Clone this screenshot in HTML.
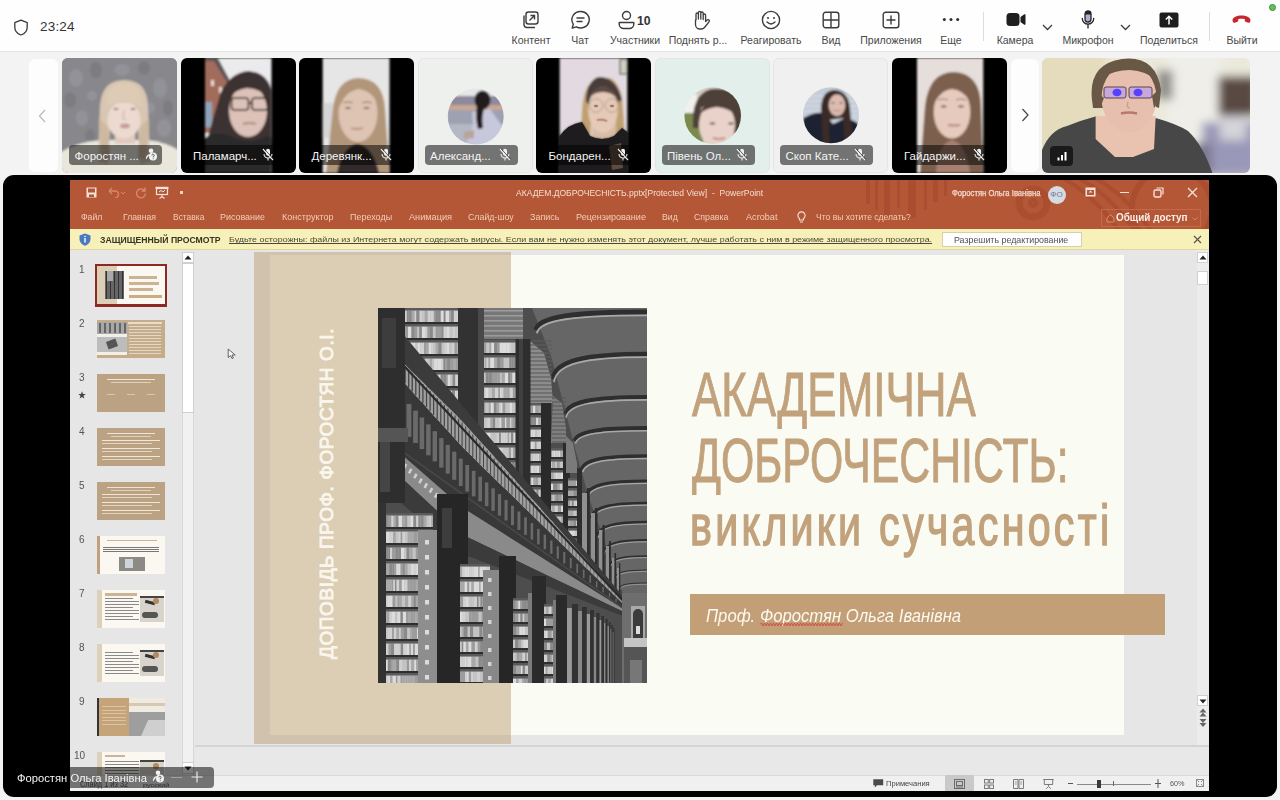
<!DOCTYPE html>
<html><head><meta charset="utf-8">
<style>
*{margin:0;padding:0;box-sizing:border-box}
html,body{width:1280px;height:800px;overflow:hidden;background:#f3f3f3;font-family:"Liberation Sans",sans-serif;position:relative}
.a{position:absolute}
#top{left:0;top:0;width:1280px;height:52px;background:#fefefe;border-bottom:1px solid #e4e4e4}
.lbl{position:absolute;top:34px;font-size:10.5px;color:#484848;white-space:nowrap;transform:translateX(-50%)}
.sep{position:absolute;top:12px;width:1px;height:29px;background:#dcdcdc}
.tile{position:absolute;top:58px;width:115px;height:115px;border-radius:6px;overflow:hidden;background:#000}
.tile>svg{position:absolute;left:0;top:0}
.nm{position:absolute;left:7px;top:87px;width:93px;height:20px;border-radius:4px;background:rgba(0,0,0,.52);color:#f4f4f4;font-size:11.5px;line-height:22.5px;padding-left:5.5px;white-space:nowrap}
.tile .mic{position:absolute;left:74px;top:3px}
#share{left:3px;top:175px;width:1274px;height:622px;background:#000;border-radius:11px}
#ppt{left:70px;top:180px;width:1139px;height:611px;background:#e6e6e6;overflow:hidden}
</style></head><body>
<div id="top" class="a">
<svg class="a" style="left:13px;top:19px" width="16" height="17" viewBox="0 0 16 17"><path d="M8 1.2 L14.2 3.6 V8.2 C14.2 12 11.6 14.6 8 16 C4.4 14.6 1.8 12 1.8 8.2 V3.6 Z" fill="none" stroke="#3a3a3a" stroke-width="1.3" stroke-linejoin="round"/></svg>
<div class="a" style="left:40px;top:19px;font-size:13.5px;color:#333;letter-spacing:0.2px">23:24</div>
<!-- content icon -->
<svg class="a" style="left:521px;top:10px" width="19" height="20" viewBox="0 0 19 20"><rect x="5" y="2" width="12" height="12" rx="2.5" fill="none" stroke="#3c3c3c" stroke-width="1.4"/><path d="M3 5.5 V14.5 A3 3 0 0 0 6 17.5 H14" fill="none" stroke="#3c3c3c" stroke-width="1.4"/><path d="M8.5 10.5 L13.5 5.5 M9.5 5.5 H13.5 V9.5" fill="none" stroke="#3c3c3c" stroke-width="1.4"/></svg>
<div class="lbl" style="left:531px">Контент</div>
<!-- chat -->
<svg class="a" style="left:570px;top:10px" width="21" height="20" viewBox="0 0 21 20"><path d="M10.5 1.5 A8.5 8.2 0 1 1 6.5 16.8 L2.2 18 L3.3 14.2 A8.5 8.2 0 0 1 10.5 1.5 Z" fill="none" stroke="#3c3c3c" stroke-width="1.4" stroke-linejoin="round"/><path d="M7 8 H14 M7 11.5 H12" stroke="#3c3c3c" stroke-width="1.4" stroke-linecap="round"/></svg>
<div class="lbl" style="left:580px">Чат</div>
<!-- participants -->
<svg class="a" style="left:617px;top:10px" width="19" height="20" viewBox="0 0 19 20"><circle cx="9.5" cy="5.5" r="4" fill="none" stroke="#3c3c3c" stroke-width="1.4"/><path d="M2.2 12.5 H16.8 V14 A4.5 4.5 0 0 1 12.3 18.5 H6.7 A4.5 4.5 0 0 1 2.2 14 Z" fill="none" stroke="#3c3c3c" stroke-width="1.4" stroke-linejoin="round"/></svg>
<div class="a" style="left:637px;top:13.5px;font-size:12.2px;font-weight:bold;color:#333">10</div>
<div class="lbl" style="left:635px">Участники</div>
<!-- hand -->
<svg class="a" style="left:691px;top:10px" width="19" height="20" viewBox="0 0 19 20"><path d="M5 10 V4.2 A1.2 1.2 0 0 1 7.4 4.2 V9 V2.6 A1.2 1.2 0 0 1 9.8 2.6 V9 V3.2 A1.2 1.2 0 0 1 12.2 3.2 V9.5 V5.2 A1.2 1.2 0 0 1 14.6 5.2 V11.5 L16.5 9.8 A1.3 1.3 0 0 1 18 11.8 L13.5 17.5 A4 4 0 0 1 10.4 19 H9 A4.5 4.5 0 0 1 4.5 14.5 V10 Z" fill="none" stroke="#3c3c3c" stroke-width="1.3" stroke-linejoin="round"/></svg>
<div class="lbl" style="left:698px">Поднять р...</div>
<!-- smile -->
<svg class="a" style="left:761px;top:10px" width="20" height="20" viewBox="0 0 20 20"><circle cx="10" cy="10" r="8.6" fill="none" stroke="#3c3c3c" stroke-width="1.4"/><circle cx="7" cy="8" r="1" fill="#3c3c3c"/><circle cx="13" cy="8" r="1" fill="#3c3c3c"/><path d="M6 12 Q10 15.8 14 12" fill="none" stroke="#3c3c3c" stroke-width="1.4" stroke-linecap="round"/></svg>
<div class="lbl" style="left:771px">Реагировать</div>
<!-- grid -->
<svg class="a" style="left:822px;top:11px" width="18" height="18" viewBox="0 0 18 18"><rect x="1.2" y="1.2" width="15.6" height="15.6" rx="2.5" fill="none" stroke="#3c3c3c" stroke-width="1.4"/><path d="M9 1.2 V16.8 M1.2 9 H16.8" stroke="#3c3c3c" stroke-width="1.4"/></svg>
<div class="lbl" style="left:831px">Вид</div>
<!-- apps -->
<svg class="a" style="left:882px;top:11px" width="18" height="18" viewBox="0 0 18 18"><rect x="1.2" y="1.2" width="15.6" height="15.6" rx="2.5" fill="none" stroke="#3c3c3c" stroke-width="1.4"/><path d="M9 4.5 V13.5 M4.5 9 H13.5" stroke="#3c3c3c" stroke-width="1.4"/></svg>
<div class="lbl" style="left:891px">Приложения</div>
<!-- more -->
<svg class="a" style="left:942px;top:17px" width="18" height="5" viewBox="0 0 18 5"><circle cx="2.3" cy="2.5" r="1.5" fill="#2e2e2e"/><circle cx="9" cy="2.5" r="1.5" fill="#2e2e2e"/><circle cx="15.7" cy="2.5" r="1.5" fill="#2e2e2e"/></svg>
<div class="lbl" style="left:951px">Еще</div>
<div class="sep" style="left:983px"></div>
<!-- camera -->
<svg class="a" style="left:1006px;top:12px" width="20" height="15" viewBox="0 0 20 15"><rect x="0.5" y="1" width="13" height="13" rx="3.5" fill="#1e1e1e"/><path d="M14.5 5 L18.3 2.3 A0.8 0.8 0 0 1 19.5 3 V12 A0.8 0.8 0 0 1 18.3 12.7 L14.5 10 Z" fill="#1e1e1e"/></svg>
<svg class="a" style="left:1042px;top:24px" width="11" height="7" viewBox="0 0 11 7"><path d="M1 1 L5.5 5.5 L10 1" fill="none" stroke="#3c3c3c" stroke-width="1.3"/></svg>
<div class="lbl" style="left:1015px">Камера</div>
<!-- mic -->
<svg class="a" style="left:1080px;top:10px" width="16" height="19" viewBox="0 0 16 19"><rect x="5" y="1" width="6" height="11" rx="3" fill="#aab0d8" stroke="#222" stroke-width="1.3"/><path d="M5 1.5 h6 v3 h-6z" fill="#222"/><path d="M2.3 8.5 A5.7 5.7 0 0 0 13.7 8.5 M8 14.2 V18" fill="none" stroke="#222" stroke-width="1.3" stroke-linecap="round"/></svg>
<svg class="a" style="left:1120px;top:24px" width="11" height="7" viewBox="0 0 11 7"><path d="M1 1 L5.5 5.5 L10 1" fill="none" stroke="#3c3c3c" stroke-width="1.3"/></svg>
<div class="lbl" style="left:1088px">Микрофон</div>
<!-- share -->
<svg class="a" style="left:1159px;top:12px" width="20" height="16" viewBox="0 0 20 16"><rect x="0.5" y="0.5" width="19" height="15" rx="2" fill="#1e1e1e"/><path d="M10 12.5 V4.5 M6.8 7.5 L10 4.3 L13.2 7.5" fill="none" stroke="#fff" stroke-width="1.5"/></svg>
<div class="lbl" style="left:1169px">Поделиться</div>
<div class="sep" style="left:1209px"></div>
<!-- leave -->
<svg class="a" style="left:1231px;top:14px" width="21" height="10" viewBox="0 0 21 10"><path d="M1.5 6.5 C1.5 3 6 1.5 10.5 1.5 C15 1.5 19.5 3 19.5 6.5 L19 8 C18.7 8.8 18 9 17.2 8.7 L14.6 7.8 C14 7.6 13.7 7 13.8 6.3 L13.9 5.3 C12 4.7 9 4.7 7.1 5.3 L7.2 6.3 C7.3 7 7 7.6 6.4 7.8 L3.8 8.7 C3 9 2.3 8.8 2 8 Z" fill="#c8262e"/></svg>
<div class="lbl" style="left:1242px">Выйти</div>
<div class="a" style="left:1269px;top:4px;width:7px;height:7px;border-radius:50%;background:#5dc25a;border:1px solid #3d8f3a"></div>
</div>
<div id="strip" class="a" style="left:0;top:53px;width:1280px;height:122px;background:#f3f3f3"></div>
<svg width="0" height="0" style="position:absolute"><defs>
<filter id="b05" x="-5%" y="-5%" width="110%" height="110%"><feGaussianBlur stdDeviation="0.6"/></filter>
<filter id="b1" x="-20%" y="-20%" width="140%" height="140%"><feGaussianBlur stdDeviation="1.1"/></filter>
<filter id="b2" x="-20%" y="-20%" width="140%" height="140%"><feGaussianBlur stdDeviation="2.2"/></filter>
<filter id="b3" x="-20%" y="-20%" width="140%" height="140%"><feGaussianBlur stdDeviation="5"/></filter>
<symbol id="mmic" viewBox="0 0 12 13"><rect x="4" y="0.8" width="4" height="7" rx="2" fill="#f0f0f0"/><path d="M2 6 A4 4 0 0 0 10 6 M6 10 V12.5" fill="none" stroke="#f0f0f0" stroke-width="1.1"/><path d="M1 1 L11 12" stroke="#f0f0f0" stroke-width="1.2"/><path d="M2 0.6 L12 11.6" stroke="rgba(40,40,40,.8)" stroke-width="0.9"/></symbol>
<symbol id="cohost" viewBox="0 0 13 13"><circle cx="6" cy="2.8" r="2.3" fill="#f2f2f2"/><path d="M1 11.5 A4 4.5 0 0 1 5 6" fill="#f2f2f2"/><circle cx="8" cy="8.5" r="4" fill="#f2f2f2"/><path d="M6.8 7.4 A1.2 1.2 0 1 1 8.2 8.6 V9.4" fill="none" stroke="#555" stroke-width="0.9"/><circle cx="8.2" cy="10.8" r="0.5" fill="#555"/></symbol>
</defs></svg>
<div class="a" style="left:29px;top:59px;width:29px;height:113px;background:#fdfdfd;border-radius:6px"></div>
<svg class="a" style="left:38px;top:109px" width="9" height="14" viewBox="0 0 9 14"><path d="M7 1 L1.5 7 L7 13" fill="none" stroke="#b8b8b8" stroke-width="1.2"/></svg>
<div class="a" style="left:1011px;top:59px;width:28px;height:113px;background:#fdfdfd;border-radius:6px"></div>
<svg class="a" style="left:1021px;top:108px" width="9" height="14" viewBox="0 0 9 14"><path d="M1.5 1 L7 7 L1.5 13" fill="none" stroke="#444" stroke-width="1.2"/></svg>
<div class="tile" style="left:62px;width:115px;background:#87878c"><svg width="115" height="115" viewBox="0 0 115 115"><g filter="url(#b1)">
<rect x="-10" y="-10" width="135" height="135" fill="#87878c"/>
<g fill="#a0a0a8" opacity=".45"><ellipse cx="14" cy="20" rx="7" ry="9"/><ellipse cx="60" cy="12" rx="8" ry="6"/><ellipse cx="98" cy="30" rx="7" ry="10"/><ellipse cx="20" cy="60" rx="6" ry="8"/><ellipse cx="102" cy="70" rx="7" ry="9"/><ellipse cx="12" cy="95" rx="8" ry="7"/><ellipse cx="30" cy="38" rx="5" ry="5"/><ellipse cx="88" cy="50" rx="5" ry="6"/></g>
<g fill="#6c6c72" opacity=".4"><ellipse cx="34" cy="12" rx="6" ry="8"/><ellipse cx="82" cy="10" rx="6" ry="7"/><ellipse cx="8" cy="42" rx="6" ry="8"/><ellipse cx="106" cy="50" rx="5" ry="8"/><ellipse cx="28" cy="78" rx="5" ry="7"/><ellipse cx="96" cy="92" rx="6" ry="6"/></g>
<path d="M-10 125 V100 Q10 84 40 82 H84 Q108 84 125 98 V125Z" fill="#e9e6dc"/>
<path d="M36 104 L38 48 Q40 22 62 22 Q85 22 86 48 L88 104 L78 106 L76 70 H48 L46 106Z" fill="#d8c6b2"/>
<rect x="53" y="74" width="20" height="12" fill="#e2cabd"/>
<ellipse cx="62" cy="62" rx="16.5" ry="18.5" fill="#ecdad0"/>
<path d="M44 48 Q44 25 62 25 Q81 25 80 48 Q72 45 62 45 Q52 45 44 48Z" fill="#ddcbb6"/>
<path d="M37 60 Q36 78 42 100 L48 100 L46 70Z M87 60 Q88 78 82 100 L76 100 L78 70Z" fill="#cdb8a0"/>
<ellipse cx="54.0" cy="51.0" rx="2.5" ry="0.9" fill="#8a7068"/><ellipse cx="71.0" cy="51.0" rx="2.5" ry="0.9" fill="#8a7068"/>
<path d="M62 52 L61 60 Q62 62 64 61" fill="none" stroke="#d8b8ac" stroke-width="1.5"/>
<ellipse cx="63" cy="68" rx="5" ry="2.5" fill="#c89c98"/>
</g></svg><div class="nm" style="left:7px;top:87px">Форостян ...<svg style="position:absolute;left:76px;top:3px" width="13" height="13"><use href="#cohost"/></svg></div></div>
<div class="tile" style="left:180.5px;width:115px;background:#000"><svg width="115" height="115" viewBox="0 0 115 115"><g filter="url(#b1)">
<rect x="24" y="0" width="66.5" height="115" fill="#ebebed"/>
<path d="M24 -5 H34 L48 21 V75 H24Z" fill="#a26c5c"/>
<path d="M24 -5 H34 L48 21 L47 26 L33 3 H24Z" fill="#5a5458"/>
<rect x="30" y="22" width="3" height="6" fill="#e8d8d0"/><rect x="38" y="29" width="3" height="6" fill="#e8d8d0"/>
<rect x="24" y="44" width="7" height="25" fill="#8fa4b8"/>
<path d="M24 90 Q32 60 40 34 Q50 14 68 13 Q86 15 90.5 32 V100 H24Z" fill="#3e3230"/>
<ellipse cx="67" cy="53" rx="19" ry="26" fill="#dcc2b8"/>
<path d="M47 42 Q49 24 64 22 Q82 22 87 40 Q80 31 66 30 Q54 31 47 42Z" fill="#3e3230"/>
<rect x="50.5" y="40" width="17" height="12" rx="3" fill="none" stroke="#3a2a26" stroke-width="1.6"/>
<rect x="71" y="40" width="16" height="12" rx="3" fill="none" stroke="#3a2a26" stroke-width="1.6"/>
<path d="M67.5 45 H71" stroke="#3a2a26" stroke-width="1.6"/>
<path d="M62 66 Q69 64 75 66" stroke="#b08880" stroke-width="2" fill="none"/>
<path d="M24 115 V80 Q34 72 50 78 Q68 88 86 78 L90.5 80 V115Z" fill="#2a2a2c"/>
</g></svg><div class="nm" style="left:7px;top:87px">Паламарч...<svg class="mic" width="12" height="13"><use href="#mmic"/></svg></div></div>
<div class="tile" style="left:299px;width:115px;background:#000"><svg width="115" height="115" viewBox="0 0 115 115"><g filter="url(#b1)">
<rect x="23.7" y="0" width="66.8" height="115" fill="#e6e6e6"/>
<rect x="23.7" y="45" width="12" height="35" fill="#d5d5d5"/>
<path d="M27 115 L34 50 Q38 20 60 20 Q84 21 86 50 L90.5 115Z" fill="#b2967a"/>
<ellipse cx="59" cy="55" rx="19.5" ry="29" fill="#dec4b2"/>
<path d="M40 50 Q41 24 60 23 Q79 24 80 50 Q76 34 60 31 Q46 33 40 50Z" fill="#b2967a"/>
<ellipse cx="49.0" cy="50.0" rx="3.0" ry="1.1" fill="#7a6254"/><ellipse cx="67.5" cy="50.0" rx="3.0" ry="1.1" fill="#7a6254"/>
<path d="M44 45 Q49 43 54 45 M63 45 Q68 43 73 45" stroke="#a88a78" stroke-width="1.3" fill="none"/>
<path d="M52 70 Q58 72 64 70" stroke="#b88c80" stroke-width="1.8" fill="none"/>
<path d="M38 115 Q44 88 58 86 Q74 88 80 115Z" fill="#302a2a"/>
</g></svg><div class="nm" style="left:7px;top:87px">Деревянк...<svg class="mic" width="12" height="13"><use href="#mmic"/></svg></div></div>
<div class="tile" style="left:417.5px;width:115px;background:#eef0ee;border:1px solid #e4e6e5"><svg width="115" height="115" viewBox="0 0 115 115" style="left:-1px;top:-1px"><defs><clipPath id="c4"><circle cx="57.7" cy="58.6" r="28"/></clipPath></defs>
<g clip-path="url(#c4)"><g filter="url(#b1)">
<rect x="29" y="30" width="58" height="58" fill="#e4e6ea"/>
<rect x="29" y="38" width="58" height="9" fill="#8c8a9c"/>
<rect x="29" y="47" width="58" height="5" fill="#c9a692"/>
<rect x="29" y="52" width="58" height="14" fill="#9ca2b2"/>
<rect x="29" y="66" width="58" height="22" fill="#b4b8c4"/>
<path d="M54 54 L72 51 L84 68 L82 88 L48 88 L55 66Z" fill="#c8c8dc"/>
<path d="M46 74 L56 72 L56 80 L46 81Z" fill="#b8a498"/>
<ellipse cx="64.5" cy="42" rx="8" ry="9.5" fill="#221c1e"/>
<path d="M59 47 Q57 60 60 71 L65 70 Q63 58 67 48Z" fill="#221c1e"/>
</g></g></svg><div class="nm" style="left:6px;top:86px">Александ...<svg class="mic" width="12" height="13"><use href="#mmic"/></svg></div></div>
<div class="tile" style="left:536px;width:115px;background:#000"><svg width="115" height="115" viewBox="0 0 115 115"><g filter="url(#b1)">
<rect x="23.7" y="0" width="67.6" height="115" fill="#e2dae0"/>
<rect x="84" y="1.5" width="7.3" height="14.5" fill="#cfd0c4" stroke="#5a5a50" stroke-width="1.2"/>
<path d="M46 80 Q44 40 52 28 Q62 18 74 20 Q86 26 87 50 L90 92 L80 92 L78 50 L56 50 L54 84Z" fill="#bfa070"/>
<path d="M50 44 Q50 24 62 19 Q80 18 86 42 L82 44 Q76 30 66 30 Q56 31 53 46Z" fill="#4a3e3a"/>
<rect x="56" y="60" width="24" height="26" fill="#d9bca8"/>
<ellipse cx="67" cy="52" rx="14.8" ry="23" fill="#e5cab8"/>
<path d="M53 40 Q56 29 67 29 Q78 29 81 40 Q75 34 67 34 Q58 34 53 40Z" fill="#5a4a42"/>
<circle cx="60" cy="47.5" r="6.8" fill="none" stroke="#b09888" stroke-width="1"/>
<circle cx="76" cy="47.5" r="6.8" fill="none" stroke="#b09888" stroke-width="1"/>
<ellipse cx="60.0" cy="48.0" rx="2.2" ry="0.8" fill="#7a6258"/><ellipse cx="76.0" cy="48.0" rx="2.2" ry="0.8" fill="#7a6258"/>
<path d="M61 62 Q66 61 71 63" stroke="#b8907e" stroke-width="1.6" fill="none"/>
<path d="M23.7 115 V78 Q32 66 46 64 L54 78 Q66 84 78 78 L86 70 L91.3 74 V115Z" fill="#1e1c1e"/>
<path d="M73 88 L85 85 L87 110 L76 112Z" fill="#5e4c40"/>
</g><ellipse cx="60.0" cy="48.0" rx="2.2" ry="0.8" fill="#7a6258"/><ellipse cx="76.0" cy="48.0" rx="2.2" ry="0.8" fill="#7a6258"/>
<path d="M61 62 Q66 61 71 63" stroke="#b8907e" stroke-width="1.6" fill="none"/>
<path d="M23.7 115 V78 Q32 66 46 64 L54 78 Q66 84 78 78 L86 70 L91.3 74 V115Z" fill="#1e1c1e"/>
<path d="M73 88 L85 85 L87 110 L76 112Z" fill="#5e4c40"/>
</g></svg><div class="nm" style="left:7px;top:87px">Бондарен...<svg class="mic" width="12" height="13"><use href="#mmic"/></svg></div></div>
<div class="tile" style="left:654.5px;width:115px;background:#e3efea;border:1px solid #dde8e4"><svg width="115" height="115" viewBox="0 0 115 115" style="left:-1px;top:-1px"><defs><clipPath id="c6"><circle cx="57.7" cy="57.6" r="28.3"/></clipPath></defs>
<g clip-path="url(#c6)"><g filter="url(#b1)">
<rect x="28" y="28" width="60" height="60" fill="#d6ccc6"/>
<rect x="28" y="36" width="14" height="20" fill="#f0f0ee"/>
<rect x="28" y="55" width="20" height="33" fill="#7a8a4e"/>
<path d="M38 70 Q36 36 56 31 Q82 28 88 50 L90 80 L80 80 L76 50 Q62 40 46 50 L44 70Z" fill="#4e4038"/>
<ellipse cx="62" cy="67" rx="18" ry="23" fill="#e9d2ca"/>
<path d="M44 56 Q50 42 64 43 Q78 45 82 58 Q74 50 62 49 Q52 50 44 56Z" fill="#4e4038"/>
<ellipse cx="57.5" cy="65.5" rx="3.0" ry="1.1" fill="#5a4440"/><ellipse cx="76.0" cy="65.5" rx="3.0" ry="1.1" fill="#5a4440"/>
<path d="M58 80 Q64 82 70 80" stroke="#c08a88" stroke-width="2" fill="none"/>
</g></g></svg><div class="nm" style="left:6px;top:86px">Півень Ол...<svg class="mic" width="12" height="13"><use href="#mmic"/></svg></div></div>
<div class="tile" style="left:773px;width:115px;background:#eff0ef;border:1px solid #e4e5e4"><svg width="115" height="115" viewBox="0 0 115 115" style="left:-1px;top:-1px"><defs><clipPath id="c7"><circle cx="58" cy="57.3" r="28"/></clipPath></defs>
<g clip-path="url(#c7)"><g filter="url(#b1)">
<rect x="28" y="28" width="60" height="60" fill="#c4ccd8"/>
<g stroke="#dfe4ea" stroke-width="1.2">
<path d="M30 38 H88 M30 43 H88 M30 48 H88 M30 53 H88 M30 58 H88 M30 63 H88"/></g>
<path d="M30 60 Q45 52 52 56 L60 66 L72 60 Q84 62 88 70 V90 H30Z" fill="#1c2230"/>
<path d="M50 90 L48 50 Q49 32 62 32 Q75 33 77 50 L80 90 L72 90 L70 60 L56 62 L57 90Z" fill="#3a2a28"/>
<ellipse cx="64" cy="47.3" rx="8.3" ry="11" fill="#dcbcb0"/>
<ellipse cx="60.0" cy="45.0" rx="1.5" ry="0.7" fill="#5a4038"/><ellipse cx="68.0" cy="45.0" rx="1.5" ry="0.7" fill="#5a4038"/>
<path d="M60 52 Q64 54 68 52" stroke="#b8887e" stroke-width="1.3" fill="none"/>
</g></g></svg><div class="nm" style="left:6px;top:86px">Скоп Кате...<svg class="mic" width="12" height="13"><use href="#mmic"/></svg></div></div>
<div class="tile" style="left:891.5px;width:115px;background:#000"><svg width="115" height="115" viewBox="0 0 115 115"><g filter="url(#b1)">
<rect x="25" y="0" width="66.3" height="115" fill="#e6dedb"/>
<path d="M28 115 L33 48 Q37 14 62 14 Q88 15 89 48 L91.3 115Z" fill="#7c604e"/>
<ellipse cx="60" cy="54" rx="18.3" ry="26.6" fill="#e6cabd"/>
<path d="M41 48 Q43 24 61 23 Q79 24 80 46 Q72 32 60 31 Q48 32 41 48Z" fill="#7c604e"/>
<ellipse cx="51.7" cy="48.5" rx="3.0" ry="0.9" fill="#6a5048"/><ellipse cx="69.0" cy="48.5" rx="3.0" ry="0.9" fill="#6a5048"/>
<path d="M46 42 Q51 40 56 42 M64 42 Q69 40 74 42" stroke="#9a7868" stroke-width="1.2" fill="none"/>
<path d="M56 67 Q62 68 68 67" stroke="#b88a80" stroke-width="1.8" fill="none"/>
<path d="M44 115 Q46 85 60 82 Q74 85 78 115Z" fill="#a88070"/>
</g></svg><div class="nm" style="left:7px;top:87px">Гайдаржи...<svg class="mic" width="12" height="13"><use href="#mmic"/></svg></div></div>
<div class="tile" style="left:1042px;width:208px;background:#ebe8d8"><svg width="208" height="115" viewBox="0 0 208 115"><g filter="url(#b3)">
<rect x="-10" y="-10" width="228" height="135" fill="#ebe9dc"/>
<rect x="-10" y="-10" width="75" height="135" fill="#e4dcbc"/>
<rect x="125" y="-10" width="55" height="135" fill="#efeee8"/>
<rect x="115" y="12" width="16" height="30" fill="#8e8c88"/>
<rect x="176" y="18" width="40" height="40" fill="#5a4a42"/>
<rect x="160" y="64" width="56" height="55" fill="#9a98b8"/>
<rect x="178" y="58" width="26" height="24" fill="#d4d4da"/>
<rect x="150" y="85" width="20" height="30" fill="#7a7890"/>
</g>
<g filter="url(#b05)">
<path d="M50 42 Q46 6 80 1 Q114 -3 119 32 L117 50 L106 46 L102 20 Q86 12 68 18 L62 50 L51 50Z" fill="#6a5846"/>
<path d="M0 120 V92 Q8 72 25 68 Q40 62 55 58 L68 91 L91 99 L113.7 60 Q135 66 146 73 Q162 88 172 120Z" fill="#474747"/>
<path d="M53.6 58 L113.7 58 L112 91 L91 99 L73 99 L53.6 81Z" fill="#e9c2b0"/>
<ellipse cx="87" cy="40" rx="27.5" ry="34" fill="#e7bfae"/>
<path d="M60 20 Q68 3 88 3 Q108 4 114 22 Q104 13 88 12 Q72 12 60 20Z" fill="#6a5846"/>
<path d="M50 30 Q54 48 58 50 L62 40 Z M118 30 Q116 46 112 50 L110 38Z" fill="#6a5846"/>
<rect x="62" y="29" width="22" height="11" rx="2" fill="#c8a8d8" stroke="#4a3a48" stroke-width="0.9"/>
<rect x="87" y="29" width="23" height="11" rx="2" fill="#c8a8d8" stroke="#4a3a48" stroke-width="0.9"/>
<ellipse cx="75" cy="34.5" rx="4.5" ry="3.8" fill="#5840ff"/><ellipse cx="96" cy="34.5" rx="4.5" ry="3.8" fill="#5840ff"/>
<path d="M86 44 Q84 50 88 50" stroke="#c8a090" stroke-width="1.5" fill="none"/>
<path d="M79 55.5 Q87 53.5 95 55.5" stroke="#b8786c" stroke-width="2.4" fill="none"/>
</g></svg><div class="a" style="left:8px;top:88px;width:23px;height:20px;border-radius:4px;background:rgba(20,20,20,.88)"></div><svg class="a" style="left:15px;top:93px" width="10" height="10" viewBox="0 0 10 10"><rect x="0.5" y="6.5" width="2" height="3" fill="#fff"/><rect x="4" y="4" width="2" height="5.5" fill="#fff"/><rect x="7.5" y="1" width="2" height="8.5" fill="#fff"/></svg></div>
<div id="share" class="a"></div>
<div id="ppt" class="a">
<!-- title bar -->
<div class="a" style="left:0;top:0;width:1139px;height:49px;background:#b35736"></div>
<svg class="a" style="left:750px;top:0" width="389" height="49" viewBox="0 0 389 49">
<g fill="#a4462c" opacity=".55">
<rect x="46" y="0" width="4" height="24"/><rect x="55" y="0" width="3" height="30"/><rect x="64" y="0" width="6" height="36"/><rect x="77" y="0" width="3" height="28"/><rect x="88" y="0" width="8" height="38"/><rect x="104" y="0" width="3" height="30"/><rect x="113" y="0" width="5" height="22"/><rect x="124" y="0" width="3" height="16"/>
</g>
<g fill="none" stroke="#a4462c" opacity=".5">
<circle cx="213" cy="23" r="14" stroke-width="7"/><circle cx="213" cy="23" r="3" stroke-width="4"/>
<path d="M238 -4 Q270 10 300 52 M254 -4 Q286 10 316 52 M270 -4 Q302 10 332 52" stroke-width="4"/>
<circle cx="352" cy="28" r="40" stroke-width="6"/>
</g></svg>
<!-- quick access -->
<svg class="a" style="left:16px;top:7px" width="11" height="11" viewBox="0 0 11 11"><path d="M0.5 0.5 H10.5 V10.5 H0.5Z" fill="#f5e3da"/><rect x="2" y="1.5" width="7" height="4" fill="#b35736"/><rect x="3" y="7.5" width="5" height="2.5" fill="#b35736"/></svg>
<svg class="a" style="left:37px;top:7px" width="20" height="11" viewBox="0 0 20 11"><path d="M2 4 H8 A3.5 3.5 0 0 1 8 11 M2 4 L5 1 M2 4 L5 7" fill="none" stroke="#d98a6e" stroke-width="1.3"/><path d="M14 5 L16 7 L18 5" fill="none" stroke="#d98a6e" stroke-width="1"/></svg>
<svg class="a" style="left:65px;top:7px" width="12" height="12" viewBox="0 0 12 12"><path d="M9.5 3.5 A4.5 4.5 0 1 0 10.5 6.5 M10 0.5 V4 H6.5" fill="none" stroke="#d98a6e" stroke-width="1.3"/></svg>
<svg class="a" style="left:85px;top:6px" width="14" height="13" viewBox="0 0 14 13"><rect x="0.5" y="0.8" width="13" height="2" fill="#f5e3da"/><rect x="1.5" y="2.5" width="11" height="6" fill="none" stroke="#f5e3da" stroke-width="1.2"/><path d="M4 6 L6 4.5 L8 6 L10 4" fill="none" stroke="#f5e3da" stroke-width="1"/><path d="M7 8.5 V11 M4.5 12.5 L7 10.5 L9.5 12.5" fill="none" stroke="#f5e3da" stroke-width="1.1"/></svg>
<div class="a" style="left:110px;top:11px;width:3px;height:3px;background:#f0d5c8"></div>
<div class="a" style="left:977.5px;top:5.5px;width:18px;height:18px;border-radius:50%;background:#d6dae2;color:#6a7a98;font-size:8px;line-height:18px;text-align:center">ФО</div>
<svg class="a" style="left:1015px;top:7px" width="11" height="10" viewBox="0 0 11 10"><rect x="0.5" y="0.5" width="10" height="9" fill="#f5e3da"/><rect x="2" y="3" width="7" height="5" fill="#b35736"/><path d="M5.5 3.5 L3.5 5.5 H7.5Z" fill="#f5e3da"/></svg>
<div class="a" style="left:1050px;top:12px;width:9px;height:1.3px;background:#f5e3da"></div>
<svg class="a" style="left:1083px;top:7px" width="11" height="11" viewBox="0 0 11 11"><rect x="1" y="3" width="7" height="7" rx="1.5" fill="none" stroke="#f5e3da" stroke-width="1.4"/><path d="M3.5 1 H10 V7.5" fill="none" stroke="#f5e3da" stroke-width="1.2"/></svg>
<svg class="a" style="left:1117px;top:7px" width="11" height="11" viewBox="0 0 11 11"><path d="M1 1 L10 10 M10 1 L1 10" stroke="#f5e3da" stroke-width="1.3"/></svg>
<!-- menu -->
<svg class="a" style="left:727px;top:30px" width="9" height="13" viewBox="0 0 9 13"><path d="M2.5 8.5 A3.6 3.6 0 1 1 6.5 8.5 V10 H2.5Z M3 12 H6" fill="none" stroke="#f5e3da" stroke-width="1.1"/></svg>
<div class="a" style="left:1031px;top:28.5px;width:100px;height:18px;border:1px solid #c4694c"></div>
<svg class="a" style="left:1036px;top:33px" width="9" height="10" viewBox="0 0 9 10"><path d="M1 9 V5 L4.5 1.5 L8 5 V9Z" fill="none" stroke="#d98a6e" stroke-width="1"/></svg>
<svg class="a" style="left:1122px;top:37px" width="6" height="4" viewBox="0 0 6 4"><path d="M0.5 0.5 L3 3 L5.5 0.5" fill="none" stroke="#d98a6e" stroke-width="0.9"/></svg>

<!-- yellow bar -->
<div class="a" style="left:0;top:49px;width:1139px;height:21px;background:#f8f0b9;border-bottom:1px solid #e0d6a0"></div>
<svg class="a" style="left:9px;top:53px" width="12" height="13" viewBox="0 0 12 13"><path d="M6 0.5 L11.5 2.5 V6 C11.5 9.5 9 11.5 6 12.7 C3 11.5 0.5 9.5 0.5 6 V2.5Z" fill="#4a7ac0"/><rect x="5.3" y="5" width="1.4" height="4.5" fill="#fff"/><circle cx="6" cy="3.5" r="0.8" fill="#fff"/></svg>
<div class="a" style="left:872px;top:52px;width:140px;height:15px;background:#fff;border:1px solid #d6d0b0;"></div>
<svg class="a" style="left:1123px;top:55px" width="9" height="9" viewBox="0 0 9 9"><path d="M1 1 L8 8 M8 1 L1 8" stroke="#555" stroke-width="1.2"/></svg>

<!-- body -->
<div class="a" style="left:0;top:70px;width:112px;height:525px;background:#e6e6e6"></div>
<div class="a" style="left:112px;top:72px;width:12px;height:523px;background:#f1f1f1;border-left:1px solid #d8d8d8;border-right:1px solid #d8d8d8"></div>
<div class="a" style="left:112px;top:72px;width:12px;height:11px;background:#fff;border:1px solid #d0d0d0"></div>
<svg class="a" style="left:114px;top:75px" width="8" height="5" viewBox="0 0 8 5"><path d="M0.5 4.5 L4 0.5 L7.5 4.5Z" fill="#222"/></svg>
<div class="a" style="left:112px;top:83px;width:12px;height:150px;background:#fff;border:1px solid #d0d0d0"></div>
<div class="a" style="left:112px;top:582px;width:12px;height:12px;background:#fff;border:1px solid #d0d0d0"></div>
<svg class="a" style="left:114px;top:586px" width="8" height="5" viewBox="0 0 8 5"><path d="M0.5 0.5 L4 4.5 L7.5 0.5Z" fill="#222"/></svg>
<div class="a" style="left:125px;top:70px;width:1002px;height:525px;background:#e6e6e6"></div>
<!-- notes divider -->
<div class="a" style="left:125px;top:565px;width:1014px;height:2px;background:#d4d4d4"></div>
<div class="a" style="left:125px;top:567px;width:1014px;height:28px;background:#e8e8e8"></div>
<!-- right scrollbar -->
<div class="a" style="left:1127px;top:70px;width:12px;height:495px;background:#ececec"></div>
<div class="a" style="left:1127px;top:72px;width:11px;height:11px;background:#fff;border:1px solid #d0d0d0"></div>
<svg class="a" style="left:1129px;top:75px" width="8" height="5" viewBox="0 0 8 5"><path d="M0.5 4.5 L4 0.5 L7.5 4.5Z" fill="#222"/></svg>
<div class="a" style="left:1127px;top:91px;width:11px;height:14px;background:#fff;border:1px solid #d0d0d0"></div>
<div class="a" style="left:1127px;top:515px;width:11px;height:11px;background:#fff;border:1px solid #d0d0d0"></div>
<svg class="a" style="left:1129px;top:519px" width="8" height="5" viewBox="0 0 8 5"><path d="M0.5 0.5 L4 4.5 L7.5 0.5Z" fill="#222"/></svg>
<svg class="a" style="left:1129px;top:528px" width="8" height="20" viewBox="0 0 8 20"><path d="M0.5 4.5 L4 0.5 L7.5 4.5Z M0.5 8.5 L4 4.5 L7.5 8.5Z M0.5 11 L4 15 L7.5 11Z M0.5 15 L4 19 L7.5 15Z" fill="#666"/></svg>
<!-- status bar -->
<div class="a" style="left:0;top:595px;width:1139px;height:16px;background:#f0f0f0;border-top:1px solid #dadada"></div>
<svg class="a" style="left:803px;top:599px" width="11" height="9" viewBox="0 0 11 9"><path d="M0.3 0.3 H10.2 V6.3 H4 L1.8 8.6 V6.3 H0.3Z" fill="#4a4a4a"/></svg>
<div class="a" style="left:875px;top:595px;width:29px;height:16px;background:#c9c9c9"></div>
<svg class="a" style="left:883.5px;top:599px" width="11" height="10" viewBox="0 0 11 10"><rect x="0.5" y="0.5" width="10" height="9" fill="none" stroke="#6a6a6a"/><rect x="2.5" y="2.5" width="6" height="4" fill="none" stroke="#6a6a6a"/><path d="M2 8 H9" stroke="#6a6a6a"/></svg>
<svg class="a" style="left:914px;top:599px" width="10" height="10" viewBox="0 0 10 10"><rect x="0.5" y="0.5" width="3.8" height="3.5" fill="none" stroke="#7a7a7a"/><rect x="5.7" y="0.5" width="3.8" height="3.5" fill="none" stroke="#7a7a7a"/><rect x="0.5" y="6" width="3.8" height="3.5" fill="none" stroke="#7a7a7a"/><rect x="5.7" y="6" width="3.8" height="3.5" fill="none" stroke="#7a7a7a"/></svg>
<svg class="a" style="left:943px;top:599px" width="11" height="10" viewBox="0 0 11 10"><path d="M0.5 0.5 H5 V9.5 H0.5Z M6 0.5 H10.5 V9.5 H6Z" fill="none" stroke="#7a7a7a"/><path d="M1.8 3 H3.8 M1.8 5 H3.8 M7.2 3 H9.2 M7.2 5 H9.2" stroke="#9a9a9a"/></svg>
<svg class="a" style="left:973px;top:599px" width="11" height="10" viewBox="0 0 11 10"><path d="M0.3 0.5 H10.7 M1.3 0.5 V5.5 H9.7 V0.5 M5.5 5.5 V7.5 M3.2 9.7 L5.5 7.5 L7.8 9.7" fill="none" stroke="#7a7a7a"/></svg>
<div class="a" style="left:998px;top:603px;width:5px;height:1px;background:#555"></div>
<div class="a" style="left:1007px;top:603.5px;width:74px;height:1.2px;background:#8a8a8a"></div>
<div class="a" style="left:1027px;top:600px;width:4px;height:8px;background:#3a3a3a"></div>
<div class="a" style="left:1043px;top:601px;width:1.2px;height:5px;background:#666"></div>
<svg class="a" style="left:1085px;top:599px" width="6" height="9" viewBox="0 0 6 9"><path d="M3 0 V9 M0 4.5 H6" stroke="#555"/></svg>
<svg class="a" style="left:1126px;top:599px" width="8" height="8" viewBox="0 0 8 8"><rect x="0.5" y="0.5" width="7" height="7" fill="none" stroke="#8a8a8a"/><path d="M1.5 1.5 L3 3 M6.5 1.5 L5 3 M1.5 6.5 L3 5 M6.5 6.5 L5 5" stroke="#8a8a8a"/></svg>
</div>
<div id="slide" class="a" style="left:70px;top:180px;width:1139px;height:611px;overflow:hidden;pointer-events:none">
<div class="a" style="left:184px;top:72px;width:257px;height:492px;background:#d0c2ac"></div>
<div class="a" style="left:200px;top:75px;width:854px;height:480px;background:#fafbf2"></div>
<div class="a" style="left:200px;top:75px;width:241px;height:480px;background:#dbceb4"></div>
<div class="a t" id="vt" style="left:248px;top:479px;transform-origin:0 0;transform:rotate(-90deg);font-size:19px;font-weight:normal;-webkit-text-stroke:0.9px #faf6ee;color:#faf6ee;white-space:nowrap;letter-spacing:0.6px;line-height:18px">ДОПОВІДЬ ПРОФ. ФОРОСТЯН О.І.</div>
<svg class="a" id="lib" style="left:308px;top:128px" width="269" height="375" viewBox="0 0 269 375"><g filter="url(#b05)"><rect x="0.0" y="0.0" width="269.0" height="375.0" fill="#4d4d4d" /><rect x="27.0" y="0.0" width="63.0" height="110.0" fill="#b8b8b8" /><rect x="27.0" y="2.5" width="1.8" height="11.5" fill="#d0d0d0" /><rect x="28.8" y="2.5" width="2.0" height="11.5" fill="#8a8a8a" /><rect x="30.8" y="2.5" width="3.0" height="11.5" fill="#8a8a8a" /><rect x="33.8" y="2.5" width="2.8" height="11.5" fill="#a8a8a8" /><rect x="36.6" y="2.5" width="1.7" height="11.5" fill="#d0d0d0" /><rect x="38.3" y="2.5" width="3.3" height="11.5" fill="#8a8a8a" /><rect x="41.6" y="2.5" width="2.4" height="11.5" fill="#d0d0d0" /><rect x="43.9" y="2.5" width="2.9" height="11.5" fill="#c4c4c4" /><rect x="46.8" y="2.5" width="2.9" height="11.5" fill="#a8a8a8" /><rect x="49.8" y="2.5" width="2.7" height="11.5" fill="#d0d0d0" /><rect x="52.5" y="2.5" width="3.3" height="11.5" fill="#d0d0d0" /><rect x="55.8" y="2.5" width="1.5" height="11.5" fill="#9c9c9c" /><rect x="57.3" y="2.5" width="2.6" height="11.5" fill="#8a8a8a" /><rect x="59.9" y="2.5" width="2.9" height="11.5" fill="#8a8a8a" /><rect x="62.8" y="2.5" width="3.0" height="11.5" fill="#dcdcdc" /><rect x="65.7" y="2.5" width="1.9" height="11.5" fill="#8a8a8a" /><rect x="67.7" y="2.5" width="3.4" height="11.5" fill="#dcdcdc" /><rect x="71.0" y="2.5" width="2.0" height="11.5" fill="#a8a8a8" /><rect x="73.0" y="2.5" width="2.9" height="11.5" fill="#8a8a8a" /><rect x="75.9" y="2.5" width="3.4" height="11.5" fill="#d0d0d0" /><rect x="79.3" y="2.5" width="2.3" height="11.5" fill="#dcdcdc" /><rect x="81.6" y="2.5" width="3.3" height="11.5" fill="#d0d0d0" /><rect x="84.9" y="2.5" width="1.9" height="11.5" fill="#9c9c9c" /><rect x="86.8" y="2.5" width="3.2" height="11.5" fill="#d0d0d0" /><rect x="27.0" y="14.0" width="63.0" height="2.2" fill="#2e2e2e" /><rect x="27.0" y="0.0" width="63.0" height="2.5" fill="#5a5a5a" /><rect x="27.0" y="18.5" width="3.0" height="11.5" fill="#9c9c9c" /><rect x="30.0" y="18.5" width="3.4" height="11.5" fill="#dcdcdc" /><rect x="33.4" y="18.5" width="3.4" height="11.5" fill="#8a8a8a" /><rect x="36.8" y="18.5" width="2.5" height="11.5" fill="#9c9c9c" /><rect x="39.3" y="18.5" width="1.9" height="11.5" fill="#c4c4c4" /><rect x="41.2" y="18.5" width="2.7" height="11.5" fill="#8a8a8a" /><rect x="43.9" y="18.5" width="3.2" height="11.5" fill="#dcdcdc" /><rect x="47.1" y="18.5" width="2.3" height="11.5" fill="#d0d0d0" /><rect x="49.4" y="18.5" width="2.5" height="11.5" fill="#9c9c9c" /><rect x="51.8" y="18.5" width="3.1" height="11.5" fill="#8a8a8a" /><rect x="54.9" y="18.5" width="2.8" height="11.5" fill="#c4c4c4" /><rect x="57.7" y="18.5" width="2.6" height="11.5" fill="#9c9c9c" /><rect x="60.3" y="18.5" width="3.1" height="11.5" fill="#9c9c9c" /><rect x="63.4" y="18.5" width="2.2" height="11.5" fill="#8a8a8a" /><rect x="65.6" y="18.5" width="2.8" height="11.5" fill="#d0d0d0" /><rect x="68.5" y="18.5" width="3.1" height="11.5" fill="#dcdcdc" /><rect x="71.5" y="18.5" width="3.2" height="11.5" fill="#c4c4c4" /><rect x="74.7" y="18.5" width="2.5" height="11.5" fill="#d0d0d0" /><rect x="77.2" y="18.5" width="2.4" height="11.5" fill="#c4c4c4" /><rect x="79.6" y="18.5" width="2.9" height="11.5" fill="#dcdcdc" /><rect x="82.5" y="18.5" width="2.7" height="11.5" fill="#8a8a8a" /><rect x="85.2" y="18.5" width="2.8" height="11.5" fill="#a8a8a8" /><rect x="88.0" y="18.5" width="2.0" height="11.5" fill="#d0d0d0" /><rect x="27.0" y="30.0" width="63.0" height="2.2" fill="#2e2e2e" /><rect x="27.0" y="16.0" width="63.0" height="2.5" fill="#5a5a5a" /><rect x="27.0" y="34.5" width="3.0" height="11.5" fill="#dcdcdc" /><rect x="30.0" y="34.5" width="3.3" height="11.5" fill="#dcdcdc" /><rect x="33.4" y="34.5" width="2.0" height="11.5" fill="#dcdcdc" /><rect x="35.3" y="34.5" width="2.2" height="11.5" fill="#dcdcdc" /><rect x="37.5" y="34.5" width="2.2" height="11.5" fill="#c4c4c4" /><rect x="39.7" y="34.5" width="2.8" height="11.5" fill="#dcdcdc" /><rect x="42.6" y="34.5" width="3.4" height="11.5" fill="#d0d0d0" /><rect x="46.0" y="34.5" width="2.3" height="11.5" fill="#9c9c9c" /><rect x="48.2" y="34.5" width="2.5" height="11.5" fill="#a8a8a8" /><rect x="50.8" y="34.5" width="2.5" height="11.5" fill="#dcdcdc" /><rect x="53.3" y="34.5" width="1.9" height="11.5" fill="#d0d0d0" /><rect x="55.2" y="34.5" width="2.5" height="11.5" fill="#c4c4c4" /><rect x="57.7" y="34.5" width="2.6" height="11.5" fill="#a8a8a8" /><rect x="60.3" y="34.5" width="3.4" height="11.5" fill="#8a8a8a" /><rect x="63.7" y="34.5" width="2.5" height="11.5" fill="#c4c4c4" /><rect x="66.2" y="34.5" width="2.3" height="11.5" fill="#d0d0d0" /><rect x="68.5" y="34.5" width="2.6" height="11.5" fill="#dcdcdc" /><rect x="71.1" y="34.5" width="3.1" height="11.5" fill="#c4c4c4" /><rect x="74.1" y="34.5" width="2.4" height="11.5" fill="#d0d0d0" /><rect x="76.6" y="34.5" width="3.1" height="11.5" fill="#9c9c9c" /><rect x="79.7" y="34.5" width="1.9" height="11.5" fill="#dcdcdc" /><rect x="81.5" y="34.5" width="1.9" height="11.5" fill="#d0d0d0" /><rect x="83.4" y="34.5" width="3.1" height="11.5" fill="#c4c4c4" /><rect x="86.5" y="34.5" width="1.6" height="11.5" fill="#9c9c9c" /><rect x="88.0" y="34.5" width="1.6" height="11.5" fill="#d0d0d0" /><rect x="89.7" y="34.5" width="0.3" height="11.5" fill="#c4c4c4" /><rect x="27.0" y="46.0" width="63.0" height="2.2" fill="#2e2e2e" /><rect x="27.0" y="32.0" width="63.0" height="2.5" fill="#5a5a5a" /><rect x="27.0" y="50.5" width="2.0" height="11.5" fill="#d0d0d0" /><rect x="29.0" y="50.5" width="3.1" height="11.5" fill="#a8a8a8" /><rect x="32.1" y="50.5" width="2.2" height="11.5" fill="#d0d0d0" /><rect x="34.3" y="50.5" width="1.8" height="11.5" fill="#c4c4c4" /><rect x="36.1" y="50.5" width="2.6" height="11.5" fill="#a8a8a8" /><rect x="38.7" y="50.5" width="2.8" height="11.5" fill="#9c9c9c" /><rect x="41.5" y="50.5" width="2.9" height="11.5" fill="#8a8a8a" /><rect x="44.4" y="50.5" width="2.9" height="11.5" fill="#8a8a8a" /><rect x="47.3" y="50.5" width="2.4" height="11.5" fill="#d0d0d0" /><rect x="49.8" y="50.5" width="2.1" height="11.5" fill="#c4c4c4" /><rect x="51.9" y="50.5" width="2.3" height="11.5" fill="#a8a8a8" /><rect x="54.2" y="50.5" width="2.0" height="11.5" fill="#c4c4c4" /><rect x="56.2" y="50.5" width="3.3" height="11.5" fill="#dcdcdc" /><rect x="59.5" y="50.5" width="3.5" height="11.5" fill="#dcdcdc" /><rect x="63.0" y="50.5" width="2.4" height="11.5" fill="#d0d0d0" /><rect x="65.4" y="50.5" width="2.0" height="11.5" fill="#8a8a8a" /><rect x="67.3" y="50.5" width="1.8" height="11.5" fill="#9c9c9c" /><rect x="69.1" y="50.5" width="3.4" height="11.5" fill="#8a8a8a" /><rect x="72.5" y="50.5" width="2.9" height="11.5" fill="#9c9c9c" /><rect x="75.4" y="50.5" width="2.4" height="11.5" fill="#a8a8a8" /><rect x="77.8" y="50.5" width="3.5" height="11.5" fill="#9c9c9c" /><rect x="81.2" y="50.5" width="3.1" height="11.5" fill="#dcdcdc" /><rect x="84.3" y="50.5" width="2.4" height="11.5" fill="#dcdcdc" /><rect x="86.7" y="50.5" width="2.8" height="11.5" fill="#8a8a8a" /><rect x="89.5" y="50.5" width="0.5" height="11.5" fill="#c4c4c4" /><rect x="27.0" y="62.0" width="63.0" height="2.2" fill="#2e2e2e" /><rect x="27.0" y="48.0" width="63.0" height="2.5" fill="#5a5a5a" /><rect x="27.0" y="66.5" width="2.8" height="11.5" fill="#8a8a8a" /><rect x="29.8" y="66.5" width="1.6" height="11.5" fill="#c4c4c4" /><rect x="31.4" y="66.5" width="1.8" height="11.5" fill="#a8a8a8" /><rect x="33.2" y="66.5" width="3.3" height="11.5" fill="#c4c4c4" /><rect x="36.4" y="66.5" width="1.6" height="11.5" fill="#d0d0d0" /><rect x="38.1" y="66.5" width="2.1" height="11.5" fill="#c4c4c4" /><rect x="40.2" y="66.5" width="3.0" height="11.5" fill="#8a8a8a" /><rect x="43.2" y="66.5" width="2.6" height="11.5" fill="#a8a8a8" /><rect x="45.8" y="66.5" width="1.5" height="11.5" fill="#d0d0d0" /><rect x="47.3" y="66.5" width="2.7" height="11.5" fill="#a8a8a8" /><rect x="50.0" y="66.5" width="3.4" height="11.5" fill="#dcdcdc" /><rect x="53.4" y="66.5" width="2.4" height="11.5" fill="#9c9c9c" /><rect x="55.9" y="66.5" width="2.7" height="11.5" fill="#d0d0d0" /><rect x="58.6" y="66.5" width="2.3" height="11.5" fill="#c4c4c4" /><rect x="60.9" y="66.5" width="1.7" height="11.5" fill="#dcdcdc" /><rect x="62.6" y="66.5" width="2.8" height="11.5" fill="#8a8a8a" /><rect x="65.4" y="66.5" width="2.7" height="11.5" fill="#8a8a8a" /><rect x="68.1" y="66.5" width="1.7" height="11.5" fill="#9c9c9c" /><rect x="69.8" y="66.5" width="2.3" height="11.5" fill="#dcdcdc" /><rect x="72.1" y="66.5" width="2.5" height="11.5" fill="#c4c4c4" /><rect x="74.6" y="66.5" width="2.7" height="11.5" fill="#8a8a8a" /><rect x="77.3" y="66.5" width="3.3" height="11.5" fill="#d0d0d0" /><rect x="80.6" y="66.5" width="1.8" height="11.5" fill="#c4c4c4" /><rect x="82.4" y="66.5" width="3.1" height="11.5" fill="#dcdcdc" /><rect x="85.5" y="66.5" width="3.1" height="11.5" fill="#c4c4c4" /><rect x="88.6" y="66.5" width="1.4" height="11.5" fill="#c4c4c4" /><rect x="27.0" y="78.0" width="63.0" height="2.2" fill="#2e2e2e" /><rect x="27.0" y="64.0" width="63.0" height="2.5" fill="#5a5a5a" /><rect x="27.0" y="82.5" width="2.8" height="11.5" fill="#8a8a8a" /><rect x="29.8" y="82.5" width="3.4" height="11.5" fill="#c4c4c4" /><rect x="33.2" y="82.5" width="3.3" height="11.5" fill="#9c9c9c" /><rect x="36.5" y="82.5" width="2.6" height="11.5" fill="#dcdcdc" /><rect x="39.1" y="82.5" width="2.0" height="11.5" fill="#9c9c9c" /><rect x="41.1" y="82.5" width="1.6" height="11.5" fill="#a8a8a8" /><rect x="42.7" y="82.5" width="1.8" height="11.5" fill="#dcdcdc" /><rect x="44.5" y="82.5" width="1.9" height="11.5" fill="#c4c4c4" /><rect x="46.4" y="82.5" width="2.7" height="11.5" fill="#c4c4c4" /><rect x="49.1" y="82.5" width="2.2" height="11.5" fill="#c4c4c4" /><rect x="51.4" y="82.5" width="1.7" height="11.5" fill="#a8a8a8" /><rect x="53.1" y="82.5" width="3.2" height="11.5" fill="#dcdcdc" /><rect x="56.3" y="82.5" width="3.1" height="11.5" fill="#9c9c9c" /><rect x="59.4" y="82.5" width="3.3" height="11.5" fill="#a8a8a8" /><rect x="62.7" y="82.5" width="2.7" height="11.5" fill="#d0d0d0" /><rect x="65.3" y="82.5" width="2.1" height="11.5" fill="#8a8a8a" /><rect x="67.5" y="82.5" width="1.6" height="11.5" fill="#a8a8a8" /><rect x="69.1" y="82.5" width="3.2" height="11.5" fill="#c4c4c4" /><rect x="72.3" y="82.5" width="1.7" height="11.5" fill="#dcdcdc" /><rect x="74.0" y="82.5" width="3.1" height="11.5" fill="#8a8a8a" /><rect x="77.1" y="82.5" width="1.7" height="11.5" fill="#dcdcdc" /><rect x="78.7" y="82.5" width="1.9" height="11.5" fill="#d0d0d0" /><rect x="80.7" y="82.5" width="3.4" height="11.5" fill="#c4c4c4" /><rect x="84.1" y="82.5" width="3.3" height="11.5" fill="#dcdcdc" /><rect x="87.3" y="82.5" width="2.6" height="11.5" fill="#d0d0d0" /><rect x="89.9" y="82.5" width="0.1" height="11.5" fill="#c4c4c4" /><rect x="27.0" y="94.0" width="63.0" height="2.2" fill="#2e2e2e" /><rect x="27.0" y="80.0" width="63.0" height="2.5" fill="#5a5a5a" /><rect x="27.0" y="98.5" width="1.7" height="11.5" fill="#d0d0d0" /><rect x="28.7" y="98.5" width="3.2" height="11.5" fill="#d0d0d0" /><rect x="31.9" y="98.5" width="2.7" height="11.5" fill="#d0d0d0" /><rect x="34.6" y="98.5" width="1.7" height="11.5" fill="#d0d0d0" /><rect x="36.3" y="98.5" width="3.2" height="11.5" fill="#d0d0d0" /><rect x="39.4" y="98.5" width="1.9" height="11.5" fill="#dcdcdc" /><rect x="41.3" y="98.5" width="2.3" height="11.5" fill="#d0d0d0" /><rect x="43.7" y="98.5" width="2.4" height="11.5" fill="#9c9c9c" /><rect x="46.1" y="98.5" width="2.0" height="11.5" fill="#9c9c9c" /><rect x="48.0" y="98.5" width="3.2" height="11.5" fill="#8a8a8a" /><rect x="51.2" y="98.5" width="3.3" height="11.5" fill="#8a8a8a" /><rect x="54.5" y="98.5" width="3.1" height="11.5" fill="#dcdcdc" /><rect x="57.7" y="98.5" width="3.3" height="11.5" fill="#c4c4c4" /><rect x="61.0" y="98.5" width="2.6" height="11.5" fill="#9c9c9c" /><rect x="63.6" y="98.5" width="2.5" height="11.5" fill="#d0d0d0" /><rect x="66.0" y="98.5" width="1.9" height="11.5" fill="#c4c4c4" /><rect x="67.9" y="98.5" width="1.6" height="11.5" fill="#d0d0d0" /><rect x="69.5" y="98.5" width="3.1" height="11.5" fill="#c4c4c4" /><rect x="72.6" y="98.5" width="3.0" height="11.5" fill="#c4c4c4" /><rect x="75.6" y="98.5" width="2.4" height="11.5" fill="#c4c4c4" /><rect x="78.0" y="98.5" width="2.3" height="11.5" fill="#d0d0d0" /><rect x="80.3" y="98.5" width="3.3" height="11.5" fill="#dcdcdc" /><rect x="83.6" y="98.5" width="3.4" height="11.5" fill="#d0d0d0" /><rect x="87.0" y="98.5" width="2.0" height="11.5" fill="#dcdcdc" /><rect x="89.0" y="98.5" width="1.0" height="11.5" fill="#dcdcdc" /><rect x="27.0" y="110.0" width="63.0" height="2.2" fill="#2e2e2e" /><rect x="27.0" y="96.0" width="63.0" height="2.5" fill="#5a5a5a" /><rect x="100.0" y="32.0" width="38.0" height="143.0" fill="#b8b8b8" /><rect x="100.0" y="34.5" width="3.4" height="10.5" fill="#d0d0d0" /><rect x="103.4" y="34.5" width="1.7" height="10.5" fill="#c4c4c4" /><rect x="105.1" y="34.5" width="3.2" height="10.5" fill="#9c9c9c" /><rect x="108.3" y="34.5" width="3.1" height="10.5" fill="#c4c4c4" /><rect x="111.4" y="34.5" width="2.0" height="10.5" fill="#a8a8a8" /><rect x="113.4" y="34.5" width="2.7" height="10.5" fill="#dcdcdc" /><rect x="116.1" y="34.5" width="2.9" height="10.5" fill="#8a8a8a" /><rect x="119.0" y="34.5" width="2.8" height="10.5" fill="#9c9c9c" /><rect x="121.7" y="34.5" width="3.2" height="10.5" fill="#dcdcdc" /><rect x="125.0" y="34.5" width="3.4" height="10.5" fill="#dcdcdc" /><rect x="128.4" y="34.5" width="3.4" height="10.5" fill="#dcdcdc" /><rect x="131.7" y="34.5" width="2.0" height="10.5" fill="#d0d0d0" /><rect x="133.8" y="34.5" width="3.2" height="10.5" fill="#c4c4c4" /><rect x="137.0" y="34.5" width="1.0" height="10.5" fill="#c4c4c4" /><rect x="100.0" y="45.0" width="38.0" height="2.2" fill="#2e2e2e" /><rect x="100.0" y="32.0" width="38.0" height="2.5" fill="#5a5a5a" /><rect x="100.0" y="49.5" width="3.3" height="10.5" fill="#8a8a8a" /><rect x="103.3" y="49.5" width="3.3" height="10.5" fill="#dcdcdc" /><rect x="106.6" y="49.5" width="1.8" height="10.5" fill="#a8a8a8" /><rect x="108.4" y="49.5" width="2.0" height="10.5" fill="#d0d0d0" /><rect x="110.4" y="49.5" width="1.9" height="10.5" fill="#a8a8a8" /><rect x="112.3" y="49.5" width="1.8" height="10.5" fill="#dcdcdc" /><rect x="114.0" y="49.5" width="2.2" height="10.5" fill="#dcdcdc" /><rect x="116.2" y="49.5" width="2.8" height="10.5" fill="#a8a8a8" /><rect x="119.1" y="49.5" width="3.5" height="10.5" fill="#8a8a8a" /><rect x="122.6" y="49.5" width="3.1" height="10.5" fill="#9c9c9c" /><rect x="125.7" y="49.5" width="2.6" height="10.5" fill="#c4c4c4" /><rect x="128.2" y="49.5" width="3.1" height="10.5" fill="#c4c4c4" /><rect x="131.3" y="49.5" width="2.2" height="10.5" fill="#8a8a8a" /><rect x="133.5" y="49.5" width="1.8" height="10.5" fill="#8a8a8a" /><rect x="135.4" y="49.5" width="2.6" height="10.5" fill="#8a8a8a" /><rect x="100.0" y="60.0" width="38.0" height="2.2" fill="#2e2e2e" /><rect x="100.0" y="47.0" width="38.0" height="2.5" fill="#5a5a5a" /><rect x="100.0" y="64.5" width="2.8" height="10.5" fill="#a8a8a8" /><rect x="102.8" y="64.5" width="2.5" height="10.5" fill="#8a8a8a" /><rect x="105.3" y="64.5" width="2.5" height="10.5" fill="#c4c4c4" /><rect x="107.8" y="64.5" width="2.8" height="10.5" fill="#8a8a8a" /><rect x="110.6" y="64.5" width="3.3" height="10.5" fill="#8a8a8a" /><rect x="113.9" y="64.5" width="2.2" height="10.5" fill="#9c9c9c" /><rect x="116.1" y="64.5" width="3.3" height="10.5" fill="#9c9c9c" /><rect x="119.5" y="64.5" width="2.4" height="10.5" fill="#9c9c9c" /><rect x="121.9" y="64.5" width="1.9" height="10.5" fill="#c4c4c4" /><rect x="123.8" y="64.5" width="3.1" height="10.5" fill="#a8a8a8" /><rect x="126.9" y="64.5" width="3.3" height="10.5" fill="#dcdcdc" /><rect x="130.2" y="64.5" width="2.0" height="10.5" fill="#8a8a8a" /><rect x="132.2" y="64.5" width="2.1" height="10.5" fill="#9c9c9c" /><rect x="134.4" y="64.5" width="3.2" height="10.5" fill="#dcdcdc" /><rect x="137.5" y="64.5" width="0.5" height="10.5" fill="#9c9c9c" /><rect x="100.0" y="75.0" width="38.0" height="2.2" fill="#2e2e2e" /><rect x="100.0" y="62.0" width="38.0" height="2.5" fill="#5a5a5a" /><rect x="100.0" y="79.5" width="2.7" height="10.5" fill="#8a8a8a" /><rect x="102.7" y="79.5" width="2.1" height="10.5" fill="#a8a8a8" /><rect x="104.9" y="79.5" width="2.5" height="10.5" fill="#c4c4c4" /><rect x="107.3" y="79.5" width="3.4" height="10.5" fill="#dcdcdc" /><rect x="110.7" y="79.5" width="3.3" height="10.5" fill="#c4c4c4" /><rect x="114.0" y="79.5" width="3.0" height="10.5" fill="#a8a8a8" /><rect x="116.9" y="79.5" width="3.5" height="10.5" fill="#d0d0d0" /><rect x="120.4" y="79.5" width="1.6" height="10.5" fill="#9c9c9c" /><rect x="122.0" y="79.5" width="1.6" height="10.5" fill="#dcdcdc" /><rect x="123.6" y="79.5" width="2.0" height="10.5" fill="#d0d0d0" /><rect x="125.6" y="79.5" width="3.0" height="10.5" fill="#a8a8a8" /><rect x="128.6" y="79.5" width="3.2" height="10.5" fill="#a8a8a8" /><rect x="131.8" y="79.5" width="3.1" height="10.5" fill="#d0d0d0" /><rect x="134.9" y="79.5" width="2.3" height="10.5" fill="#9c9c9c" /><rect x="137.3" y="79.5" width="0.7" height="10.5" fill="#d0d0d0" /><rect x="100.0" y="90.0" width="38.0" height="2.2" fill="#2e2e2e" /><rect x="100.0" y="77.0" width="38.0" height="2.5" fill="#5a5a5a" /><rect x="100.0" y="94.5" width="2.2" height="10.5" fill="#a8a8a8" /><rect x="102.2" y="94.5" width="2.0" height="10.5" fill="#d0d0d0" /><rect x="104.2" y="94.5" width="1.7" height="10.5" fill="#d0d0d0" /><rect x="105.9" y="94.5" width="1.6" height="10.5" fill="#9c9c9c" /><rect x="107.4" y="94.5" width="3.3" height="10.5" fill="#c4c4c4" /><rect x="110.8" y="94.5" width="2.0" height="10.5" fill="#a8a8a8" /><rect x="112.8" y="94.5" width="3.0" height="10.5" fill="#dcdcdc" /><rect x="115.8" y="94.5" width="2.9" height="10.5" fill="#8a8a8a" /><rect x="118.6" y="94.5" width="2.7" height="10.5" fill="#a8a8a8" /><rect x="121.3" y="94.5" width="1.8" height="10.5" fill="#d0d0d0" /><rect x="123.1" y="94.5" width="1.5" height="10.5" fill="#dcdcdc" /><rect x="124.6" y="94.5" width="2.8" height="10.5" fill="#9c9c9c" /><rect x="127.4" y="94.5" width="1.7" height="10.5" fill="#c4c4c4" /><rect x="129.1" y="94.5" width="2.5" height="10.5" fill="#c4c4c4" /><rect x="131.6" y="94.5" width="2.4" height="10.5" fill="#dcdcdc" /><rect x="134.0" y="94.5" width="3.0" height="10.5" fill="#c4c4c4" /><rect x="137.0" y="94.5" width="1.0" height="10.5" fill="#dcdcdc" /><rect x="100.0" y="105.0" width="38.0" height="2.2" fill="#2e2e2e" /><rect x="100.0" y="92.0" width="38.0" height="2.5" fill="#5a5a5a" /><rect x="100.0" y="109.5" width="2.9" height="10.5" fill="#8a8a8a" /><rect x="102.9" y="109.5" width="3.4" height="10.5" fill="#d0d0d0" /><rect x="106.3" y="109.5" width="2.8" height="10.5" fill="#c4c4c4" /><rect x="109.1" y="109.5" width="3.2" height="10.5" fill="#d0d0d0" /><rect x="112.3" y="109.5" width="2.4" height="10.5" fill="#a8a8a8" /><rect x="114.7" y="109.5" width="2.5" height="10.5" fill="#8a8a8a" /><rect x="117.3" y="109.5" width="2.5" height="10.5" fill="#c4c4c4" /><rect x="119.7" y="109.5" width="1.8" height="10.5" fill="#c4c4c4" /><rect x="121.5" y="109.5" width="2.0" height="10.5" fill="#dcdcdc" /><rect x="123.5" y="109.5" width="3.4" height="10.5" fill="#9c9c9c" /><rect x="127.0" y="109.5" width="1.5" height="10.5" fill="#dcdcdc" /><rect x="128.5" y="109.5" width="3.4" height="10.5" fill="#9c9c9c" /><rect x="131.9" y="109.5" width="1.6" height="10.5" fill="#d0d0d0" /><rect x="133.5" y="109.5" width="1.8" height="10.5" fill="#a8a8a8" /><rect x="135.3" y="109.5" width="1.7" height="10.5" fill="#9c9c9c" /><rect x="137.0" y="109.5" width="1.0" height="10.5" fill="#9c9c9c" /><rect x="100.0" y="120.0" width="38.0" height="2.2" fill="#2e2e2e" /><rect x="100.0" y="107.0" width="38.0" height="2.5" fill="#5a5a5a" /><rect x="100.0" y="124.5" width="3.4" height="10.5" fill="#a8a8a8" /><rect x="103.4" y="124.5" width="2.0" height="10.5" fill="#8a8a8a" /><rect x="105.3" y="124.5" width="1.6" height="10.5" fill="#d0d0d0" /><rect x="107.0" y="124.5" width="2.7" height="10.5" fill="#dcdcdc" /><rect x="109.7" y="124.5" width="3.1" height="10.5" fill="#dcdcdc" /><rect x="112.7" y="124.5" width="2.9" height="10.5" fill="#c4c4c4" /><rect x="115.7" y="124.5" width="2.9" height="10.5" fill="#c4c4c4" /><rect x="118.5" y="124.5" width="2.6" height="10.5" fill="#d0d0d0" /><rect x="121.1" y="124.5" width="1.8" height="10.5" fill="#8a8a8a" /><rect x="122.9" y="124.5" width="2.3" height="10.5" fill="#d0d0d0" /><rect x="125.2" y="124.5" width="2.5" height="10.5" fill="#d0d0d0" /><rect x="127.7" y="124.5" width="2.0" height="10.5" fill="#d0d0d0" /><rect x="129.7" y="124.5" width="1.5" height="10.5" fill="#a8a8a8" /><rect x="131.3" y="124.5" width="1.7" height="10.5" fill="#d0d0d0" /><rect x="133.0" y="124.5" width="2.5" height="10.5" fill="#8a8a8a" /><rect x="135.5" y="124.5" width="2.4" height="10.5" fill="#dcdcdc" /><rect x="137.9" y="124.5" width="0.1" height="10.5" fill="#a8a8a8" /><rect x="100.0" y="135.0" width="38.0" height="2.2" fill="#2e2e2e" /><rect x="100.0" y="122.0" width="38.0" height="2.5" fill="#5a5a5a" /><rect x="100.0" y="139.5" width="2.9" height="10.5" fill="#a8a8a8" /><rect x="102.9" y="139.5" width="3.0" height="10.5" fill="#8a8a8a" /><rect x="105.8" y="139.5" width="2.4" height="10.5" fill="#d0d0d0" /><rect x="108.2" y="139.5" width="2.7" height="10.5" fill="#d0d0d0" /><rect x="110.8" y="139.5" width="3.3" height="10.5" fill="#dcdcdc" /><rect x="114.1" y="139.5" width="2.7" height="10.5" fill="#d0d0d0" /><rect x="116.8" y="139.5" width="2.8" height="10.5" fill="#8a8a8a" /><rect x="119.6" y="139.5" width="2.2" height="10.5" fill="#dcdcdc" /><rect x="121.8" y="139.5" width="3.4" height="10.5" fill="#d0d0d0" /><rect x="125.2" y="139.5" width="2.7" height="10.5" fill="#c4c4c4" /><rect x="128.0" y="139.5" width="2.9" height="10.5" fill="#c4c4c4" /><rect x="130.8" y="139.5" width="2.1" height="10.5" fill="#9c9c9c" /><rect x="133.0" y="139.5" width="2.3" height="10.5" fill="#d0d0d0" /><rect x="135.3" y="139.5" width="2.1" height="10.5" fill="#9c9c9c" /><rect x="137.4" y="139.5" width="0.6" height="10.5" fill="#8a8a8a" /><rect x="100.0" y="150.0" width="38.0" height="2.2" fill="#2e2e2e" /><rect x="100.0" y="137.0" width="38.0" height="2.5" fill="#5a5a5a" /><rect x="100.0" y="154.5" width="1.6" height="10.5" fill="#9c9c9c" /><rect x="101.6" y="154.5" width="2.5" height="10.5" fill="#a8a8a8" /><rect x="104.1" y="154.5" width="3.3" height="10.5" fill="#dcdcdc" /><rect x="107.4" y="154.5" width="1.6" height="10.5" fill="#c4c4c4" /><rect x="109.0" y="154.5" width="1.5" height="10.5" fill="#c4c4c4" /><rect x="110.6" y="154.5" width="3.4" height="10.5" fill="#d0d0d0" /><rect x="113.9" y="154.5" width="1.9" height="10.5" fill="#8a8a8a" /><rect x="115.9" y="154.5" width="1.9" height="10.5" fill="#dcdcdc" /><rect x="117.8" y="154.5" width="2.2" height="10.5" fill="#9c9c9c" /><rect x="120.0" y="154.5" width="2.4" height="10.5" fill="#c4c4c4" /><rect x="122.4" y="154.5" width="2.3" height="10.5" fill="#d0d0d0" /><rect x="124.7" y="154.5" width="2.0" height="10.5" fill="#d0d0d0" /><rect x="126.7" y="154.5" width="1.7" height="10.5" fill="#c4c4c4" /><rect x="128.4" y="154.5" width="2.8" height="10.5" fill="#a8a8a8" /><rect x="131.2" y="154.5" width="2.9" height="10.5" fill="#d0d0d0" /><rect x="134.1" y="154.5" width="2.7" height="10.5" fill="#8a8a8a" /><rect x="136.8" y="154.5" width="1.2" height="10.5" fill="#9c9c9c" /><rect x="100.0" y="165.0" width="38.0" height="2.2" fill="#2e2e2e" /><rect x="100.0" y="152.0" width="38.0" height="2.5" fill="#5a5a5a" /><rect x="100.0" y="169.5" width="2.9" height="10.5" fill="#c4c4c4" /><rect x="102.9" y="169.5" width="2.2" height="10.5" fill="#8a8a8a" /><rect x="105.1" y="169.5" width="1.8" height="10.5" fill="#c4c4c4" /><rect x="106.9" y="169.5" width="2.0" height="10.5" fill="#dcdcdc" /><rect x="108.9" y="169.5" width="3.2" height="10.5" fill="#9c9c9c" /><rect x="112.2" y="169.5" width="3.4" height="10.5" fill="#8a8a8a" /><rect x="115.6" y="169.5" width="3.4" height="10.5" fill="#9c9c9c" /><rect x="119.0" y="169.5" width="2.1" height="10.5" fill="#a8a8a8" /><rect x="121.0" y="169.5" width="1.8" height="10.5" fill="#dcdcdc" /><rect x="122.9" y="169.5" width="2.0" height="10.5" fill="#8a8a8a" /><rect x="124.9" y="169.5" width="2.9" height="10.5" fill="#9c9c9c" /><rect x="127.8" y="169.5" width="3.3" height="10.5" fill="#dcdcdc" /><rect x="131.1" y="169.5" width="3.0" height="10.5" fill="#dcdcdc" /><rect x="134.1" y="169.5" width="1.7" height="10.5" fill="#c4c4c4" /><rect x="135.8" y="169.5" width="1.9" height="10.5" fill="#dcdcdc" /><rect x="137.6" y="169.5" width="0.4" height="10.5" fill="#8a8a8a" /><rect x="100.0" y="180.0" width="38.0" height="2.2" fill="#2e2e2e" /><rect x="100.0" y="167.0" width="38.0" height="2.5" fill="#5a5a5a" /><rect x="106.0" y="0.0" width="39.0" height="31.0" fill="#777" /><rect x="106.0" y="2.0" width="39.0" height="1.6" fill="#9a9a9a" /><rect x="106.0" y="7.0" width="39.0" height="1.6" fill="#9a9a9a" /><rect x="106.0" y="12.0" width="39.0" height="1.6" fill="#9a9a9a" /><rect x="106.0" y="17.0" width="39.0" height="1.6" fill="#9a9a9a" /><rect x="106.0" y="22.0" width="39.0" height="1.6" fill="#9a9a9a" /><rect x="106.0" y="27.0" width="39.0" height="1.6" fill="#9a9a9a" /><rect x="80.0" y="0.0" width="26.0" height="150.0" fill="#303030" /><rect x="100.0" y="0.0" width="6.0" height="150.0" fill="#4a4a4a" /><rect x="0.0" y="0.0" width="27.0" height="40.0" fill="#333" /><rect x="6.0" y="0.0" width="12.0" height="35.0" fill="#454545" /><polygon points="138.0,0.0 269.0,0.0 269.0,300.0 250.0,300.0 229.0,240.0 211.0,190.0 197.0,140.0 187.0,102.0 173.0,48.0 154.0,0.0" fill="#666666" /><path d="M158.0 22.0 C160.0 8.5 196.8 4.0 269 4.0" fill="none" stroke="#2e2e2e" stroke-width="5.00" /><path d="M159.0 25.3 C161.0 11.8 196.8 7.3 269 7.3" fill="none" stroke="#a8a8a8" stroke-width="1.80" /><path d="M175.0 71.0 C177.0 52.2 207.9 46.0 269 46.0" fill="none" stroke="#2e2e2e" stroke-width="4.62" /><path d="M176.0 74.1 C178.0 55.4 207.9 49.1 269 49.1" fill="none" stroke="#a8a8a8" stroke-width="1.70" /><path d="M187.0 107.0 C189.0 93.5 215.7 89.0 269 89.0" fill="none" stroke="#2e2e2e" stroke-width="4.24" /><path d="M188.0 109.9 C190.0 96.4 215.7 91.9 269 91.9" fill="none" stroke="#a8a8a8" stroke-width="1.60" /><path d="M196.5 133.0 C198.5 123.2 221.9 120.0 269 120.0" fill="none" stroke="#2e2e2e" stroke-width="3.86" /><path d="M197.5 135.7 C199.5 126.0 221.9 122.7 269 122.7" fill="none" stroke="#a8a8a8" stroke-width="1.50" /><path d="M203.7 161.6 C205.7 151.4 226.6 148.0 269 148.0" fill="none" stroke="#2e2e2e" stroke-width="3.48" /><path d="M204.7 164.1 C206.7 153.9 226.6 150.5 269 150.5" fill="none" stroke="#a8a8a8" stroke-width="1.40" /><path d="M208.4 187.8 C210.4 176.7 229.6 173.0 269 173.0" fill="none" stroke="#2e2e2e" stroke-width="3.10" /><path d="M209.4 190.2 C211.4 179.1 229.6 175.3 269 175.3" fill="none" stroke="#a8a8a8" stroke-width="1.30" /><path d="M213.0 210.0 C215.0 198.8 232.6 195.0 269 195.0" fill="none" stroke="#2e2e2e" stroke-width="2.72" /><path d="M214.0 212.2 C216.0 200.9 232.6 197.2 269 197.2" fill="none" stroke="#a8a8a8" stroke-width="1.20" /><path d="M219.0 228.0 C221.0 217.5 236.5 214.0 269 214.0" fill="none" stroke="#2e2e2e" stroke-width="2.34" /><path d="M220.0 230.0 C222.0 219.5 236.5 216.0 269 216.0" fill="none" stroke="#a8a8a8" stroke-width="1.10" /><path d="M225.0 245.0 C227.0 235.2 240.4 232.0 269 232.0" fill="none" stroke="#2e2e2e" stroke-width="1.96" /><path d="M226.0 246.8 C228.0 237.0 240.4 233.8 269 233.8" fill="none" stroke="#a8a8a8" stroke-width="1.00" /><path d="M231.0 258.0 C233.0 250.5 244.3 248.0 269 248.0" fill="none" stroke="#2e2e2e" stroke-width="1.58" /><path d="M232.0 259.6 C234.0 252.1 244.3 249.6 269 249.6" fill="none" stroke="#a8a8a8" stroke-width="0.90" /><path d="M236.0 270.0 C238.0 264.0 247.6 262.0 269 262.0" fill="none" stroke="#2e2e2e" stroke-width="1.20" /><path d="M237.0 271.4 C239.0 265.4 247.6 263.4 269 263.4" fill="none" stroke="#a8a8a8" stroke-width="0.80" /><path d="M241.0 280.0 C243.0 276.2 250.8 275.0 269 275.0" fill="none" stroke="#2e2e2e" stroke-width="1.00" /><path d="M242.0 281.3 C244.0 277.6 250.8 276.3 269 276.3" fill="none" stroke="#a8a8a8" stroke-width="0.70" /><polygon points="140.0,31.0 150.0,31.0 166.0,45.0 173.0,70.0 175.0,95.0 147.0,95.0" fill="#8c8c8c" /><line x1="142.0" y1="33.0" x2="174.0" y2="33.0" stroke="#5c5c5c" stroke-width="1.10"/><line x1="142.0" y1="37.0" x2="174.0" y2="37.0" stroke="#5c5c5c" stroke-width="1.10"/><line x1="142.0" y1="41.0" x2="174.0" y2="41.0" stroke="#5c5c5c" stroke-width="1.10"/><line x1="142.0" y1="45.0" x2="174.0" y2="45.0" stroke="#5c5c5c" stroke-width="1.10"/><line x1="142.0" y1="49.0" x2="174.0" y2="49.0" stroke="#5c5c5c" stroke-width="1.10"/><line x1="142.0" y1="53.0" x2="174.0" y2="53.0" stroke="#5c5c5c" stroke-width="1.10"/><line x1="142.0" y1="57.0" x2="174.0" y2="57.0" stroke="#5c5c5c" stroke-width="1.10"/><line x1="142.0" y1="61.0" x2="174.0" y2="61.0" stroke="#5c5c5c" stroke-width="1.10"/><line x1="142.0" y1="65.0" x2="174.0" y2="65.0" stroke="#5c5c5c" stroke-width="1.10"/><line x1="142.0" y1="69.0" x2="174.0" y2="69.0" stroke="#5c5c5c" stroke-width="1.10"/><line x1="142.0" y1="73.0" x2="174.0" y2="73.0" stroke="#5c5c5c" stroke-width="1.10"/><line x1="142.0" y1="77.0" x2="174.0" y2="77.0" stroke="#5c5c5c" stroke-width="1.10"/><line x1="142.0" y1="81.0" x2="174.0" y2="81.0" stroke="#5c5c5c" stroke-width="1.10"/><line x1="142.0" y1="85.0" x2="174.0" y2="85.0" stroke="#5c5c5c" stroke-width="1.10"/><line x1="142.0" y1="89.0" x2="174.0" y2="89.0" stroke="#5c5c5c" stroke-width="1.10"/><line x1="142.0" y1="93.0" x2="174.0" y2="93.0" stroke="#5c5c5c" stroke-width="1.10"/><rect x="140.0" y="95.0" width="26.0" height="97.0" fill="#a8a8a8" /><rect x="140.0" y="97.5" width="2.0" height="7.5" fill="#dcdcdc" /><rect x="142.0" y="97.5" width="1.8" height="7.5" fill="#dcdcdc" /><rect x="143.7" y="97.5" width="2.4" height="7.5" fill="#dcdcdc" /><rect x="146.2" y="97.5" width="1.6" height="7.5" fill="#d0d0d0" /><rect x="147.8" y="97.5" width="3.3" height="7.5" fill="#8a8a8a" /><rect x="151.1" y="97.5" width="2.0" height="7.5" fill="#a8a8a8" /><rect x="153.2" y="97.5" width="1.9" height="7.5" fill="#9c9c9c" /><rect x="155.0" y="97.5" width="2.4" height="7.5" fill="#dcdcdc" /><rect x="157.5" y="97.5" width="2.5" height="7.5" fill="#9c9c9c" /><rect x="159.9" y="97.5" width="3.2" height="7.5" fill="#a8a8a8" /><rect x="163.2" y="97.5" width="2.8" height="7.5" fill="#dcdcdc" /><rect x="165.9" y="97.5" width="0.1" height="7.5" fill="#d0d0d0" /><rect x="140.0" y="105.0" width="26.0" height="2.2" fill="#2e2e2e" /><rect x="140.0" y="95.0" width="26.0" height="2.5" fill="#5a5a5a" /><rect x="140.0" y="109.5" width="2.8" height="7.5" fill="#d0d0d0" /><rect x="142.8" y="109.5" width="1.8" height="7.5" fill="#dcdcdc" /><rect x="144.7" y="109.5" width="1.6" height="7.5" fill="#d0d0d0" /><rect x="146.2" y="109.5" width="3.1" height="7.5" fill="#c4c4c4" /><rect x="149.4" y="109.5" width="2.4" height="7.5" fill="#9c9c9c" /><rect x="151.8" y="109.5" width="3.3" height="7.5" fill="#8a8a8a" /><rect x="155.2" y="109.5" width="2.9" height="7.5" fill="#8a8a8a" /><rect x="158.1" y="109.5" width="2.3" height="7.5" fill="#dcdcdc" /><rect x="160.4" y="109.5" width="2.4" height="7.5" fill="#a8a8a8" /><rect x="162.8" y="109.5" width="3.2" height="7.5" fill="#d0d0d0" /><rect x="140.0" y="117.0" width="26.0" height="2.2" fill="#2e2e2e" /><rect x="140.0" y="107.0" width="26.0" height="2.5" fill="#5a5a5a" /><rect x="140.0" y="121.5" width="1.6" height="7.5" fill="#8a8a8a" /><rect x="141.6" y="121.5" width="1.9" height="7.5" fill="#9c9c9c" /><rect x="143.5" y="121.5" width="2.4" height="7.5" fill="#9c9c9c" /><rect x="145.9" y="121.5" width="3.2" height="7.5" fill="#8a8a8a" /><rect x="149.1" y="121.5" width="2.5" height="7.5" fill="#8a8a8a" /><rect x="151.6" y="121.5" width="2.6" height="7.5" fill="#dcdcdc" /><rect x="154.3" y="121.5" width="2.7" height="7.5" fill="#dcdcdc" /><rect x="156.9" y="121.5" width="2.0" height="7.5" fill="#c4c4c4" /><rect x="158.9" y="121.5" width="2.9" height="7.5" fill="#d0d0d0" /><rect x="161.7" y="121.5" width="3.2" height="7.5" fill="#dcdcdc" /><rect x="165.0" y="121.5" width="1.0" height="7.5" fill="#a8a8a8" /><rect x="140.0" y="129.0" width="26.0" height="2.2" fill="#2e2e2e" /><rect x="140.0" y="119.0" width="26.0" height="2.5" fill="#5a5a5a" /><rect x="140.0" y="133.5" width="2.9" height="7.5" fill="#c4c4c4" /><rect x="142.9" y="133.5" width="3.4" height="7.5" fill="#dcdcdc" /><rect x="146.3" y="133.5" width="2.6" height="7.5" fill="#9c9c9c" /><rect x="149.0" y="133.5" width="2.8" height="7.5" fill="#9c9c9c" /><rect x="151.8" y="133.5" width="3.2" height="7.5" fill="#dcdcdc" /><rect x="154.9" y="133.5" width="2.0" height="7.5" fill="#d0d0d0" /><rect x="157.0" y="133.5" width="1.6" height="7.5" fill="#9c9c9c" /><rect x="158.6" y="133.5" width="3.5" height="7.5" fill="#d0d0d0" /><rect x="162.1" y="133.5" width="2.2" height="7.5" fill="#d0d0d0" /><rect x="164.3" y="133.5" width="1.7" height="7.5" fill="#a8a8a8" /><rect x="140.0" y="141.0" width="26.0" height="2.2" fill="#2e2e2e" /><rect x="140.0" y="131.0" width="26.0" height="2.5" fill="#5a5a5a" /><rect x="140.0" y="145.5" width="1.5" height="7.5" fill="#8a8a8a" /><rect x="141.5" y="145.5" width="3.0" height="7.5" fill="#d0d0d0" /><rect x="144.6" y="145.5" width="1.6" height="7.5" fill="#dcdcdc" /><rect x="146.2" y="145.5" width="3.0" height="7.5" fill="#8a8a8a" /><rect x="149.2" y="145.5" width="2.9" height="7.5" fill="#c4c4c4" /><rect x="152.1" y="145.5" width="2.6" height="7.5" fill="#c4c4c4" /><rect x="154.7" y="145.5" width="2.5" height="7.5" fill="#d0d0d0" /><rect x="157.2" y="145.5" width="2.1" height="7.5" fill="#d0d0d0" /><rect x="159.4" y="145.5" width="1.7" height="7.5" fill="#dcdcdc" /><rect x="161.1" y="145.5" width="1.6" height="7.5" fill="#a8a8a8" /><rect x="162.6" y="145.5" width="3.4" height="7.5" fill="#c4c4c4" /><rect x="140.0" y="153.0" width="26.0" height="2.2" fill="#2e2e2e" /><rect x="140.0" y="143.0" width="26.0" height="2.5" fill="#5a5a5a" /><rect x="140.0" y="157.5" width="2.7" height="7.5" fill="#a8a8a8" /><rect x="142.7" y="157.5" width="2.9" height="7.5" fill="#c4c4c4" /><rect x="145.6" y="157.5" width="2.1" height="7.5" fill="#a8a8a8" /><rect x="147.7" y="157.5" width="3.3" height="7.5" fill="#8a8a8a" /><rect x="151.0" y="157.5" width="2.3" height="7.5" fill="#dcdcdc" /><rect x="153.3" y="157.5" width="2.3" height="7.5" fill="#dcdcdc" /><rect x="155.5" y="157.5" width="2.9" height="7.5" fill="#d0d0d0" /><rect x="158.4" y="157.5" width="2.7" height="7.5" fill="#dcdcdc" /><rect x="161.1" y="157.5" width="2.0" height="7.5" fill="#9c9c9c" /><rect x="163.2" y="157.5" width="2.8" height="7.5" fill="#a8a8a8" /><rect x="140.0" y="165.0" width="26.0" height="2.2" fill="#2e2e2e" /><rect x="140.0" y="155.0" width="26.0" height="2.5" fill="#5a5a5a" /><rect x="140.0" y="169.5" width="3.4" height="7.5" fill="#8a8a8a" /><rect x="143.4" y="169.5" width="3.5" height="7.5" fill="#dcdcdc" /><rect x="146.8" y="169.5" width="2.1" height="7.5" fill="#c4c4c4" /><rect x="148.9" y="169.5" width="1.5" height="7.5" fill="#8a8a8a" /><rect x="150.5" y="169.5" width="3.5" height="7.5" fill="#c4c4c4" /><rect x="153.9" y="169.5" width="1.5" height="7.5" fill="#dcdcdc" /><rect x="155.5" y="169.5" width="2.7" height="7.5" fill="#a8a8a8" /><rect x="158.2" y="169.5" width="1.6" height="7.5" fill="#9c9c9c" /><rect x="159.8" y="169.5" width="2.2" height="7.5" fill="#c4c4c4" /><rect x="161.9" y="169.5" width="2.9" height="7.5" fill="#c4c4c4" /><rect x="164.8" y="169.5" width="1.2" height="7.5" fill="#c4c4c4" /><rect x="140.0" y="177.0" width="26.0" height="2.2" fill="#2e2e2e" /><rect x="140.0" y="167.0" width="26.0" height="2.5" fill="#5a5a5a" /><rect x="140.0" y="181.5" width="3.0" height="7.5" fill="#d0d0d0" /><rect x="143.0" y="181.5" width="2.7" height="7.5" fill="#9c9c9c" /><rect x="145.7" y="181.5" width="1.5" height="7.5" fill="#c4c4c4" /><rect x="147.2" y="181.5" width="2.0" height="7.5" fill="#8a8a8a" /><rect x="149.2" y="181.5" width="2.1" height="7.5" fill="#dcdcdc" /><rect x="151.3" y="181.5" width="2.1" height="7.5" fill="#c4c4c4" /><rect x="153.4" y="181.5" width="1.9" height="7.5" fill="#c4c4c4" /><rect x="155.3" y="181.5" width="3.2" height="7.5" fill="#c4c4c4" /><rect x="158.5" y="181.5" width="2.1" height="7.5" fill="#8a8a8a" /><rect x="160.6" y="181.5" width="1.7" height="7.5" fill="#d0d0d0" /><rect x="162.3" y="181.5" width="3.4" height="7.5" fill="#9c9c9c" /><rect x="165.7" y="181.5" width="0.3" height="7.5" fill="#c4c4c4" /><rect x="140.0" y="189.0" width="26.0" height="2.2" fill="#2e2e2e" /><rect x="140.0" y="179.0" width="26.0" height="2.5" fill="#5a5a5a" /><rect x="140.0" y="193.5" width="2.5" height="7.5" fill="#9c9c9c" /><rect x="142.5" y="193.5" width="3.1" height="7.5" fill="#a8a8a8" /><rect x="145.6" y="193.5" width="2.2" height="7.5" fill="#9c9c9c" /><rect x="147.8" y="193.5" width="2.4" height="7.5" fill="#9c9c9c" /><rect x="150.1" y="193.5" width="1.7" height="7.5" fill="#dcdcdc" /><rect x="151.8" y="193.5" width="2.1" height="7.5" fill="#c4c4c4" /><rect x="154.0" y="193.5" width="2.8" height="7.5" fill="#a8a8a8" /><rect x="156.8" y="193.5" width="2.4" height="7.5" fill="#a8a8a8" /><rect x="159.2" y="193.5" width="1.7" height="7.5" fill="#9c9c9c" /><rect x="160.9" y="193.5" width="2.8" height="7.5" fill="#dcdcdc" /><rect x="163.7" y="193.5" width="2.3" height="7.5" fill="#a8a8a8" /><rect x="140.0" y="201.0" width="26.0" height="2.2" fill="#2e2e2e" /><rect x="140.0" y="191.0" width="26.0" height="2.5" fill="#5a5a5a" /><rect x="137.5" y="31.0" width="15.0" height="165.0" fill="#2e2e2e" /><rect x="141.0" y="31.0" width="4.0" height="165.0" fill="#404040" /><polygon points="175.0,88.0 184.0,95.0 188.0,120.0 188.0,135.0 173.0,135.0" fill="#7e7e7e" /><line x1="174.0" y1="90.0" x2="188.0" y2="90.0" stroke="#555" stroke-width="1.00"/><line x1="174.0" y1="94.0" x2="188.0" y2="94.0" stroke="#555" stroke-width="1.00"/><line x1="174.0" y1="98.0" x2="188.0" y2="98.0" stroke="#555" stroke-width="1.00"/><line x1="174.0" y1="102.0" x2="188.0" y2="102.0" stroke="#555" stroke-width="1.00"/><line x1="174.0" y1="106.0" x2="188.0" y2="106.0" stroke="#555" stroke-width="1.00"/><line x1="174.0" y1="110.0" x2="188.0" y2="110.0" stroke="#555" stroke-width="1.00"/><line x1="174.0" y1="114.0" x2="188.0" y2="114.0" stroke="#555" stroke-width="1.00"/><line x1="174.0" y1="118.0" x2="188.0" y2="118.0" stroke="#555" stroke-width="1.00"/><line x1="174.0" y1="122.0" x2="188.0" y2="122.0" stroke="#555" stroke-width="1.00"/><line x1="174.0" y1="126.0" x2="188.0" y2="126.0" stroke="#555" stroke-width="1.00"/><line x1="174.0" y1="130.0" x2="188.0" y2="130.0" stroke="#555" stroke-width="1.00"/><line x1="174.0" y1="134.0" x2="188.0" y2="134.0" stroke="#555" stroke-width="1.00"/><rect x="169.0" y="140.0" width="16.0" height="75.0" fill="#a0a0a0" /><rect x="169.0" y="142.5" width="2.0" height="6.5" fill="#d0d0d0" /><rect x="171.0" y="142.5" width="2.9" height="6.5" fill="#8a8a8a" /><rect x="173.9" y="142.5" width="1.8" height="6.5" fill="#d0d0d0" /><rect x="175.7" y="142.5" width="1.5" height="6.5" fill="#dcdcdc" /><rect x="177.3" y="142.5" width="3.3" height="6.5" fill="#d0d0d0" /><rect x="180.6" y="142.5" width="1.9" height="6.5" fill="#dcdcdc" /><rect x="182.5" y="142.5" width="2.2" height="6.5" fill="#a8a8a8" /><rect x="184.8" y="142.5" width="0.2" height="6.5" fill="#c4c4c4" /><rect x="169.0" y="149.0" width="16.0" height="2.2" fill="#2e2e2e" /><rect x="169.0" y="140.0" width="16.0" height="2.5" fill="#5a5a5a" /><rect x="169.0" y="153.5" width="1.9" height="6.5" fill="#d0d0d0" /><rect x="170.9" y="153.5" width="3.2" height="6.5" fill="#c4c4c4" /><rect x="174.1" y="153.5" width="3.1" height="6.5" fill="#a8a8a8" /><rect x="177.2" y="153.5" width="1.8" height="6.5" fill="#c4c4c4" /><rect x="179.0" y="153.5" width="2.8" height="6.5" fill="#9c9c9c" /><rect x="181.8" y="153.5" width="3.2" height="6.5" fill="#c4c4c4" /><rect x="169.0" y="160.0" width="16.0" height="2.2" fill="#2e2e2e" /><rect x="169.0" y="151.0" width="16.0" height="2.5" fill="#5a5a5a" /><rect x="169.0" y="164.5" width="1.7" height="6.5" fill="#dcdcdc" /><rect x="170.7" y="164.5" width="2.2" height="6.5" fill="#8a8a8a" /><rect x="172.8" y="164.5" width="2.5" height="6.5" fill="#a8a8a8" /><rect x="175.4" y="164.5" width="2.0" height="6.5" fill="#c4c4c4" /><rect x="177.4" y="164.5" width="1.7" height="6.5" fill="#dcdcdc" /><rect x="179.0" y="164.5" width="3.2" height="6.5" fill="#d0d0d0" /><rect x="182.2" y="164.5" width="2.8" height="6.5" fill="#dcdcdc" /><rect x="169.0" y="171.0" width="16.0" height="2.2" fill="#2e2e2e" /><rect x="169.0" y="162.0" width="16.0" height="2.5" fill="#5a5a5a" /><rect x="169.0" y="175.5" width="2.9" height="6.5" fill="#c4c4c4" /><rect x="171.9" y="175.5" width="3.2" height="6.5" fill="#dcdcdc" /><rect x="175.1" y="175.5" width="1.9" height="6.5" fill="#8a8a8a" /><rect x="177.0" y="175.5" width="2.7" height="6.5" fill="#8a8a8a" /><rect x="179.7" y="175.5" width="2.4" height="6.5" fill="#a8a8a8" /><rect x="182.1" y="175.5" width="2.1" height="6.5" fill="#d0d0d0" /><rect x="184.2" y="175.5" width="0.8" height="6.5" fill="#8a8a8a" /><rect x="169.0" y="182.0" width="16.0" height="2.2" fill="#2e2e2e" /><rect x="169.0" y="173.0" width="16.0" height="2.5" fill="#5a5a5a" /><rect x="169.0" y="186.5" width="2.8" height="6.5" fill="#c4c4c4" /><rect x="171.8" y="186.5" width="2.5" height="6.5" fill="#9c9c9c" /><rect x="174.3" y="186.5" width="2.4" height="6.5" fill="#c4c4c4" /><rect x="176.7" y="186.5" width="1.8" height="6.5" fill="#9c9c9c" /><rect x="178.5" y="186.5" width="1.9" height="6.5" fill="#8a8a8a" /><rect x="180.4" y="186.5" width="3.3" height="6.5" fill="#9c9c9c" /><rect x="183.7" y="186.5" width="1.3" height="6.5" fill="#c4c4c4" /><rect x="169.0" y="193.0" width="16.0" height="2.2" fill="#2e2e2e" /><rect x="169.0" y="184.0" width="16.0" height="2.5" fill="#5a5a5a" /><rect x="169.0" y="197.5" width="1.9" height="6.5" fill="#8a8a8a" /><rect x="170.9" y="197.5" width="3.0" height="6.5" fill="#c4c4c4" /><rect x="173.9" y="197.5" width="2.8" height="6.5" fill="#a8a8a8" /><rect x="176.6" y="197.5" width="3.3" height="6.5" fill="#d0d0d0" /><rect x="179.9" y="197.5" width="3.2" height="6.5" fill="#9c9c9c" /><rect x="183.1" y="197.5" width="1.9" height="6.5" fill="#dcdcdc" /><rect x="169.0" y="204.0" width="16.0" height="2.2" fill="#2e2e2e" /><rect x="169.0" y="195.0" width="16.0" height="2.5" fill="#5a5a5a" /><rect x="169.0" y="208.5" width="2.7" height="6.5" fill="#a8a8a8" /><rect x="171.7" y="208.5" width="1.7" height="6.5" fill="#a8a8a8" /><rect x="173.5" y="208.5" width="2.1" height="6.5" fill="#d0d0d0" /><rect x="175.6" y="208.5" width="1.6" height="6.5" fill="#9c9c9c" /><rect x="177.1" y="208.5" width="1.7" height="6.5" fill="#c4c4c4" /><rect x="178.8" y="208.5" width="3.0" height="6.5" fill="#c4c4c4" /><rect x="181.8" y="208.5" width="1.5" height="6.5" fill="#c4c4c4" /><rect x="183.3" y="208.5" width="1.7" height="6.5" fill="#a8a8a8" /><rect x="169.0" y="215.0" width="16.0" height="2.2" fill="#2e2e2e" /><rect x="169.0" y="206.0" width="16.0" height="2.5" fill="#5a5a5a" /><rect x="163.0" y="95.0" width="10.0" height="130.0" fill="#2a2a2a" /><rect x="185.0" y="135.0" width="7.0" height="120.0" fill="#2c2c2c" /><polygon points="188.0,128.0 195.0,135.0 199.0,155.0 199.0,165.0 188.0,165.0" fill="#7a7a7a" /><rect x="190.0" y="170.0" width="12.0" height="70.0" fill="#9a9a9a" /><rect x="190.0" y="172.5" width="2.7" height="5.5" fill="#9c9c9c" /><rect x="192.7" y="172.5" width="2.2" height="5.5" fill="#9c9c9c" /><rect x="195.0" y="172.5" width="3.4" height="5.5" fill="#9c9c9c" /><rect x="198.3" y="172.5" width="2.8" height="5.5" fill="#dcdcdc" /><rect x="201.2" y="172.5" width="0.8" height="5.5" fill="#8a8a8a" /><rect x="190.0" y="178.0" width="12.0" height="2.2" fill="#2e2e2e" /><rect x="190.0" y="170.0" width="12.0" height="2.5" fill="#5a5a5a" /><rect x="190.0" y="182.5" width="3.1" height="5.5" fill="#a8a8a8" /><rect x="193.1" y="182.5" width="2.8" height="5.5" fill="#a8a8a8" /><rect x="195.8" y="182.5" width="1.7" height="5.5" fill="#8a8a8a" /><rect x="197.6" y="182.5" width="3.2" height="5.5" fill="#8a8a8a" /><rect x="200.8" y="182.5" width="1.2" height="5.5" fill="#dcdcdc" /><rect x="190.0" y="188.0" width="12.0" height="2.2" fill="#2e2e2e" /><rect x="190.0" y="180.0" width="12.0" height="2.5" fill="#5a5a5a" /><rect x="190.0" y="192.5" width="2.0" height="5.5" fill="#9c9c9c" /><rect x="192.0" y="192.5" width="1.9" height="5.5" fill="#c4c4c4" /><rect x="193.9" y="192.5" width="1.9" height="5.5" fill="#8a8a8a" /><rect x="195.8" y="192.5" width="1.8" height="5.5" fill="#d0d0d0" /><rect x="197.6" y="192.5" width="1.8" height="5.5" fill="#dcdcdc" /><rect x="199.4" y="192.5" width="2.4" height="5.5" fill="#a8a8a8" /><rect x="201.8" y="192.5" width="0.2" height="5.5" fill="#d0d0d0" /><rect x="190.0" y="198.0" width="12.0" height="2.2" fill="#2e2e2e" /><rect x="190.0" y="190.0" width="12.0" height="2.5" fill="#5a5a5a" /><rect x="190.0" y="202.5" width="1.9" height="5.5" fill="#a8a8a8" /><rect x="191.9" y="202.5" width="3.4" height="5.5" fill="#a8a8a8" /><rect x="195.3" y="202.5" width="3.2" height="5.5" fill="#c4c4c4" /><rect x="198.6" y="202.5" width="2.1" height="5.5" fill="#a8a8a8" /><rect x="200.7" y="202.5" width="1.3" height="5.5" fill="#9c9c9c" /><rect x="190.0" y="208.0" width="12.0" height="2.2" fill="#2e2e2e" /><rect x="190.0" y="200.0" width="12.0" height="2.5" fill="#5a5a5a" /><rect x="190.0" y="212.5" width="2.8" height="5.5" fill="#a8a8a8" /><rect x="192.8" y="212.5" width="3.4" height="5.5" fill="#9c9c9c" /><rect x="196.1" y="212.5" width="1.9" height="5.5" fill="#8a8a8a" /><rect x="198.0" y="212.5" width="2.1" height="5.5" fill="#c4c4c4" /><rect x="200.1" y="212.5" width="1.9" height="5.5" fill="#a8a8a8" /><rect x="190.0" y="218.0" width="12.0" height="2.2" fill="#2e2e2e" /><rect x="190.0" y="210.0" width="12.0" height="2.5" fill="#5a5a5a" /><rect x="190.0" y="222.5" width="2.0" height="5.5" fill="#c4c4c4" /><rect x="192.0" y="222.5" width="2.1" height="5.5" fill="#dcdcdc" /><rect x="194.1" y="222.5" width="2.7" height="5.5" fill="#dcdcdc" /><rect x="196.8" y="222.5" width="2.9" height="5.5" fill="#c4c4c4" /><rect x="199.7" y="222.5" width="1.6" height="5.5" fill="#c4c4c4" /><rect x="201.3" y="222.5" width="0.7" height="5.5" fill="#8a8a8a" /><rect x="190.0" y="228.0" width="12.0" height="2.2" fill="#2e2e2e" /><rect x="190.0" y="220.0" width="12.0" height="2.5" fill="#5a5a5a" /><rect x="190.0" y="232.5" width="2.9" height="5.5" fill="#a8a8a8" /><rect x="192.9" y="232.5" width="2.5" height="5.5" fill="#9c9c9c" /><rect x="195.4" y="232.5" width="1.9" height="5.5" fill="#c4c4c4" /><rect x="197.2" y="232.5" width="3.5" height="5.5" fill="#d0d0d0" /><rect x="200.7" y="232.5" width="1.3" height="5.5" fill="#c4c4c4" /><rect x="190.0" y="238.0" width="12.0" height="2.2" fill="#2e2e2e" /><rect x="190.0" y="230.0" width="12.0" height="2.5" fill="#5a5a5a" /><rect x="199.0" y="160.0" width="5.0" height="100.0" fill="#2e2e2e" /><rect x="204.0" y="185.0" width="5.0" height="80.0" fill="#909090" /><rect x="209.0" y="180.0" width="2.8" height="85.0" fill="#2e2e2e" /><rect x="213.0" y="205.0" width="4.0" height="70.0" fill="#909090" /><rect x="217.0" y="200.0" width="2.5" height="75.0" fill="#2e2e2e" /><rect x="221.0" y="222.0" width="3.5" height="63.0" fill="#909090" /><rect x="224.5" y="217.0" width="2.2" height="68.0" fill="#2e2e2e" /><rect x="228.0" y="238.0" width="3.0" height="54.0" fill="#909090" /><rect x="231.0" y="233.0" width="1.9" height="59.0" fill="#2e2e2e" /><rect x="234.0" y="250.0" width="2.5" height="46.0" fill="#909090" /><rect x="236.5" y="245.0" width="1.6" height="51.0" fill="#2e2e2e" /><rect x="239.0" y="260.0" width="2.0" height="38.0" fill="#909090" /><rect x="241.0" y="255.0" width="1.3" height="43.0" fill="#2e2e2e" /><polygon points="0.0,-4.0 20.0,20.0 40.0,44.0 60.0,68.0 85.0,98.0 120.0,139.6 160.0,187.1 200.0,234.6 250.0,294.0 250.0,298.0 200.0,242.2 160.0,197.6 120.0,153.0 85.0,114.0 60.0,89.3 40.0,69.5 20.0,49.8 0.0,30.0" fill="#3a3a3a" /><polygon points="0.0,30.0 20.0,49.8 40.0,69.5 60.0,89.3 85.0,114.0 120.0,153.0 160.0,197.6 200.0,242.2 250.0,298.0 250.0,301.0 200.0,252.2 160.0,213.2 120.0,174.2 85.0,140.0 60.0,112.4 40.0,90.2 20.0,68.1 0.0,46.0" fill="#a0a0a0" /><line x1="20.0" y1="51.3" x2="20.0" y2="67.6" stroke="#454545" stroke-width="1.40"/><line x1="23.6" y1="54.8" x2="23.6" y2="71.6" stroke="#454545" stroke-width="1.38"/><line x1="27.1" y1="58.3" x2="27.1" y2="75.5" stroke="#454545" stroke-width="1.37"/><line x1="30.7" y1="61.8" x2="30.7" y2="79.4" stroke="#454545" stroke-width="1.35"/><line x1="34.2" y1="65.3" x2="34.2" y2="83.4" stroke="#454545" stroke-width="1.34"/><line x1="37.8" y1="68.9" x2="37.8" y2="87.3" stroke="#454545" stroke-width="1.32"/><line x1="41.4" y1="72.4" x2="41.4" y2="91.3" stroke="#454545" stroke-width="1.31"/><line x1="44.9" y1="75.9" x2="44.9" y2="95.2" stroke="#454545" stroke-width="1.29"/><line x1="48.5" y1="79.4" x2="48.5" y2="99.1" stroke="#454545" stroke-width="1.27"/><line x1="52.1" y1="83.0" x2="52.1" y2="103.1" stroke="#454545" stroke-width="1.26"/><line x1="55.6" y1="86.5" x2="55.6" y2="107.0" stroke="#454545" stroke-width="1.24"/><line x1="59.2" y1="90.0" x2="59.2" y2="111.0" stroke="#454545" stroke-width="1.23"/><line x1="62.8" y1="93.5" x2="62.8" y2="114.9" stroke="#454545" stroke-width="1.21"/><line x1="66.3" y1="97.0" x2="66.3" y2="118.8" stroke="#454545" stroke-width="1.20"/><line x1="69.9" y1="100.6" x2="69.9" y2="122.8" stroke="#454545" stroke-width="1.18"/><line x1="73.4" y1="104.1" x2="73.4" y2="126.7" stroke="#454545" stroke-width="1.17"/><line x1="77.0" y1="107.6" x2="77.0" y2="130.7" stroke="#454545" stroke-width="1.15"/><line x1="80.6" y1="111.1" x2="80.6" y2="134.6" stroke="#454545" stroke-width="1.13"/><line x1="84.1" y1="114.6" x2="84.1" y2="138.5" stroke="#454545" stroke-width="1.12"/><line x1="87.7" y1="118.5" x2="87.7" y2="142.1" stroke="#454545" stroke-width="1.10"/><line x1="91.2" y1="122.5" x2="91.2" y2="145.6" stroke="#454545" stroke-width="1.09"/><line x1="94.8" y1="126.4" x2="94.8" y2="149.1" stroke="#454545" stroke-width="1.07"/><line x1="98.4" y1="130.4" x2="98.4" y2="152.6" stroke="#454545" stroke-width="1.06"/><line x1="101.9" y1="134.4" x2="101.9" y2="156.0" stroke="#454545" stroke-width="1.04"/><line x1="105.5" y1="138.4" x2="105.5" y2="159.5" stroke="#454545" stroke-width="1.02"/><line x1="109.1" y1="142.3" x2="109.1" y2="163.0" stroke="#454545" stroke-width="1.01"/><line x1="112.6" y1="146.3" x2="112.6" y2="166.5" stroke="#454545" stroke-width="0.99"/><line x1="116.2" y1="150.3" x2="116.2" y2="169.9" stroke="#454545" stroke-width="0.98"/><line x1="119.8" y1="154.3" x2="119.8" y2="173.4" stroke="#454545" stroke-width="0.96"/><line x1="123.3" y1="158.2" x2="123.3" y2="176.9" stroke="#454545" stroke-width="0.95"/><line x1="126.9" y1="162.2" x2="126.9" y2="180.4" stroke="#454545" stroke-width="0.93"/><line x1="130.4" y1="166.2" x2="130.4" y2="183.8" stroke="#454545" stroke-width="0.92"/><line x1="134.0" y1="170.1" x2="134.0" y2="187.3" stroke="#454545" stroke-width="0.90"/><line x1="137.6" y1="174.1" x2="137.6" y2="190.8" stroke="#454545" stroke-width="0.88"/><line x1="141.1" y1="178.1" x2="141.1" y2="194.3" stroke="#454545" stroke-width="0.87"/><line x1="144.7" y1="182.1" x2="144.7" y2="197.7" stroke="#454545" stroke-width="0.85"/><line x1="148.2" y1="186.0" x2="148.2" y2="201.2" stroke="#454545" stroke-width="0.84"/><line x1="151.8" y1="190.0" x2="151.8" y2="204.7" stroke="#454545" stroke-width="0.82"/><line x1="155.4" y1="194.0" x2="155.4" y2="208.2" stroke="#454545" stroke-width="0.81"/><line x1="158.9" y1="198.0" x2="158.9" y2="211.6" stroke="#454545" stroke-width="0.79"/><line x1="162.5" y1="201.9" x2="162.5" y2="215.1" stroke="#454545" stroke-width="0.77"/><line x1="166.1" y1="205.9" x2="166.1" y2="218.6" stroke="#454545" stroke-width="0.76"/><line x1="169.6" y1="209.9" x2="169.6" y2="222.1" stroke="#454545" stroke-width="0.74"/><line x1="173.2" y1="213.8" x2="173.2" y2="225.5" stroke="#454545" stroke-width="0.73"/><line x1="176.8" y1="217.8" x2="176.8" y2="229.0" stroke="#454545" stroke-width="0.71"/><line x1="180.3" y1="221.8" x2="180.3" y2="232.5" stroke="#454545" stroke-width="0.70"/><line x1="183.9" y1="225.8" x2="183.9" y2="236.0" stroke="#454545" stroke-width="0.68"/><line x1="187.4" y1="229.7" x2="187.4" y2="239.5" stroke="#454545" stroke-width="0.67"/><line x1="191.0" y1="233.7" x2="191.0" y2="242.9" stroke="#454545" stroke-width="0.65"/><line x1="194.6" y1="237.7" x2="194.6" y2="246.4" stroke="#454545" stroke-width="0.63"/><line x1="198.1" y1="241.7" x2="198.1" y2="249.9" stroke="#454545" stroke-width="0.62"/><line x1="201.7" y1="245.6" x2="201.7" y2="253.4" stroke="#454545" stroke-width="0.60"/><line x1="205.2" y1="249.6" x2="205.2" y2="256.8" stroke="#454545" stroke-width="0.59"/><line x1="208.8" y1="253.6" x2="208.8" y2="260.3" stroke="#454545" stroke-width="0.57"/><line x1="212.4" y1="257.5" x2="212.4" y2="263.8" stroke="#454545" stroke-width="0.56"/><line x1="215.9" y1="261.5" x2="215.9" y2="267.3" stroke="#454545" stroke-width="0.54"/><line x1="219.5" y1="265.5" x2="219.5" y2="270.7" stroke="#454545" stroke-width="0.52"/><line x1="223.1" y1="269.5" x2="223.1" y2="274.2" stroke="#454545" stroke-width="0.51"/><line x1="226.6" y1="273.4" x2="226.6" y2="277.7" stroke="#454545" stroke-width="0.50"/><line x1="230.2" y1="277.4" x2="230.2" y2="281.2" stroke="#454545" stroke-width="0.50"/><line x1="233.8" y1="281.4" x2="233.8" y2="284.6" stroke="#454545" stroke-width="0.50"/><line x1="237.3" y1="285.4" x2="237.3" y2="288.1" stroke="#454545" stroke-width="0.50"/><line x1="240.9" y1="289.3" x2="240.9" y2="291.6" stroke="#454545" stroke-width="0.50"/><line x1="244.4" y1="293.3" x2="244.4" y2="295.1" stroke="#454545" stroke-width="0.50"/><line x1="0.0" y1="30.0" x2="250.0" y2="298.0" stroke="#2a2a2a" stroke-width="2.20"/><polygon points="0.0,46.0 20.0,68.1 40.0,90.2 60.0,112.4 85.0,140.0 120.0,174.2 160.0,213.2 200.0,252.2 250.0,301.0 250.0,304.0 200.0,272.5 160.0,247.3 120.0,222.1 85.0,200.0 60.0,178.2 40.0,160.8 20.0,143.4 0.0,126.0" fill="#383838" /><rect x="22.0" y="89.0" width="5.0" height="33.7" fill="#6a6a6a" /><rect x="28.5" y="95.9" width="4.9" height="33.0" fill="#6a6a6a" /><rect x="35.1" y="102.7" width="4.8" height="32.3" fill="#6a6a6a" /><rect x="41.6" y="109.5" width="4.6" height="31.6" fill="#6a6a6a" /><rect x="48.1" y="116.4" width="4.5" height="30.9" fill="#6a6a6a" /><rect x="54.6" y="123.2" width="4.4" height="30.2" fill="#6a6a6a" /><rect x="61.2" y="130.1" width="4.3" height="29.5" fill="#6a6a6a" /><rect x="67.7" y="136.9" width="4.2" height="28.8" fill="#6a6a6a" /><rect x="74.2" y="143.7" width="4.1" height="28.1" fill="#6a6a6a" /><rect x="80.8" y="150.6" width="3.9" height="27.4" fill="#6a6a6a" /><rect x="87.3" y="157.0" width="3.8" height="26.6" fill="#6a6a6a" /><rect x="93.8" y="162.8" width="3.7" height="25.6" fill="#6a6a6a" /><rect x="100.4" y="168.7" width="3.6" height="24.6" fill="#6a6a6a" /><rect x="106.9" y="174.5" width="3.5" height="23.6" fill="#6a6a6a" /><rect x="113.4" y="180.3" width="3.4" height="22.6" fill="#6a6a6a" /><rect x="119.9" y="186.1" width="3.2" height="21.6" fill="#6a6a6a" /><rect x="126.5" y="191.9" width="3.1" height="20.6" fill="#6a6a6a" /><rect x="133.0" y="197.7" width="3.0" height="19.5" fill="#6a6a6a" /><rect x="139.5" y="203.5" width="2.9" height="18.5" fill="#6a6a6a" /><rect x="146.1" y="209.3" width="2.8" height="17.5" fill="#6a6a6a" /><rect x="152.6" y="215.1" width="2.6" height="16.5" fill="#6a6a6a" /><rect x="159.1" y="220.9" width="2.5" height="15.5" fill="#6a6a6a" /><rect x="165.6" y="226.7" width="2.4" height="14.5" fill="#6a6a6a" /><rect x="172.2" y="232.5" width="2.3" height="13.4" fill="#6a6a6a" /><rect x="178.7" y="238.3" width="2.2" height="12.4" fill="#6a6a6a" /><rect x="185.2" y="244.1" width="2.1" height="11.4" fill="#6a6a6a" /><rect x="191.8" y="250.0" width="1.9" height="10.4" fill="#6a6a6a" /><rect x="198.3" y="255.8" width="1.8" height="9.4" fill="#6a6a6a" /><rect x="204.8" y="261.6" width="1.7" height="8.4" fill="#6a6a6a" /><rect x="211.4" y="267.4" width="1.6" height="7.4" fill="#6a6a6a" /><rect x="217.9" y="273.2" width="1.5" height="6.3" fill="#6a6a6a" /><rect x="224.4" y="279.0" width="1.4" height="5.3" fill="#6a6a6a" /><rect x="230.9" y="284.8" width="1.2" height="4.3" fill="#6a6a6a" /><rect x="237.5" y="290.6" width="1.2" height="3.3" fill="#6a6a6a" /><polygon points="0.0,126.0 20.0,143.4 40.0,160.8 60.0,178.2 85.0,200.0 120.0,222.1 160.0,247.3 200.0,272.5 250.0,304.0 250.0,306.0 200.0,282.1 160.0,262.9 120.0,243.8 85.0,227.0 60.0,203.8 40.0,185.2 20.0,166.6 0.0,148.0" fill="#8a8a8a" /><line x1="0.0" y1="126.0" x2="250.0" y2="304.0" stroke="#4a4a4a" stroke-width="1.50"/><polygon points="0.0,148.0 20.0,166.6 40.0,185.2 60.0,203.8 85.0,227.0 120.0,243.8 160.0,262.9 200.0,282.1 250.0,306.0 250.0,310.0 200.0,290.6 160.0,275.1 120.0,259.6 85.0,246.0 60.0,225.4 40.0,208.9 20.0,192.5 0.0,176.0" fill="#3a3a3a" /><rect x="27.0" y="155.5" width="2.6" height="5.0" fill="#d0d0d0" transform="rotate(28 27.0 155.5)"/><rect x="32.2" y="160.3" width="2.6" height="5.0" fill="#d0d0d0" transform="rotate(28 32.2 160.3)"/><rect x="37.4" y="165.2" width="2.6" height="5.0" fill="#d0d0d0" transform="rotate(28 37.4 165.2)"/><rect x="42.6" y="170.0" width="2.6" height="5.0" fill="#d0d0d0" transform="rotate(28 42.6 170.0)"/><rect x="47.8" y="174.8" width="2.6" height="5.0" fill="#d0d0d0" transform="rotate(28 47.8 174.8)"/><rect x="53.0" y="179.6" width="2.6" height="5.0" fill="#d0d0d0" transform="rotate(28 53.0 179.6)"/><rect x="58.2" y="184.5" width="2.6" height="5.0" fill="#d0d0d0" transform="rotate(28 58.2 184.5)"/><rect x="63.4" y="189.3" width="2.6" height="5.0" fill="#d0d0d0" transform="rotate(28 63.4 189.3)"/><rect x="68.6" y="194.1" width="2.6" height="5.0" fill="#d0d0d0" transform="rotate(28 68.6 194.1)"/><rect x="73.8" y="198.9" width="2.6" height="5.0" fill="#d0d0d0" transform="rotate(28 73.8 198.9)"/><rect x="79.0" y="203.8" width="2.6" height="5.0" fill="#d0d0d0" transform="rotate(28 79.0 203.8)"/><rect x="0.0" y="0.0" width="27.0" height="195.0" fill="#2e2e2e" /><rect x="4.0" y="10.0" width="14.0" height="50.0" fill="#3e3e3e" /><rect x="0.0" y="120.0" width="30.0" height="14.0" fill="#555" /><rect x="2.0" y="134.0" width="10.0" height="50.0" fill="#444" /><rect x="0.0" y="205.0" width="55.0" height="170.0" fill="#c0c0c0" /><rect x="0.0" y="207.5" width="3.1" height="11.5" fill="#d0d0d0" /><rect x="3.1" y="207.5" width="2.5" height="11.5" fill="#c4c4c4" /><rect x="5.6" y="207.5" width="1.6" height="11.5" fill="#a8a8a8" /><rect x="7.1" y="207.5" width="2.8" height="11.5" fill="#8a8a8a" /><rect x="10.0" y="207.5" width="3.4" height="11.5" fill="#9c9c9c" /><rect x="13.4" y="207.5" width="2.2" height="11.5" fill="#d0d0d0" /><rect x="15.6" y="207.5" width="2.0" height="11.5" fill="#a8a8a8" /><rect x="17.7" y="207.5" width="3.0" height="11.5" fill="#8a8a8a" /><rect x="20.6" y="207.5" width="3.3" height="11.5" fill="#dcdcdc" /><rect x="24.0" y="207.5" width="2.9" height="11.5" fill="#a8a8a8" /><rect x="26.8" y="207.5" width="2.6" height="11.5" fill="#9c9c9c" /><rect x="29.5" y="207.5" width="3.1" height="11.5" fill="#c4c4c4" /><rect x="32.6" y="207.5" width="2.8" height="11.5" fill="#dcdcdc" /><rect x="35.4" y="207.5" width="2.9" height="11.5" fill="#8a8a8a" /><rect x="38.3" y="207.5" width="2.2" height="11.5" fill="#d0d0d0" /><rect x="40.4" y="207.5" width="2.2" height="11.5" fill="#8a8a8a" /><rect x="42.7" y="207.5" width="3.1" height="11.5" fill="#8a8a8a" /><rect x="45.8" y="207.5" width="2.9" height="11.5" fill="#a8a8a8" /><rect x="48.7" y="207.5" width="2.9" height="11.5" fill="#c4c4c4" /><rect x="51.6" y="207.5" width="1.7" height="11.5" fill="#d0d0d0" /><rect x="53.3" y="207.5" width="1.7" height="11.5" fill="#a8a8a8" /><rect x="0.0" y="219.0" width="55.0" height="2.2" fill="#2e2e2e" /><rect x="0.0" y="205.0" width="55.0" height="2.5" fill="#5a5a5a" /><rect x="0.0" y="223.5" width="3.2" height="11.5" fill="#c4c4c4" /><rect x="3.2" y="223.5" width="2.5" height="11.5" fill="#a8a8a8" /><rect x="5.6" y="223.5" width="2.5" height="11.5" fill="#9c9c9c" /><rect x="8.2" y="223.5" width="3.4" height="11.5" fill="#dcdcdc" /><rect x="11.6" y="223.5" width="3.5" height="11.5" fill="#d0d0d0" /><rect x="15.1" y="223.5" width="2.8" height="11.5" fill="#a8a8a8" /><rect x="17.8" y="223.5" width="2.7" height="11.5" fill="#c4c4c4" /><rect x="20.5" y="223.5" width="2.2" height="11.5" fill="#d0d0d0" /><rect x="22.7" y="223.5" width="1.7" height="11.5" fill="#9c9c9c" /><rect x="24.4" y="223.5" width="2.6" height="11.5" fill="#d0d0d0" /><rect x="27.0" y="223.5" width="2.7" height="11.5" fill="#c4c4c4" /><rect x="29.7" y="223.5" width="2.1" height="11.5" fill="#a8a8a8" /><rect x="31.8" y="223.5" width="2.3" height="11.5" fill="#a8a8a8" /><rect x="34.1" y="223.5" width="1.8" height="11.5" fill="#a8a8a8" /><rect x="35.8" y="223.5" width="3.2" height="11.5" fill="#9c9c9c" /><rect x="39.0" y="223.5" width="2.5" height="11.5" fill="#a8a8a8" /><rect x="41.6" y="223.5" width="3.1" height="11.5" fill="#d0d0d0" /><rect x="44.6" y="223.5" width="2.8" height="11.5" fill="#dcdcdc" /><rect x="47.4" y="223.5" width="3.3" height="11.5" fill="#dcdcdc" /><rect x="50.7" y="223.5" width="2.7" height="11.5" fill="#c4c4c4" /><rect x="53.5" y="223.5" width="1.5" height="11.5" fill="#8a8a8a" /><rect x="0.0" y="235.0" width="55.0" height="2.2" fill="#2e2e2e" /><rect x="0.0" y="221.0" width="55.0" height="2.5" fill="#5a5a5a" /><rect x="0.0" y="239.5" width="2.1" height="11.5" fill="#9c9c9c" /><rect x="2.1" y="239.5" width="3.5" height="11.5" fill="#d0d0d0" /><rect x="5.6" y="239.5" width="1.9" height="11.5" fill="#dcdcdc" /><rect x="7.4" y="239.5" width="3.0" height="11.5" fill="#8a8a8a" /><rect x="10.4" y="239.5" width="1.7" height="11.5" fill="#8a8a8a" /><rect x="12.1" y="239.5" width="2.0" height="11.5" fill="#d0d0d0" /><rect x="14.1" y="239.5" width="3.3" height="11.5" fill="#9c9c9c" /><rect x="17.4" y="239.5" width="3.2" height="11.5" fill="#8a8a8a" /><rect x="20.6" y="239.5" width="2.4" height="11.5" fill="#8a8a8a" /><rect x="23.0" y="239.5" width="3.1" height="11.5" fill="#dcdcdc" /><rect x="26.1" y="239.5" width="2.4" height="11.5" fill="#c4c4c4" /><rect x="28.5" y="239.5" width="2.9" height="11.5" fill="#8a8a8a" /><rect x="31.4" y="239.5" width="3.4" height="11.5" fill="#a8a8a8" /><rect x="34.8" y="239.5" width="3.0" height="11.5" fill="#c4c4c4" /><rect x="37.8" y="239.5" width="2.4" height="11.5" fill="#9c9c9c" /><rect x="40.2" y="239.5" width="3.1" height="11.5" fill="#a8a8a8" /><rect x="43.2" y="239.5" width="1.5" height="11.5" fill="#dcdcdc" /><rect x="44.8" y="239.5" width="1.7" height="11.5" fill="#dcdcdc" /><rect x="46.5" y="239.5" width="3.1" height="11.5" fill="#a8a8a8" /><rect x="49.6" y="239.5" width="2.0" height="11.5" fill="#8a8a8a" /><rect x="51.6" y="239.5" width="2.2" height="11.5" fill="#dcdcdc" /><rect x="53.8" y="239.5" width="1.2" height="11.5" fill="#8a8a8a" /><rect x="0.0" y="251.0" width="55.0" height="2.2" fill="#2e2e2e" /><rect x="0.0" y="237.0" width="55.0" height="2.5" fill="#5a5a5a" /><rect x="0.0" y="255.5" width="3.4" height="11.5" fill="#8a8a8a" /><rect x="3.4" y="255.5" width="2.7" height="11.5" fill="#c4c4c4" /><rect x="6.1" y="255.5" width="2.7" height="11.5" fill="#9c9c9c" /><rect x="8.8" y="255.5" width="2.5" height="11.5" fill="#a8a8a8" /><rect x="11.2" y="255.5" width="2.9" height="11.5" fill="#8a8a8a" /><rect x="14.2" y="255.5" width="2.1" height="11.5" fill="#8a8a8a" /><rect x="16.3" y="255.5" width="2.1" height="11.5" fill="#9c9c9c" /><rect x="18.4" y="255.5" width="1.8" height="11.5" fill="#dcdcdc" /><rect x="20.3" y="255.5" width="2.3" height="11.5" fill="#dcdcdc" /><rect x="22.5" y="255.5" width="2.0" height="11.5" fill="#9c9c9c" /><rect x="24.6" y="255.5" width="2.3" height="11.5" fill="#8a8a8a" /><rect x="26.8" y="255.5" width="3.0" height="11.5" fill="#a8a8a8" /><rect x="29.8" y="255.5" width="3.4" height="11.5" fill="#c4c4c4" /><rect x="33.2" y="255.5" width="2.6" height="11.5" fill="#dcdcdc" /><rect x="35.8" y="255.5" width="2.4" height="11.5" fill="#d0d0d0" /><rect x="38.2" y="255.5" width="1.9" height="11.5" fill="#dcdcdc" /><rect x="40.1" y="255.5" width="3.0" height="11.5" fill="#d0d0d0" /><rect x="43.1" y="255.5" width="2.9" height="11.5" fill="#c4c4c4" /><rect x="46.0" y="255.5" width="2.2" height="11.5" fill="#8a8a8a" /><rect x="48.2" y="255.5" width="3.2" height="11.5" fill="#d0d0d0" /><rect x="51.4" y="255.5" width="3.3" height="11.5" fill="#a8a8a8" /><rect x="54.7" y="255.5" width="0.3" height="11.5" fill="#dcdcdc" /><rect x="0.0" y="267.0" width="55.0" height="2.2" fill="#2e2e2e" /><rect x="0.0" y="253.0" width="55.0" height="2.5" fill="#5a5a5a" /><rect x="0.0" y="271.5" width="1.5" height="11.5" fill="#dcdcdc" /><rect x="1.5" y="271.5" width="2.5" height="11.5" fill="#8a8a8a" /><rect x="4.0" y="271.5" width="2.0" height="11.5" fill="#c4c4c4" /><rect x="6.0" y="271.5" width="2.2" height="11.5" fill="#a8a8a8" /><rect x="8.2" y="271.5" width="2.9" height="11.5" fill="#a8a8a8" /><rect x="11.1" y="271.5" width="2.7" height="11.5" fill="#a8a8a8" /><rect x="13.8" y="271.5" width="1.6" height="11.5" fill="#9c9c9c" /><rect x="15.4" y="271.5" width="1.7" height="11.5" fill="#d0d0d0" /><rect x="17.0" y="271.5" width="1.6" height="11.5" fill="#8a8a8a" /><rect x="18.6" y="271.5" width="2.4" height="11.5" fill="#d0d0d0" /><rect x="21.1" y="271.5" width="2.8" height="11.5" fill="#9c9c9c" /><rect x="23.8" y="271.5" width="2.6" height="11.5" fill="#dcdcdc" /><rect x="26.4" y="271.5" width="3.2" height="11.5" fill="#d0d0d0" /><rect x="29.6" y="271.5" width="1.8" height="11.5" fill="#9c9c9c" /><rect x="31.4" y="271.5" width="3.3" height="11.5" fill="#9c9c9c" /><rect x="34.7" y="271.5" width="2.4" height="11.5" fill="#9c9c9c" /><rect x="37.1" y="271.5" width="1.5" height="11.5" fill="#9c9c9c" /><rect x="38.7" y="271.5" width="1.8" height="11.5" fill="#a8a8a8" /><rect x="40.5" y="271.5" width="3.3" height="11.5" fill="#8a8a8a" /><rect x="43.8" y="271.5" width="2.5" height="11.5" fill="#8a8a8a" /><rect x="46.2" y="271.5" width="2.4" height="11.5" fill="#c4c4c4" /><rect x="48.6" y="271.5" width="2.5" height="11.5" fill="#dcdcdc" /><rect x="51.1" y="271.5" width="1.6" height="11.5" fill="#c4c4c4" /><rect x="52.7" y="271.5" width="2.3" height="11.5" fill="#c4c4c4" /><rect x="0.0" y="283.0" width="55.0" height="2.2" fill="#2e2e2e" /><rect x="0.0" y="269.0" width="55.0" height="2.5" fill="#5a5a5a" /><rect x="0.0" y="287.5" width="2.2" height="11.5" fill="#d0d0d0" /><rect x="2.2" y="287.5" width="1.7" height="11.5" fill="#c4c4c4" /><rect x="3.9" y="287.5" width="2.1" height="11.5" fill="#8a8a8a" /><rect x="5.9" y="287.5" width="2.4" height="11.5" fill="#c4c4c4" /><rect x="8.3" y="287.5" width="1.6" height="11.5" fill="#d0d0d0" /><rect x="9.9" y="287.5" width="2.0" height="11.5" fill="#dcdcdc" /><rect x="11.9" y="287.5" width="2.8" height="11.5" fill="#dcdcdc" /><rect x="14.6" y="287.5" width="3.0" height="11.5" fill="#9c9c9c" /><rect x="17.6" y="287.5" width="1.8" height="11.5" fill="#c4c4c4" /><rect x="19.5" y="287.5" width="1.6" height="11.5" fill="#9c9c9c" /><rect x="21.1" y="287.5" width="3.0" height="11.5" fill="#a8a8a8" /><rect x="24.1" y="287.5" width="2.9" height="11.5" fill="#c4c4c4" /><rect x="27.0" y="287.5" width="3.3" height="11.5" fill="#a8a8a8" /><rect x="30.3" y="287.5" width="3.0" height="11.5" fill="#d0d0d0" /><rect x="33.2" y="287.5" width="2.3" height="11.5" fill="#a8a8a8" /><rect x="35.5" y="287.5" width="2.4" height="11.5" fill="#8a8a8a" /><rect x="37.9" y="287.5" width="2.8" height="11.5" fill="#a8a8a8" /><rect x="40.7" y="287.5" width="1.6" height="11.5" fill="#dcdcdc" /><rect x="42.4" y="287.5" width="3.5" height="11.5" fill="#a8a8a8" /><rect x="45.8" y="287.5" width="2.6" height="11.5" fill="#a8a8a8" /><rect x="48.4" y="287.5" width="1.9" height="11.5" fill="#9c9c9c" /><rect x="50.2" y="287.5" width="1.8" height="11.5" fill="#dcdcdc" /><rect x="52.0" y="287.5" width="3.0" height="11.5" fill="#a8a8a8" /><rect x="0.0" y="299.0" width="55.0" height="2.2" fill="#2e2e2e" /><rect x="0.0" y="285.0" width="55.0" height="2.5" fill="#5a5a5a" /><rect x="0.0" y="303.5" width="3.4" height="11.5" fill="#9c9c9c" /><rect x="3.4" y="303.5" width="2.6" height="11.5" fill="#a8a8a8" /><rect x="6.0" y="303.5" width="2.3" height="11.5" fill="#a8a8a8" /><rect x="8.4" y="303.5" width="3.0" height="11.5" fill="#a8a8a8" /><rect x="11.4" y="303.5" width="2.6" height="11.5" fill="#d0d0d0" /><rect x="14.0" y="303.5" width="3.1" height="11.5" fill="#dcdcdc" /><rect x="17.1" y="303.5" width="2.3" height="11.5" fill="#c4c4c4" /><rect x="19.3" y="303.5" width="3.2" height="11.5" fill="#dcdcdc" /><rect x="22.5" y="303.5" width="2.4" height="11.5" fill="#8a8a8a" /><rect x="24.9" y="303.5" width="3.2" height="11.5" fill="#dcdcdc" /><rect x="28.1" y="303.5" width="2.6" height="11.5" fill="#9c9c9c" /><rect x="30.7" y="303.5" width="1.8" height="11.5" fill="#a8a8a8" /><rect x="32.5" y="303.5" width="2.8" height="11.5" fill="#9c9c9c" /><rect x="35.3" y="303.5" width="2.2" height="11.5" fill="#9c9c9c" /><rect x="37.5" y="303.5" width="1.9" height="11.5" fill="#a8a8a8" /><rect x="39.4" y="303.5" width="1.8" height="11.5" fill="#9c9c9c" /><rect x="41.2" y="303.5" width="1.8" height="11.5" fill="#d0d0d0" /><rect x="43.0" y="303.5" width="1.6" height="11.5" fill="#d0d0d0" /><rect x="44.6" y="303.5" width="2.4" height="11.5" fill="#d0d0d0" /><rect x="47.1" y="303.5" width="1.7" height="11.5" fill="#9c9c9c" /><rect x="48.8" y="303.5" width="2.6" height="11.5" fill="#9c9c9c" /><rect x="51.4" y="303.5" width="2.2" height="11.5" fill="#d0d0d0" /><rect x="53.6" y="303.5" width="1.4" height="11.5" fill="#a8a8a8" /><rect x="0.0" y="315.0" width="55.0" height="2.2" fill="#2e2e2e" /><rect x="0.0" y="301.0" width="55.0" height="2.5" fill="#5a5a5a" /><rect x="0.0" y="319.5" width="3.1" height="11.5" fill="#a8a8a8" /><rect x="3.1" y="319.5" width="3.0" height="11.5" fill="#9c9c9c" /><rect x="6.1" y="319.5" width="3.3" height="11.5" fill="#c4c4c4" /><rect x="9.4" y="319.5" width="1.7" height="11.5" fill="#d0d0d0" /><rect x="11.1" y="319.5" width="2.9" height="11.5" fill="#d0d0d0" /><rect x="14.1" y="319.5" width="1.8" height="11.5" fill="#9c9c9c" /><rect x="15.9" y="319.5" width="2.4" height="11.5" fill="#d0d0d0" /><rect x="18.3" y="319.5" width="2.9" height="11.5" fill="#a8a8a8" /><rect x="21.2" y="319.5" width="1.6" height="11.5" fill="#d0d0d0" /><rect x="22.8" y="319.5" width="3.0" height="11.5" fill="#9c9c9c" /><rect x="25.8" y="319.5" width="3.5" height="11.5" fill="#8a8a8a" /><rect x="29.3" y="319.5" width="2.8" height="11.5" fill="#c4c4c4" /><rect x="32.1" y="319.5" width="2.0" height="11.5" fill="#a8a8a8" /><rect x="34.1" y="319.5" width="1.9" height="11.5" fill="#9c9c9c" /><rect x="36.0" y="319.5" width="3.1" height="11.5" fill="#9c9c9c" /><rect x="39.1" y="319.5" width="1.9" height="11.5" fill="#dcdcdc" /><rect x="41.0" y="319.5" width="1.5" height="11.5" fill="#dcdcdc" /><rect x="42.5" y="319.5" width="3.1" height="11.5" fill="#9c9c9c" /><rect x="45.6" y="319.5" width="3.4" height="11.5" fill="#9c9c9c" /><rect x="49.0" y="319.5" width="3.2" height="11.5" fill="#c4c4c4" /><rect x="52.3" y="319.5" width="2.7" height="11.5" fill="#d0d0d0" /><rect x="0.0" y="331.0" width="55.0" height="2.2" fill="#2e2e2e" /><rect x="0.0" y="317.0" width="55.0" height="2.5" fill="#5a5a5a" /><rect x="0.0" y="335.5" width="2.7" height="11.5" fill="#9c9c9c" /><rect x="2.7" y="335.5" width="1.6" height="11.5" fill="#c4c4c4" /><rect x="4.2" y="335.5" width="2.9" height="11.5" fill="#a8a8a8" /><rect x="7.1" y="335.5" width="3.4" height="11.5" fill="#d0d0d0" /><rect x="10.5" y="335.5" width="2.2" height="11.5" fill="#9c9c9c" /><rect x="12.7" y="335.5" width="3.4" height="11.5" fill="#8a8a8a" /><rect x="16.1" y="335.5" width="2.9" height="11.5" fill="#d0d0d0" /><rect x="19.0" y="335.5" width="2.2" height="11.5" fill="#d0d0d0" /><rect x="21.2" y="335.5" width="1.5" height="11.5" fill="#d0d0d0" /><rect x="22.7" y="335.5" width="2.5" height="11.5" fill="#8a8a8a" /><rect x="25.2" y="335.5" width="3.2" height="11.5" fill="#d0d0d0" /><rect x="28.3" y="335.5" width="2.9" height="11.5" fill="#dcdcdc" /><rect x="31.2" y="335.5" width="2.0" height="11.5" fill="#a8a8a8" /><rect x="33.2" y="335.5" width="1.8" height="11.5" fill="#dcdcdc" /><rect x="35.0" y="335.5" width="1.9" height="11.5" fill="#9c9c9c" /><rect x="36.9" y="335.5" width="2.3" height="11.5" fill="#dcdcdc" /><rect x="39.1" y="335.5" width="2.4" height="11.5" fill="#dcdcdc" /><rect x="41.5" y="335.5" width="2.8" height="11.5" fill="#8a8a8a" /><rect x="44.2" y="335.5" width="3.4" height="11.5" fill="#c4c4c4" /><rect x="47.6" y="335.5" width="1.8" height="11.5" fill="#d0d0d0" /><rect x="49.4" y="335.5" width="1.9" height="11.5" fill="#8a8a8a" /><rect x="51.2" y="335.5" width="1.7" height="11.5" fill="#a8a8a8" /><rect x="53.0" y="335.5" width="2.0" height="11.5" fill="#d0d0d0" /><rect x="0.0" y="347.0" width="55.0" height="2.2" fill="#2e2e2e" /><rect x="0.0" y="333.0" width="55.0" height="2.5" fill="#5a5a5a" /><rect x="0.0" y="351.5" width="2.5" height="11.5" fill="#d0d0d0" /><rect x="2.5" y="351.5" width="1.8" height="11.5" fill="#8a8a8a" /><rect x="4.3" y="351.5" width="2.4" height="11.5" fill="#dcdcdc" /><rect x="6.8" y="351.5" width="3.0" height="11.5" fill="#dcdcdc" /><rect x="9.8" y="351.5" width="3.1" height="11.5" fill="#8a8a8a" /><rect x="12.9" y="351.5" width="1.9" height="11.5" fill="#9c9c9c" /><rect x="14.9" y="351.5" width="3.3" height="11.5" fill="#a8a8a8" /><rect x="18.2" y="351.5" width="3.0" height="11.5" fill="#8a8a8a" /><rect x="21.2" y="351.5" width="3.2" height="11.5" fill="#d0d0d0" /><rect x="24.4" y="351.5" width="2.2" height="11.5" fill="#c4c4c4" /><rect x="26.6" y="351.5" width="2.1" height="11.5" fill="#c4c4c4" /><rect x="28.8" y="351.5" width="2.2" height="11.5" fill="#9c9c9c" /><rect x="31.0" y="351.5" width="2.2" height="11.5" fill="#d0d0d0" /><rect x="33.2" y="351.5" width="3.1" height="11.5" fill="#a8a8a8" /><rect x="36.3" y="351.5" width="1.7" height="11.5" fill="#dcdcdc" /><rect x="38.0" y="351.5" width="2.7" height="11.5" fill="#a8a8a8" /><rect x="40.7" y="351.5" width="3.4" height="11.5" fill="#d0d0d0" /><rect x="44.0" y="351.5" width="1.9" height="11.5" fill="#8a8a8a" /><rect x="45.9" y="351.5" width="1.8" height="11.5" fill="#a8a8a8" /><rect x="47.7" y="351.5" width="2.5" height="11.5" fill="#d0d0d0" /><rect x="50.2" y="351.5" width="2.5" height="11.5" fill="#8a8a8a" /><rect x="52.8" y="351.5" width="2.2" height="11.5" fill="#c4c4c4" /><rect x="0.0" y="363.0" width="55.0" height="2.2" fill="#2e2e2e" /><rect x="0.0" y="349.0" width="55.0" height="2.5" fill="#5a5a5a" /><rect x="0.0" y="367.5" width="3.2" height="11.5" fill="#dcdcdc" /><rect x="3.2" y="367.5" width="2.3" height="11.5" fill="#c4c4c4" /><rect x="5.5" y="367.5" width="2.8" height="11.5" fill="#d0d0d0" /><rect x="8.3" y="367.5" width="2.0" height="11.5" fill="#d0d0d0" /><rect x="10.3" y="367.5" width="1.7" height="11.5" fill="#dcdcdc" /><rect x="12.0" y="367.5" width="2.7" height="11.5" fill="#a8a8a8" /><rect x="14.7" y="367.5" width="3.1" height="11.5" fill="#dcdcdc" /><rect x="17.9" y="367.5" width="1.7" height="11.5" fill="#9c9c9c" /><rect x="19.6" y="367.5" width="3.0" height="11.5" fill="#d0d0d0" /><rect x="22.6" y="367.5" width="1.7" height="11.5" fill="#9c9c9c" /><rect x="24.3" y="367.5" width="3.0" height="11.5" fill="#a8a8a8" /><rect x="27.3" y="367.5" width="2.2" height="11.5" fill="#a8a8a8" /><rect x="29.5" y="367.5" width="3.4" height="11.5" fill="#a8a8a8" /><rect x="33.0" y="367.5" width="1.9" height="11.5" fill="#a8a8a8" /><rect x="34.8" y="367.5" width="2.0" height="11.5" fill="#a8a8a8" /><rect x="36.8" y="367.5" width="3.2" height="11.5" fill="#9c9c9c" /><rect x="40.0" y="367.5" width="3.4" height="11.5" fill="#dcdcdc" /><rect x="43.3" y="367.5" width="1.7" height="11.5" fill="#dcdcdc" /><rect x="45.1" y="367.5" width="1.8" height="11.5" fill="#a8a8a8" /><rect x="46.8" y="367.5" width="2.6" height="11.5" fill="#9c9c9c" /><rect x="49.5" y="367.5" width="1.8" height="11.5" fill="#c4c4c4" /><rect x="51.3" y="367.5" width="2.8" height="11.5" fill="#d0d0d0" /><rect x="54.0" y="367.5" width="1.0" height="11.5" fill="#d0d0d0" /><rect x="0.0" y="379.0" width="55.0" height="2.2" fill="#2e2e2e" /><rect x="0.0" y="365.0" width="55.0" height="2.5" fill="#5a5a5a" /><rect x="0.0" y="195.0" width="8.0" height="180.0" fill="#303030" /><rect x="40.0" y="222.0" width="29.0" height="153.0" fill="#8e8e8e" /><rect x="47.0" y="232.0" width="4.0" height="4.5" fill="#dcdcdc" /><rect x="47.0" y="247.0" width="4.0" height="4.5" fill="#dcdcdc" /><rect x="47.0" y="262.0" width="4.0" height="4.5" fill="#dcdcdc" /><rect x="47.0" y="277.0" width="4.0" height="4.5" fill="#dcdcdc" /><rect x="47.0" y="292.0" width="4.0" height="4.5" fill="#dcdcdc" /><rect x="47.0" y="307.0" width="4.0" height="4.5" fill="#dcdcdc" /><rect x="47.0" y="322.0" width="4.0" height="4.5" fill="#dcdcdc" /><rect x="47.0" y="337.0" width="4.0" height="4.5" fill="#dcdcdc" /><rect x="47.0" y="352.0" width="4.0" height="4.5" fill="#dcdcdc" /><rect x="47.0" y="367.0" width="4.0" height="4.5" fill="#dcdcdc" /><rect x="59.0" y="186.0" width="31.0" height="189.0" fill="#262626" /><rect x="64.0" y="200.0" width="10.0" height="40.0" fill="#3e3e3e" /><rect x="82.0" y="256.0" width="30.0" height="119.0" fill="#b8b8b8" /><rect x="82.0" y="258.5" width="2.1" height="10.5" fill="#a8a8a8" /><rect x="84.1" y="258.5" width="2.3" height="10.5" fill="#d0d0d0" /><rect x="86.4" y="258.5" width="1.6" height="10.5" fill="#dcdcdc" /><rect x="88.1" y="258.5" width="1.7" height="10.5" fill="#dcdcdc" /><rect x="89.8" y="258.5" width="1.6" height="10.5" fill="#dcdcdc" /><rect x="91.4" y="258.5" width="1.9" height="10.5" fill="#d0d0d0" /><rect x="93.3" y="258.5" width="2.4" height="10.5" fill="#d0d0d0" /><rect x="95.7" y="258.5" width="2.0" height="10.5" fill="#dcdcdc" /><rect x="97.7" y="258.5" width="2.3" height="10.5" fill="#dcdcdc" /><rect x="100.0" y="258.5" width="1.7" height="10.5" fill="#a8a8a8" /><rect x="101.8" y="258.5" width="2.8" height="10.5" fill="#dcdcdc" /><rect x="104.5" y="258.5" width="3.4" height="10.5" fill="#dcdcdc" /><rect x="107.9" y="258.5" width="2.7" height="10.5" fill="#d0d0d0" /><rect x="110.6" y="258.5" width="1.4" height="10.5" fill="#d0d0d0" /><rect x="82.0" y="269.0" width="30.0" height="2.2" fill="#2e2e2e" /><rect x="82.0" y="256.0" width="30.0" height="2.5" fill="#5a5a5a" /><rect x="82.0" y="273.5" width="2.6" height="10.5" fill="#a8a8a8" /><rect x="84.6" y="273.5" width="2.1" height="10.5" fill="#a8a8a8" /><rect x="86.7" y="273.5" width="2.6" height="10.5" fill="#dcdcdc" /><rect x="89.3" y="273.5" width="2.1" height="10.5" fill="#9c9c9c" /><rect x="91.4" y="273.5" width="1.9" height="10.5" fill="#dcdcdc" /><rect x="93.3" y="273.5" width="2.6" height="10.5" fill="#a8a8a8" /><rect x="95.9" y="273.5" width="2.2" height="10.5" fill="#dcdcdc" /><rect x="98.1" y="273.5" width="2.9" height="10.5" fill="#dcdcdc" /><rect x="101.1" y="273.5" width="1.6" height="10.5" fill="#a8a8a8" /><rect x="102.7" y="273.5" width="2.5" height="10.5" fill="#dcdcdc" /><rect x="105.2" y="273.5" width="2.4" height="10.5" fill="#c4c4c4" /><rect x="107.5" y="273.5" width="2.4" height="10.5" fill="#8a8a8a" /><rect x="110.0" y="273.5" width="2.0" height="10.5" fill="#a8a8a8" /><rect x="82.0" y="284.0" width="30.0" height="2.2" fill="#2e2e2e" /><rect x="82.0" y="271.0" width="30.0" height="2.5" fill="#5a5a5a" /><rect x="82.0" y="288.5" width="3.1" height="10.5" fill="#9c9c9c" /><rect x="85.1" y="288.5" width="3.1" height="10.5" fill="#d0d0d0" /><rect x="88.1" y="288.5" width="2.6" height="10.5" fill="#dcdcdc" /><rect x="90.8" y="288.5" width="2.5" height="10.5" fill="#c4c4c4" /><rect x="93.3" y="288.5" width="3.0" height="10.5" fill="#c4c4c4" /><rect x="96.2" y="288.5" width="2.7" height="10.5" fill="#d0d0d0" /><rect x="99.0" y="288.5" width="1.7" height="10.5" fill="#8a8a8a" /><rect x="100.7" y="288.5" width="1.8" height="10.5" fill="#c4c4c4" /><rect x="102.5" y="288.5" width="1.8" height="10.5" fill="#8a8a8a" /><rect x="104.3" y="288.5" width="2.3" height="10.5" fill="#9c9c9c" /><rect x="106.7" y="288.5" width="1.7" height="10.5" fill="#dcdcdc" /><rect x="108.3" y="288.5" width="2.6" height="10.5" fill="#c4c4c4" /><rect x="111.0" y="288.5" width="1.0" height="10.5" fill="#c4c4c4" /><rect x="82.0" y="299.0" width="30.0" height="2.2" fill="#2e2e2e" /><rect x="82.0" y="286.0" width="30.0" height="2.5" fill="#5a5a5a" /><rect x="82.0" y="303.5" width="2.7" height="10.5" fill="#dcdcdc" /><rect x="84.7" y="303.5" width="3.1" height="10.5" fill="#d0d0d0" /><rect x="87.8" y="303.5" width="3.2" height="10.5" fill="#c4c4c4" /><rect x="91.0" y="303.5" width="2.4" height="10.5" fill="#9c9c9c" /><rect x="93.4" y="303.5" width="1.6" height="10.5" fill="#9c9c9c" /><rect x="95.0" y="303.5" width="2.9" height="10.5" fill="#9c9c9c" /><rect x="97.9" y="303.5" width="2.7" height="10.5" fill="#9c9c9c" /><rect x="100.6" y="303.5" width="3.1" height="10.5" fill="#c4c4c4" /><rect x="103.7" y="303.5" width="2.9" height="10.5" fill="#9c9c9c" /><rect x="106.7" y="303.5" width="2.2" height="10.5" fill="#8a8a8a" /><rect x="108.9" y="303.5" width="2.2" height="10.5" fill="#dcdcdc" /><rect x="111.1" y="303.5" width="0.9" height="10.5" fill="#d0d0d0" /><rect x="82.0" y="314.0" width="30.0" height="2.2" fill="#2e2e2e" /><rect x="82.0" y="301.0" width="30.0" height="2.5" fill="#5a5a5a" /><rect x="82.0" y="318.5" width="1.9" height="10.5" fill="#c4c4c4" /><rect x="83.9" y="318.5" width="1.8" height="10.5" fill="#a8a8a8" /><rect x="85.7" y="318.5" width="2.3" height="10.5" fill="#8a8a8a" /><rect x="88.0" y="318.5" width="1.7" height="10.5" fill="#8a8a8a" /><rect x="89.7" y="318.5" width="2.3" height="10.5" fill="#c4c4c4" /><rect x="92.0" y="318.5" width="3.3" height="10.5" fill="#8a8a8a" /><rect x="95.2" y="318.5" width="3.2" height="10.5" fill="#c4c4c4" /><rect x="98.5" y="318.5" width="2.9" height="10.5" fill="#c4c4c4" /><rect x="101.4" y="318.5" width="2.9" height="10.5" fill="#8a8a8a" /><rect x="104.2" y="318.5" width="3.4" height="10.5" fill="#a8a8a8" /><rect x="107.6" y="318.5" width="1.7" height="10.5" fill="#a8a8a8" /><rect x="109.3" y="318.5" width="2.0" height="10.5" fill="#a8a8a8" /><rect x="111.3" y="318.5" width="0.7" height="10.5" fill="#dcdcdc" /><rect x="82.0" y="329.0" width="30.0" height="2.2" fill="#2e2e2e" /><rect x="82.0" y="316.0" width="30.0" height="2.5" fill="#5a5a5a" /><rect x="82.0" y="333.5" width="1.9" height="10.5" fill="#c4c4c4" /><rect x="83.9" y="333.5" width="1.5" height="10.5" fill="#8a8a8a" /><rect x="85.4" y="333.5" width="2.6" height="10.5" fill="#dcdcdc" /><rect x="87.9" y="333.5" width="2.6" height="10.5" fill="#a8a8a8" /><rect x="90.6" y="333.5" width="2.9" height="10.5" fill="#dcdcdc" /><rect x="93.5" y="333.5" width="3.4" height="10.5" fill="#9c9c9c" /><rect x="96.9" y="333.5" width="2.9" height="10.5" fill="#d0d0d0" /><rect x="99.7" y="333.5" width="2.4" height="10.5" fill="#9c9c9c" /><rect x="102.1" y="333.5" width="3.1" height="10.5" fill="#8a8a8a" /><rect x="105.2" y="333.5" width="2.3" height="10.5" fill="#8a8a8a" /><rect x="107.5" y="333.5" width="1.7" height="10.5" fill="#9c9c9c" /><rect x="109.2" y="333.5" width="2.3" height="10.5" fill="#a8a8a8" /><rect x="111.5" y="333.5" width="0.5" height="10.5" fill="#a8a8a8" /><rect x="82.0" y="344.0" width="30.0" height="2.2" fill="#2e2e2e" /><rect x="82.0" y="331.0" width="30.0" height="2.5" fill="#5a5a5a" /><rect x="82.0" y="348.5" width="2.4" height="10.5" fill="#d0d0d0" /><rect x="84.4" y="348.5" width="2.2" height="10.5" fill="#d0d0d0" /><rect x="86.6" y="348.5" width="1.7" height="10.5" fill="#dcdcdc" /><rect x="88.3" y="348.5" width="1.8" height="10.5" fill="#d0d0d0" /><rect x="90.1" y="348.5" width="3.4" height="10.5" fill="#dcdcdc" /><rect x="93.5" y="348.5" width="1.6" height="10.5" fill="#a8a8a8" /><rect x="95.0" y="348.5" width="2.7" height="10.5" fill="#a8a8a8" /><rect x="97.7" y="348.5" width="2.8" height="10.5" fill="#c4c4c4" /><rect x="100.5" y="348.5" width="2.7" height="10.5" fill="#8a8a8a" /><rect x="103.2" y="348.5" width="1.7" height="10.5" fill="#8a8a8a" /><rect x="105.0" y="348.5" width="3.5" height="10.5" fill="#8a8a8a" /><rect x="108.5" y="348.5" width="2.5" height="10.5" fill="#c4c4c4" /><rect x="110.9" y="348.5" width="1.1" height="10.5" fill="#d0d0d0" /><rect x="82.0" y="359.0" width="30.0" height="2.2" fill="#2e2e2e" /><rect x="82.0" y="346.0" width="30.0" height="2.5" fill="#5a5a5a" /><rect x="82.0" y="363.5" width="3.0" height="10.5" fill="#9c9c9c" /><rect x="85.0" y="363.5" width="2.0" height="10.5" fill="#9c9c9c" /><rect x="87.0" y="363.5" width="1.8" height="10.5" fill="#d0d0d0" /><rect x="88.9" y="363.5" width="1.9" height="10.5" fill="#dcdcdc" /><rect x="90.8" y="363.5" width="2.2" height="10.5" fill="#9c9c9c" /><rect x="93.0" y="363.5" width="2.6" height="10.5" fill="#d0d0d0" /><rect x="95.6" y="363.5" width="3.0" height="10.5" fill="#c4c4c4" /><rect x="98.6" y="363.5" width="3.5" height="10.5" fill="#d0d0d0" /><rect x="102.0" y="363.5" width="2.9" height="10.5" fill="#c4c4c4" /><rect x="104.9" y="363.5" width="2.5" height="10.5" fill="#a8a8a8" /><rect x="107.5" y="363.5" width="2.2" height="10.5" fill="#a8a8a8" /><rect x="109.7" y="363.5" width="2.3" height="10.5" fill="#dcdcdc" /><rect x="82.0" y="374.0" width="30.0" height="2.2" fill="#2e2e2e" /><rect x="82.0" y="361.0" width="30.0" height="2.5" fill="#5a5a5a" /><rect x="105.0" y="262.0" width="19.0" height="113.0" fill="#888" /><rect x="110.0" y="270.0" width="3.5" height="4.0" fill="#d5d5d5" /><rect x="110.0" y="284.0" width="3.5" height="4.0" fill="#d5d5d5" /><rect x="110.0" y="298.0" width="3.5" height="4.0" fill="#d5d5d5" /><rect x="110.0" y="312.0" width="3.5" height="4.0" fill="#d5d5d5" /><rect x="110.0" y="326.0" width="3.5" height="4.0" fill="#d5d5d5" /><rect x="110.0" y="340.0" width="3.5" height="4.0" fill="#d5d5d5" /><rect x="110.0" y="354.0" width="3.5" height="4.0" fill="#d5d5d5" /><rect x="110.0" y="368.0" width="3.5" height="4.0" fill="#d5d5d5" /><rect x="121.0" y="248.0" width="17.0" height="127.0" fill="#282828" /><rect x="135.0" y="290.0" width="21.0" height="85.0" fill="#a8a8a8" /><rect x="135.0" y="292.5" width="2.0" height="8.5" fill="#8a8a8a" /><rect x="137.0" y="292.5" width="1.8" height="8.5" fill="#9c9c9c" /><rect x="138.7" y="292.5" width="1.6" height="8.5" fill="#a8a8a8" /><rect x="140.3" y="292.5" width="2.0" height="8.5" fill="#dcdcdc" /><rect x="142.3" y="292.5" width="1.9" height="8.5" fill="#9c9c9c" /><rect x="144.2" y="292.5" width="1.6" height="8.5" fill="#8a8a8a" /><rect x="145.8" y="292.5" width="2.4" height="8.5" fill="#8a8a8a" /><rect x="148.2" y="292.5" width="2.6" height="8.5" fill="#8a8a8a" /><rect x="150.8" y="292.5" width="1.7" height="8.5" fill="#a8a8a8" /><rect x="152.5" y="292.5" width="3.0" height="8.5" fill="#9c9c9c" /><rect x="155.5" y="292.5" width="0.5" height="8.5" fill="#8a8a8a" /><rect x="135.0" y="301.0" width="21.0" height="2.2" fill="#2e2e2e" /><rect x="135.0" y="290.0" width="21.0" height="2.5" fill="#5a5a5a" /><rect x="135.0" y="305.5" width="2.4" height="8.5" fill="#8a8a8a" /><rect x="137.4" y="305.5" width="3.0" height="8.5" fill="#9c9c9c" /><rect x="140.4" y="305.5" width="2.0" height="8.5" fill="#d0d0d0" /><rect x="142.4" y="305.5" width="2.3" height="8.5" fill="#8a8a8a" /><rect x="144.7" y="305.5" width="1.7" height="8.5" fill="#d0d0d0" /><rect x="146.4" y="305.5" width="2.2" height="8.5" fill="#9c9c9c" /><rect x="148.6" y="305.5" width="1.7" height="8.5" fill="#9c9c9c" /><rect x="150.3" y="305.5" width="2.5" height="8.5" fill="#a8a8a8" /><rect x="152.8" y="305.5" width="2.7" height="8.5" fill="#a8a8a8" /><rect x="155.5" y="305.5" width="0.5" height="8.5" fill="#dcdcdc" /><rect x="135.0" y="314.0" width="21.0" height="2.2" fill="#2e2e2e" /><rect x="135.0" y="303.0" width="21.0" height="2.5" fill="#5a5a5a" /><rect x="135.0" y="318.5" width="3.4" height="8.5" fill="#8a8a8a" /><rect x="138.4" y="318.5" width="2.9" height="8.5" fill="#a8a8a8" /><rect x="141.3" y="318.5" width="3.4" height="8.5" fill="#dcdcdc" /><rect x="144.7" y="318.5" width="2.4" height="8.5" fill="#dcdcdc" /><rect x="147.1" y="318.5" width="3.3" height="8.5" fill="#c4c4c4" /><rect x="150.4" y="318.5" width="2.6" height="8.5" fill="#8a8a8a" /><rect x="153.0" y="318.5" width="1.8" height="8.5" fill="#dcdcdc" /><rect x="154.7" y="318.5" width="1.3" height="8.5" fill="#9c9c9c" /><rect x="135.0" y="327.0" width="21.0" height="2.2" fill="#2e2e2e" /><rect x="135.0" y="316.0" width="21.0" height="2.5" fill="#5a5a5a" /><rect x="135.0" y="331.5" width="2.1" height="8.5" fill="#c4c4c4" /><rect x="137.1" y="331.5" width="3.4" height="8.5" fill="#8a8a8a" /><rect x="140.5" y="331.5" width="2.5" height="8.5" fill="#a8a8a8" /><rect x="143.0" y="331.5" width="2.1" height="8.5" fill="#c4c4c4" /><rect x="145.2" y="331.5" width="2.6" height="8.5" fill="#dcdcdc" /><rect x="147.7" y="331.5" width="2.8" height="8.5" fill="#dcdcdc" /><rect x="150.5" y="331.5" width="3.3" height="8.5" fill="#dcdcdc" /><rect x="153.9" y="331.5" width="1.9" height="8.5" fill="#a8a8a8" /><rect x="155.8" y="331.5" width="0.2" height="8.5" fill="#c4c4c4" /><rect x="135.0" y="340.0" width="21.0" height="2.2" fill="#2e2e2e" /><rect x="135.0" y="329.0" width="21.0" height="2.5" fill="#5a5a5a" /><rect x="135.0" y="344.5" width="2.2" height="8.5" fill="#c4c4c4" /><rect x="137.2" y="344.5" width="1.6" height="8.5" fill="#c4c4c4" /><rect x="138.8" y="344.5" width="2.3" height="8.5" fill="#9c9c9c" /><rect x="141.0" y="344.5" width="3.3" height="8.5" fill="#a8a8a8" /><rect x="144.3" y="344.5" width="2.8" height="8.5" fill="#d0d0d0" /><rect x="147.1" y="344.5" width="1.8" height="8.5" fill="#9c9c9c" /><rect x="148.9" y="344.5" width="3.2" height="8.5" fill="#d0d0d0" /><rect x="152.1" y="344.5" width="1.9" height="8.5" fill="#a8a8a8" /><rect x="154.0" y="344.5" width="2.0" height="8.5" fill="#d0d0d0" /><rect x="135.0" y="353.0" width="21.0" height="2.2" fill="#2e2e2e" /><rect x="135.0" y="342.0" width="21.0" height="2.5" fill="#5a5a5a" /><rect x="135.0" y="357.5" width="3.1" height="8.5" fill="#8a8a8a" /><rect x="138.1" y="357.5" width="2.2" height="8.5" fill="#a8a8a8" /><rect x="140.3" y="357.5" width="2.6" height="8.5" fill="#a8a8a8" /><rect x="142.9" y="357.5" width="1.8" height="8.5" fill="#dcdcdc" /><rect x="144.7" y="357.5" width="2.4" height="8.5" fill="#8a8a8a" /><rect x="147.1" y="357.5" width="1.7" height="8.5" fill="#d0d0d0" /><rect x="148.7" y="357.5" width="2.1" height="8.5" fill="#d0d0d0" /><rect x="150.8" y="357.5" width="1.6" height="8.5" fill="#9c9c9c" /><rect x="152.4" y="357.5" width="1.7" height="8.5" fill="#dcdcdc" /><rect x="154.1" y="357.5" width="1.9" height="8.5" fill="#a8a8a8" /><rect x="135.0" y="366.0" width="21.0" height="2.2" fill="#2e2e2e" /><rect x="135.0" y="355.0" width="21.0" height="2.5" fill="#5a5a5a" /><rect x="135.0" y="370.5" width="3.1" height="8.5" fill="#dcdcdc" /><rect x="138.1" y="370.5" width="2.5" height="8.5" fill="#a8a8a8" /><rect x="140.6" y="370.5" width="3.5" height="8.5" fill="#d0d0d0" /><rect x="144.1" y="370.5" width="1.9" height="8.5" fill="#a8a8a8" /><rect x="145.9" y="370.5" width="2.2" height="8.5" fill="#9c9c9c" /><rect x="148.1" y="370.5" width="2.6" height="8.5" fill="#9c9c9c" /><rect x="150.8" y="370.5" width="2.1" height="8.5" fill="#c4c4c4" /><rect x="152.9" y="370.5" width="3.1" height="8.5" fill="#d0d0d0" /><rect x="135.0" y="379.0" width="21.0" height="2.2" fill="#2e2e2e" /><rect x="135.0" y="368.0" width="21.0" height="2.5" fill="#5a5a5a" /><rect x="150.0" y="285.0" width="8.0" height="90.0" fill="#7c7c7c" /><rect x="154.0" y="268.0" width="14.0" height="107.0" fill="#2a2a2a" /><rect x="166.0" y="296.0" width="12.0" height="79.0" fill="#a0a0a0" /><rect x="166.0" y="298.5" width="2.4" height="7.5" fill="#c4c4c4" /><rect x="168.4" y="298.5" width="2.0" height="7.5" fill="#a8a8a8" /><rect x="170.5" y="298.5" width="3.2" height="7.5" fill="#d0d0d0" /><rect x="173.7" y="298.5" width="2.2" height="7.5" fill="#8a8a8a" /><rect x="175.9" y="298.5" width="2.1" height="7.5" fill="#d0d0d0" /><rect x="166.0" y="306.0" width="12.0" height="2.2" fill="#2e2e2e" /><rect x="166.0" y="296.0" width="12.0" height="2.5" fill="#5a5a5a" /><rect x="166.0" y="310.5" width="2.2" height="7.5" fill="#dcdcdc" /><rect x="168.2" y="310.5" width="2.9" height="7.5" fill="#9c9c9c" /><rect x="171.1" y="310.5" width="2.3" height="7.5" fill="#9c9c9c" /><rect x="173.3" y="310.5" width="3.4" height="7.5" fill="#9c9c9c" /><rect x="176.7" y="310.5" width="1.3" height="7.5" fill="#a8a8a8" /><rect x="166.0" y="318.0" width="12.0" height="2.2" fill="#2e2e2e" /><rect x="166.0" y="308.0" width="12.0" height="2.5" fill="#5a5a5a" /><rect x="166.0" y="322.5" width="2.0" height="7.5" fill="#d0d0d0" /><rect x="168.0" y="322.5" width="1.8" height="7.5" fill="#dcdcdc" /><rect x="169.7" y="322.5" width="1.6" height="7.5" fill="#9c9c9c" /><rect x="171.4" y="322.5" width="2.3" height="7.5" fill="#9c9c9c" /><rect x="173.6" y="322.5" width="3.3" height="7.5" fill="#c4c4c4" /><rect x="176.9" y="322.5" width="1.1" height="7.5" fill="#a8a8a8" /><rect x="166.0" y="330.0" width="12.0" height="2.2" fill="#2e2e2e" /><rect x="166.0" y="320.0" width="12.0" height="2.5" fill="#5a5a5a" /><rect x="166.0" y="334.5" width="3.0" height="7.5" fill="#8a8a8a" /><rect x="169.0" y="334.5" width="3.3" height="7.5" fill="#c4c4c4" /><rect x="172.2" y="334.5" width="3.3" height="7.5" fill="#8a8a8a" /><rect x="175.6" y="334.5" width="2.1" height="7.5" fill="#d0d0d0" /><rect x="177.6" y="334.5" width="0.4" height="7.5" fill="#d0d0d0" /><rect x="166.0" y="342.0" width="12.0" height="2.2" fill="#2e2e2e" /><rect x="166.0" y="332.0" width="12.0" height="2.5" fill="#5a5a5a" /><rect x="166.0" y="346.5" width="3.3" height="7.5" fill="#d0d0d0" /><rect x="169.3" y="346.5" width="3.3" height="7.5" fill="#8a8a8a" /><rect x="172.6" y="346.5" width="1.8" height="7.5" fill="#a8a8a8" /><rect x="174.3" y="346.5" width="2.3" height="7.5" fill="#d0d0d0" /><rect x="176.7" y="346.5" width="1.3" height="7.5" fill="#d0d0d0" /><rect x="166.0" y="354.0" width="12.0" height="2.2" fill="#2e2e2e" /><rect x="166.0" y="344.0" width="12.0" height="2.5" fill="#5a5a5a" /><rect x="166.0" y="358.5" width="1.7" height="7.5" fill="#dcdcdc" /><rect x="167.7" y="358.5" width="1.9" height="7.5" fill="#a8a8a8" /><rect x="169.6" y="358.5" width="2.2" height="7.5" fill="#d0d0d0" /><rect x="171.8" y="358.5" width="1.8" height="7.5" fill="#d0d0d0" /><rect x="173.6" y="358.5" width="2.5" height="7.5" fill="#dcdcdc" /><rect x="176.1" y="358.5" width="1.9" height="7.5" fill="#a8a8a8" /><rect x="166.0" y="366.0" width="12.0" height="2.2" fill="#2e2e2e" /><rect x="166.0" y="356.0" width="12.0" height="2.5" fill="#5a5a5a" /><rect x="166.0" y="370.5" width="2.3" height="7.5" fill="#8a8a8a" /><rect x="168.3" y="370.5" width="1.9" height="7.5" fill="#d0d0d0" /><rect x="170.2" y="370.5" width="2.9" height="7.5" fill="#a8a8a8" /><rect x="173.1" y="370.5" width="1.8" height="7.5" fill="#dcdcdc" /><rect x="175.0" y="370.5" width="2.9" height="7.5" fill="#d0d0d0" /><rect x="177.9" y="370.5" width="0.1" height="7.5" fill="#dcdcdc" /><rect x="166.0" y="378.0" width="12.0" height="2.2" fill="#2e2e2e" /><rect x="166.0" y="368.0" width="12.0" height="2.5" fill="#5a5a5a" /><rect x="175.0" y="292.0" width="5.0" height="83.0" fill="#7a7a7a" /><rect x="178.0" y="287.0" width="11.0" height="88.0" fill="#2c2c2c" /><rect x="189.0" y="300.0" width="5.0" height="75.0" fill="#9a9a9a" /><rect x="193.9" y="296.0" width="6.1" height="79.0" fill="#303030" /><rect x="200.0" y="303.0" width="4.0" height="75.0" fill="#888" /><rect x="204.0" y="299.0" width="4.8" height="79.0" fill="#303030" /><rect x="208.8" y="306.0" width="3.2" height="75.0" fill="#9a9a9a" /><rect x="212.0" y="302.0" width="3.9" height="79.0" fill="#303030" /><rect x="215.8" y="309.0" width="2.5" height="75.0" fill="#888" /><rect x="218.4" y="305.0" width="3.1" height="79.0" fill="#303030" /><rect x="221.5" y="312.0" width="2.0" height="75.0" fill="#9a9a9a" /><rect x="223.5" y="308.0" width="2.5" height="79.0" fill="#303030" /><rect x="226.0" y="315.0" width="1.6" height="75.0" fill="#888" /><rect x="227.6" y="311.0" width="2.0" height="79.0" fill="#303030" /><rect x="229.6" y="318.0" width="1.3" height="75.0" fill="#9a9a9a" /><rect x="230.9" y="314.0" width="1.6" height="79.0" fill="#303030" /><rect x="232.5" y="321.0" width="1.0" height="75.0" fill="#888" /><rect x="233.5" y="317.0" width="1.3" height="79.0" fill="#303030" /><rect x="234.8" y="324.0" width="0.8" height="75.0" fill="#9a9a9a" /><rect x="235.6" y="320.0" width="1.0" height="79.0" fill="#303030" /><rect x="244.0" y="285.0" width="25.0" height="90.0" fill="#6e6e6e" /><rect x="253.0" y="298.0" width="14.0" height="32.0" fill="#a8a8a8" /><path d="M255 330 V306 A5 5 0 0 1 265 306 V330Z" fill="#3a3a3a" stroke="none" stroke-width="1.00" /><rect x="258.0" y="318.0" width="4.0" height="8.0" fill="#ddd" /><rect x="246.0" y="330.0" width="23.0" height="9.0" fill="#c5c5c5" /><rect x="246.0" y="339.0" width="23.0" height="36.0" fill="#555" /><rect x="252.0" y="352.0" width="12.0" height="23.0" fill="#777" /></g></svg>
<div class="a t" id="t1" style="left:621.5px;top:183px;font-size:63px;line-height:63px;-webkit-text-stroke:1px #c1a27c;transform:scaleX(0.697);color:#c1a27c;white-space:nowrap;transform-origin:0 0">АКАДЕМІЧНА</div>
<div class="a t" id="t2" style="left:621.5px;top:248.5px;font-size:63px;line-height:63px;-webkit-text-stroke:1px #c1a27c;transform:scaleX(0.679);color:#c1a27c;white-space:nowrap;transform-origin:0 0">ДОБРОЧЕСНІСТЬ:</div>
<div class="a t" id="t3" style="left:620px;top:316px;font-size:58px;line-height:58px;font-weight:normal;-webkit-text-stroke:1.5px #c1a27c;letter-spacing:4.6px;transform:scaleX(0.7105);color:#c1a27c;white-space:nowrap;transform-origin:0 0">виклики сучасності</div>
<div class="a" style="left:620px;top:414px;width:475px;height:41px;background:#c29f76"></div>
<div class="a t" id="t4" style="left:636px;top:426px;font-size:17.5px;transform:scaleX(0.954);font-style:italic;color:#fdf8f0;white-space:nowrap;transform-origin:0 0">Проф. Форостян Ольга Іванівна</div>
<svg class="a" id="squig" style="left:690px;top:442.5px" width="84" height="4" viewBox="0 0 84 4"><path d="M0 1.5 L1.5 0.0 L3.0 3.0 L4.5 0.0 L6.0 3.0 L7.5 0.0 L9.0 3.0 L10.5 0.0 L12.0 3.0 L13.5 0.0 L15.0 3.0 L16.5 0.0 L18.0 3.0 L19.5 0.0 L21.0 3.0 L22.5 0.0 L24.0 3.0 L25.5 0.0 L27.0 3.0 L28.5 0.0 L30.0 3.0 L31.5 0.0 L33.0 3.0 L34.5 0.0 L36.0 3.0 L37.5 0.0 L39.0 3.0 L40.5 0.0 L42.0 3.0 L43.5 0.0 L45.0 3.0 L46.5 0.0 L48.0 3.0 L49.5 0.0 L51.0 3.0 L52.5 0.0 L54.0 3.0 L55.5 0.0 L57.0 3.0 L58.5 0.0 L60.0 3.0 L61.5 0.0 L63.0 3.0 L64.5 0.0 L66.0 3.0 L67.5 0.0 L69.0 3.0 L70.5 0.0 L72.0 3.0 L73.5 0.0 L75.0 3.0 L76.5 0.0 L78.0 3.0 L79.5 0.0 L81.0 3.0 L82.5 0.0" fill="none" stroke="#d8403a" stroke-width="0.8"/></svg>
</div>
<div id="thumbs" class="a" style="left:0;top:250px;width:182px;height:525px;overflow:hidden"><div class="a" style="left:0;top:-250px;width:182px;height:800px;filter:blur(0.35px)"><div class="a" style="left:79px;top:265px;font-size:10px;color:#555;line-height:10px">1</div>
<div class="a" style="left:95.0px;top:263.5px;width:72.0px;height:43.0px;background:#8b2a22;"></div>
<div class="a" style="left:97.0px;top:266.0px;width:68.0px;height:38.0px;background:#faf8f0;"></div>
<div class="a" style="left:97.0px;top:266.0px;width:20.0px;height:38.0px;background:#dccfb6;"></div>
<div class="a" style="left:105.0px;top:271.0px;width:19.0px;height:28.0px;background:#666;"></div>
<div class="a" style="left:106.0px;top:271.0px;width:1.2px;height:28.0px;background:#333;"></div>
<div class="a" style="left:110.0px;top:271.0px;width:1.2px;height:28.0px;background:#333;"></div>
<div class="a" style="left:114.0px;top:271.0px;width:1.2px;height:28.0px;background:#333;"></div>
<div class="a" style="left:118.0px;top:271.0px;width:1.2px;height:28.0px;background:#333;"></div>
<div class="a" style="left:122.0px;top:271.0px;width:1.2px;height:28.0px;background:#333;"></div>
<div class="a" style="left:107.0px;top:271.0px;width:6.0px;height:10.0px;background:#aaa;"></div>
<div class="a" style="left:129.0px;top:276.0px;width:28.0px;height:2.5px;background:#cbb496;"></div>
<div class="a" style="left:129.0px;top:282.0px;width:30.0px;height:2.5px;background:#cbb496;"></div>
<div class="a" style="left:129.0px;top:288.0px;width:24.0px;height:2.5px;background:#cbb496;"></div>
<div class="a" style="left:129.0px;top:295.0px;width:33.0px;height:3.0px;background:#c9ab84;"></div>
<div class="a" style="left:79px;top:319px;font-size:10px;color:#555;line-height:10px">2</div>
<div class="a" style="left:97.0px;top:320.0px;width:68.0px;height:38.0px;background:#c5ad8c;"></div>
<div class="a" style="left:97.0px;top:322.0px;width:30.0px;height:12.0px;background:#a8a8a8;"></div>
<div class="a" style="left:99.0px;top:323.0px;width:1.5px;height:10.0px;background:#666;"></div>
<div class="a" style="left:104.0px;top:323.0px;width:1.5px;height:10.0px;background:#666;"></div>
<div class="a" style="left:109.0px;top:323.0px;width:1.5px;height:10.0px;background:#666;"></div>
<div class="a" style="left:114.0px;top:323.0px;width:1.5px;height:10.0px;background:#666;"></div>
<div class="a" style="left:119.0px;top:323.0px;width:1.5px;height:10.0px;background:#666;"></div>
<div class="a" style="left:124.0px;top:323.0px;width:1.5px;height:10.0px;background:#666;"></div>
<div class="a" style="left:97.0px;top:334.0px;width:30.0px;height:3.0px;background:#f2efe6;"></div>
<div class="a" style="left:97.0px;top:337.0px;width:30.0px;height:15.0px;background:#bcbcbc;"></div>
<div class="a" style="left:107.0px;top:340.0px;width:10.0px;height:8.0px;background:#555;transform:rotate(-20deg)"></div>
<div class="a" style="left:97.0px;top:352.0px;width:30.0px;height:3.0px;background:#f2efe6;"></div>
<div class="a" style="left:128.0px;top:322.0px;width:34.0px;height:2.0px;background:#e8dccb;"></div>
<div class="a" style="left:129.0px;top:326.0px;width:32.0px;height:1.2px;background:#e5d8c2;"></div>
<div class="a" style="left:129.0px;top:329.0px;width:32.0px;height:1.2px;background:#e5d8c2;"></div>
<div class="a" style="left:129.0px;top:332.0px;width:32.0px;height:1.2px;background:#e5d8c2;"></div>
<div class="a" style="left:129.0px;top:335.0px;width:32.0px;height:1.2px;background:#e5d8c2;"></div>
<div class="a" style="left:129.0px;top:338.0px;width:32.0px;height:1.2px;background:#e5d8c2;"></div>
<div class="a" style="left:129.0px;top:341.0px;width:32.0px;height:1.2px;background:#e5d8c2;"></div>
<div class="a" style="left:129.0px;top:344.0px;width:32.0px;height:1.2px;background:#e5d8c2;"></div>
<div class="a" style="left:129.0px;top:347.0px;width:32.0px;height:1.2px;background:#e5d8c2;"></div>
<div class="a" style="left:129.0px;top:350.0px;width:32.0px;height:1.2px;background:#e5d8c2;"></div>
<div class="a" style="left:129.0px;top:353.0px;width:32.0px;height:1.2px;background:#e5d8c2;"></div>
<div class="a" style="left:79px;top:373px;font-size:10px;color:#555;line-height:10px">3</div>
<svg class="a" style="left:78px;top:391px" width="8" height="8" viewBox="0 0 8 8"><path d="M4 0.3 L5 3 H7.8 L5.5 4.8 L6.4 7.6 L4 5.9 L1.6 7.6 L2.5 4.8 L0.2 3 H3Z" fill="#444"/></svg>
<div class="a" style="left:97.0px;top:374.0px;width:68.0px;height:38.0px;background:#bba283;"></div>
<div class="a" style="left:107.0px;top:379.0px;width:48.0px;height:1.3px;background:#eee4d4;"></div>
<div class="a" style="left:111.0px;top:382.0px;width:40.0px;height:1.0px;background:#e0d2bd;"></div>
<div class="a" style="left:107.0px;top:394.0px;width:8.0px;height:1.0px;background:#d8c8b0;"></div>
<div class="a" style="left:127.0px;top:394.0px;width:8.0px;height:1.0px;background:#d8c8b0;"></div>
<div class="a" style="left:147.0px;top:394.0px;width:8.0px;height:1.0px;background:#d8c8b0;"></div>
<div class="a" style="left:79px;top:427px;font-size:10px;color:#555;line-height:10px">4</div>
<div class="a" style="left:97.0px;top:428.0px;width:68.0px;height:38.0px;background:#bba283;"></div>
<div class="a" style="left:107.0px;top:433.0px;width:48.0px;height:1.3px;background:#eee4d4;"></div>
<div class="a" style="left:111.0px;top:436.0px;width:40.0px;height:1.0px;background:#e0d2bd;"></div>
<div class="a" style="left:102.0px;top:440.0px;width:58.0px;height:1.2px;background:#efe6d8;"></div>
<div class="a" style="left:102.0px;top:443.0px;width:50.0px;height:1.0px;background:#e2d4c0;"></div>
<div class="a" style="left:102.0px;top:448.0px;width:58.0px;height:1.2px;background:#efe6d8;"></div>
<div class="a" style="left:102.0px;top:451.0px;width:50.0px;height:1.0px;background:#e2d4c0;"></div>
<div class="a" style="left:102.0px;top:456.0px;width:58.0px;height:1.2px;background:#efe6d8;"></div>
<div class="a" style="left:102.0px;top:459.0px;width:50.0px;height:1.0px;background:#e2d4c0;"></div>
<div class="a" style="left:79px;top:481px;font-size:10px;color:#555;line-height:10px">5</div>
<div class="a" style="left:97.0px;top:482.0px;width:68.0px;height:38.0px;background:#bba283;"></div>
<div class="a" style="left:107.0px;top:487.0px;width:48.0px;height:1.3px;background:#eee4d4;"></div>
<div class="a" style="left:111.0px;top:490.0px;width:40.0px;height:1.0px;background:#e0d2bd;"></div>
<div class="a" style="left:102.0px;top:494.0px;width:58.0px;height:1.2px;background:#efe6d8;"></div>
<div class="a" style="left:102.0px;top:497.0px;width:50.0px;height:1.0px;background:#e2d4c0;"></div>
<div class="a" style="left:102.0px;top:502.0px;width:58.0px;height:1.2px;background:#efe6d8;"></div>
<div class="a" style="left:102.0px;top:505.0px;width:50.0px;height:1.0px;background:#e2d4c0;"></div>
<div class="a" style="left:102.0px;top:510.0px;width:58.0px;height:1.2px;background:#efe6d8;"></div>
<div class="a" style="left:102.0px;top:513.0px;width:50.0px;height:1.0px;background:#e2d4c0;"></div>
<div class="a" style="left:79px;top:535px;font-size:10px;color:#555;line-height:10px">6</div>
<div class="a" style="left:97.0px;top:536.0px;width:68.0px;height:38.0px;background:#faf8f0;"></div>
<div class="a" style="left:97.0px;top:536.0px;width:3.0px;height:38.0px;background:#c0a07e;"></div>
<div class="a" style="left:107.0px;top:540.0px;width:50.0px;height:1.2px;background:#cdb496;"></div>
<div class="a" style="left:103.0px;top:547.0px;width:56.0px;height:0.9px;background:#777;"></div>
<div class="a" style="left:103.0px;top:549.2px;width:56.0px;height:0.9px;background:#777;"></div>
<div class="a" style="left:103.0px;top:551.4px;width:56.0px;height:0.9px;background:#777;"></div>
<div class="a" style="left:119.0px;top:557.0px;width:26.0px;height:14.0px;background:#8d8a86;"></div>
<div class="a" style="left:125.0px;top:559.0px;width:8.0px;height:9.0px;background:#cdd4dc;"></div>
<div class="a" style="left:79px;top:589px;font-size:10px;color:#555;line-height:10px">7</div>
<div class="a" style="left:97.0px;top:590.0px;width:68.0px;height:38.0px;background:#faf8f0;"></div>
<div class="a" style="left:97.0px;top:590.0px;width:5.0px;height:38.0px;background:#ddd0b8;"></div>
<div class="a" style="left:105.0px;top:593.0px;width:32.0px;height:3.0px;background:#cdb496;"></div>
<div class="a" style="left:105.0px;top:598.0px;width:28.0px;height:1.2px;background:#8a8a8a;"></div>
<div class="a" style="left:105.0px;top:601.0px;width:34.0px;height:1.2px;background:#8a8a8a;"></div>
<div class="a" style="left:105.0px;top:604.0px;width:34.0px;height:1.2px;background:#8a8a8a;"></div>
<div class="a" style="left:105.0px;top:607.0px;width:28.0px;height:1.2px;background:#8a8a8a;"></div>
<div class="a" style="left:105.0px;top:610.0px;width:34.0px;height:1.2px;background:#8a8a8a;"></div>
<div class="a" style="left:105.0px;top:613.0px;width:34.0px;height:1.2px;background:#8a8a8a;"></div>
<div class="a" style="left:105.0px;top:616.0px;width:28.0px;height:1.2px;background:#8a8a8a;"></div>
<div class="a" style="left:105.0px;top:619.0px;width:34.0px;height:1.2px;background:#8a8a8a;"></div>
<div class="a" style="left:140.0px;top:596.0px;width:24.0px;height:26.0px;background:#d8d4cc;"></div>
<div class="a" style="left:140.0px;top:596.0px;width:24.0px;height:2.0px;background:#444;"></div>
<div class="a" style="left:145.0px;top:601.0px;width:10.0px;height:3.0px;background:#333;transform:rotate(15deg)"></div>
<div class="a" style="left:153.0px;top:598.0px;width:6.0px;height:6.0px;background:#b08b5e;border-radius:50%"></div>
<div class="a" style="left:142.0px;top:612.0px;width:16.0px;height:6.0px;background:#555;border-radius:3px"></div>
<div class="a" style="left:79px;top:643px;font-size:10px;color:#555;line-height:10px">8</div>
<div class="a" style="left:97.0px;top:644.0px;width:68.0px;height:38.0px;background:#faf8f0;"></div>
<div class="a" style="left:97.0px;top:644.0px;width:5.0px;height:38.0px;background:#ddd0b8;"></div>
<div class="a" style="left:105.0px;top:652.0px;width:28.0px;height:1.2px;background:#8a8a8a;"></div>
<div class="a" style="left:105.0px;top:655.0px;width:34.0px;height:1.2px;background:#8a8a8a;"></div>
<div class="a" style="left:105.0px;top:658.0px;width:34.0px;height:1.2px;background:#8a8a8a;"></div>
<div class="a" style="left:105.0px;top:661.0px;width:28.0px;height:1.2px;background:#8a8a8a;"></div>
<div class="a" style="left:105.0px;top:664.0px;width:34.0px;height:1.2px;background:#8a8a8a;"></div>
<div class="a" style="left:105.0px;top:667.0px;width:34.0px;height:1.2px;background:#8a8a8a;"></div>
<div class="a" style="left:105.0px;top:670.0px;width:28.0px;height:1.2px;background:#8a8a8a;"></div>
<div class="a" style="left:105.0px;top:673.0px;width:34.0px;height:1.2px;background:#8a8a8a;"></div>
<div class="a" style="left:140.0px;top:650.0px;width:24.0px;height:26.0px;background:#d8d4cc;"></div>
<div class="a" style="left:140.0px;top:650.0px;width:24.0px;height:2.0px;background:#444;"></div>
<div class="a" style="left:145.0px;top:655.0px;width:10.0px;height:3.0px;background:#333;transform:rotate(15deg)"></div>
<div class="a" style="left:153.0px;top:652.0px;width:6.0px;height:6.0px;background:#b08b5e;border-radius:50%"></div>
<div class="a" style="left:142.0px;top:666.0px;width:16.0px;height:6.0px;background:#555;border-radius:3px"></div>
<div class="a" style="left:79px;top:697px;font-size:10px;color:#555;line-height:10px">9</div>
<div class="a" style="left:97.0px;top:698.0px;width:68.0px;height:38.0px;background:#f0ebe0;"></div>
<div class="a" style="left:97.0px;top:698.0px;width:2.0px;height:38.0px;background:#333;"></div>
<div class="a" style="left:99.0px;top:698.0px;width:30.0px;height:38.0px;background:#c5a47a;"></div>
<div class="a" style="left:102.0px;top:706.0px;width:24.0px;height:1.0px;background:#dcc4a2;"></div>
<div class="a" style="left:102.0px;top:709.5px;width:24.0px;height:1.0px;background:#dcc4a2;"></div>
<div class="a" style="left:102.0px;top:713.0px;width:24.0px;height:1.0px;background:#dcc4a2;"></div>
<div class="a" style="left:102.0px;top:716.5px;width:24.0px;height:1.0px;background:#dcc4a2;"></div>
<div class="a" style="left:102.0px;top:720.0px;width:24.0px;height:1.0px;background:#dcc4a2;"></div>
<div class="a" style="left:102.0px;top:723.5px;width:24.0px;height:1.0px;background:#dcc4a2;"></div>
<div class="a" style="left:129.0px;top:703.0px;width:36.0px;height:3.0px;background:#d6c9b4;"></div>
<div class="a" style="left:129.0px;top:712.0px;width:36.0px;height:24.0px;background:#9e9e9e;"></div>
<div class="a" style="left:141.0px;top:720.0px;width:24.0px;height:16.0px;background:#cfcfcf;clip-path:polygon(30% 0,100% 0,100% 100%,0 100%)"></div>
<div class="a" style="left:74px;top:751px;font-size:10px;color:#555;line-height:10px">10</div>
<div class="a" style="left:97.0px;top:752.0px;width:68.0px;height:38.0px;background:#faf8f0;"></div>
<div class="a" style="left:97.0px;top:752.0px;width:5.0px;height:38.0px;background:#ddd0b8;"></div>
<div class="a" style="left:105.0px;top:755.0px;width:20.0px;height:2.0px;background:#cdb496;"></div>
<div class="a" style="left:105.0px;top:761.0px;width:34.0px;height:1.2px;background:#8a8a8a;"></div>
<div class="a" style="left:105.0px;top:764.0px;width:34.0px;height:1.2px;background:#8a8a8a;"></div>
<div class="a" style="left:105.0px;top:767.0px;width:34.0px;height:1.2px;background:#8a8a8a;"></div>
<div class="a" style="left:105.0px;top:770.0px;width:34.0px;height:1.2px;background:#8a8a8a;"></div>
<div class="a" style="left:105.0px;top:773.0px;width:34.0px;height:1.2px;background:#8a8a8a;"></div>
<div class="a" style="left:140.0px;top:760.0px;width:24.0px;height:26.0px;background:#d8d4cc;"></div>
<div class="a" style="left:140.0px;top:760.0px;width:24.0px;height:2.0px;background:#444;"></div>
<div class="a" style="left:153.0px;top:763.0px;width:6.0px;height:6.0px;background:#b08b5e;border-radius:50%"></div>
</div></div>
<div class="a" style="left:81.00px;top:213.14px;font-size:9.13px;line-height:9.13px;font-weight:normal;font-style:normal;color:#f3cdb8;white-space:nowrap;transform-origin:0 0;transform:scaleX(0.9537);">Файл</div>
<div class="a" style="left:122.90px;top:213.14px;font-size:9.13px;line-height:9.13px;font-weight:normal;font-style:normal;color:#f3cdb8;white-space:nowrap;transform-origin:0 0;transform:scaleX(0.9521);">Главная</div>
<div class="a" style="left:172.70px;top:213.14px;font-size:9.13px;line-height:9.13px;font-weight:normal;font-style:normal;color:#f3cdb8;white-space:nowrap;transform-origin:0 0;transform:scaleX(0.9251);">Вставка</div>
<div class="a" style="left:220.00px;top:213.14px;font-size:9.13px;line-height:9.13px;font-weight:normal;font-style:normal;color:#f3cdb8;white-space:nowrap;transform-origin:0 0;transform:scaleX(0.9784);">Рисование</div>
<div class="a" style="left:281.80px;top:213.14px;font-size:9.13px;line-height:9.13px;font-weight:normal;font-style:normal;color:#f3cdb8;white-space:nowrap;transform-origin:0 0;transform:scaleX(0.9910);">Конструктор</div>
<div class="a" style="left:349.80px;top:213.14px;font-size:9.13px;line-height:9.13px;font-weight:normal;font-style:normal;color:#f3cdb8;white-space:nowrap;transform-origin:0 0;transform:scaleX(0.9831);">Переходы</div>
<div class="a" style="left:408.70px;top:213.14px;font-size:9.13px;line-height:9.13px;font-weight:normal;font-style:normal;color:#f3cdb8;white-space:nowrap;transform-origin:0 0;transform:scaleX(1.0054);">Анимация</div>
<div class="a" style="left:468.00px;top:213.14px;font-size:9.13px;line-height:9.13px;font-weight:normal;font-style:normal;color:#f3cdb8;white-space:nowrap;transform-origin:0 0;transform:scaleX(0.9653);">Слайд-шоу</div>
<div class="a" style="left:530.20px;top:213.14px;font-size:9.13px;line-height:9.13px;font-weight:normal;font-style:normal;color:#f3cdb8;white-space:nowrap;transform-origin:0 0;transform:scaleX(0.9810);">Запись</div>
<div class="a" style="left:575.90px;top:213.14px;font-size:9.13px;line-height:9.13px;font-weight:normal;font-style:normal;color:#f3cdb8;white-space:nowrap;transform-origin:0 0;transform:scaleX(0.9928);">Рецензирование</div>
<div class="a" style="left:662.20px;top:213.14px;font-size:9.13px;line-height:9.13px;font-weight:normal;font-style:normal;color:#f3cdb8;white-space:nowrap;transform-origin:0 0;transform:scaleX(0.9561);">Вид</div>
<div class="a" style="left:694.30px;top:213.14px;font-size:9.13px;line-height:9.13px;font-weight:normal;font-style:normal;color:#f3cdb8;white-space:nowrap;transform-origin:0 0;transform:scaleX(0.9627);">Справка</div>
<div class="a" style="left:745.50px;top:213.14px;font-size:9.13px;line-height:9.13px;font-weight:normal;font-style:normal;color:#f3cdb8;white-space:nowrap;transform-origin:0 0;transform:scaleX(1.0007);">Acrobat</div>
<div class="a" style="left:816.30px;top:213.14px;font-size:9.13px;line-height:9.13px;font-weight:normal;font-style:normal;color:#f3cdb8;white-space:nowrap;transform-origin:0 0;transform:scaleX(0.9402);">Что вы хотите сделать?</div>
<div class="a" style="left:516.00px;top:189.44px;font-size:9.13px;line-height:9.13px;font-weight:normal;font-style:normal;color:#f6ddd0;white-space:nowrap;transform-origin:0 0;transform:scaleX(0.9369);white-space:pre">АКАДЕМ.ДОБРОЧЕСНІСТЬ.pptx[Protected View]  -  PowerPoint</div>
<div class="a" style="left:952.20px;top:189.26px;font-size:8.41px;line-height:8.41px;font-weight:normal;font-style:normal;color:#f4dcd0;white-space:nowrap;transform-origin:0 0;transform:scaleX(0.9106);-webkit-text-stroke:0.25px #f4dcd0">Форостян Ольга Іванівна</div>
<div class="a" style="left:1116.20px;top:211.74px;font-size:11.59px;line-height:11.59px;font-weight:bold;font-style:normal;color:#fbeee8;white-space:nowrap;transform-origin:0 0;transform:scaleX(0.8577);">Общий доступ</div>
<div class="a" style="left:100.00px;top:235.96px;font-size:8.41px;line-height:8.41px;font-weight:bold;font-style:normal;color:#333326;white-space:nowrap;transform-origin:0 0;transform:scaleX(1.0292);">ЗАЩИЩЕННЫЙ ПРОСМОТР</div>
<div class="a" style="left:229.40px;top:236.20px;font-size:8.12px;line-height:8.12px;font-weight:normal;font-style:normal;color:#4a4838;white-space:nowrap;transform-origin:0 0;transform:scaleX(1.1009);text-decoration:underline">Будьте осторожны: файлы из Интернета могут содержать вирусы. Если вам не нужно изменять этот документ, лучше работать с ним в режиме защищенного просмотра.</div>
<div class="a" style="left:953.80px;top:235.96px;font-size:8.99px;line-height:8.99px;font-weight:normal;font-style:normal;color:#505050;white-space:nowrap;transform-origin:0 0;transform:scaleX(0.9847);">Разрешить редактирование</div>
<div class="a" style="left:80.00px;top:779.63px;font-size:8.55px;line-height:8.55px;font-weight:normal;font-style:normal;color:#5a5a5a;white-space:nowrap;transform-origin:0 0;transform:scaleX(0.8624);">Слайд 1 из 32</div>
<div class="a" style="left:143.00px;top:781.60px;font-size:6.23px;line-height:6.23px;font-weight:normal;font-style:normal;color:#5a5a5a;white-space:nowrap;transform-origin:0 0;transform:scaleX(1.1808);">русский</div>
<div class="a" style="left:885.80px;top:780.15px;font-size:7.83px;line-height:7.83px;font-weight:normal;font-style:normal;color:#444;white-space:nowrap;transform-origin:0 0;transform:scaleX(0.9673);">Примечания</div>
<div class="a" style="left:1170.10px;top:780.12px;font-size:7.39px;line-height:7.39px;font-weight:normal;font-style:normal;color:#555;white-space:nowrap;transform-origin:0 0;transform:scaleX(0.9864);">60%</div>
<div class="a" style="left:5px;top:767px;width:209px;height:21px;border-radius:4px;background:rgba(0,0,0,.52)"></div>
<div class="a" style="left:17.00px;top:772.71px;font-size:10.58px;line-height:10.58px;font-weight:normal;font-style:normal;color:#f4f4f4;white-space:nowrap;transform-origin:0 0;transform:scaleX(1.0608);">Форостян Ольга Іванівна</div>
<svg class="a" style="left:152px;top:770px" width="13" height="13" viewBox="0 0 13 13"><circle cx="6" cy="2.8" r="2.3" fill="#f2f2f2"/><path d="M1 11.5 A4 4.5 0 0 1 5 6" fill="#f2f2f2"/><circle cx="8" cy="8.5" r="4" fill="#f2f2f2"/><path d="M6.8 7.4 A1.2 1.2 0 1 1 8.2 8.6 V9.4" fill="none" stroke="#555" stroke-width="0.9"/><circle cx="8.2" cy="10.8" r="0.5" fill="#555"/></svg>
<div class="a" style="left:171px;top:777px;width:11px;height:1px;background:#a0a0a0"></div>
<svg class="a" style="left:191px;top:771px" width="12" height="12" viewBox="0 0 12 12"><path d="M6 0.5 V11.5 M0.5 6 H11.5" stroke="#e8e8e8" stroke-width="1.2"/></svg>
<svg class="a" style="left:227px;top:348px" width="10" height="12" viewBox="0 0 10 12"><path d="M1.2 1 V9.5 L3.5 7.6 L5 10.6 L6.3 10 L5 7 H8.2Z" fill="#f6f6f6" stroke="#555" stroke-width="0.9" stroke-linejoin="round"/></svg>

</body></html>
